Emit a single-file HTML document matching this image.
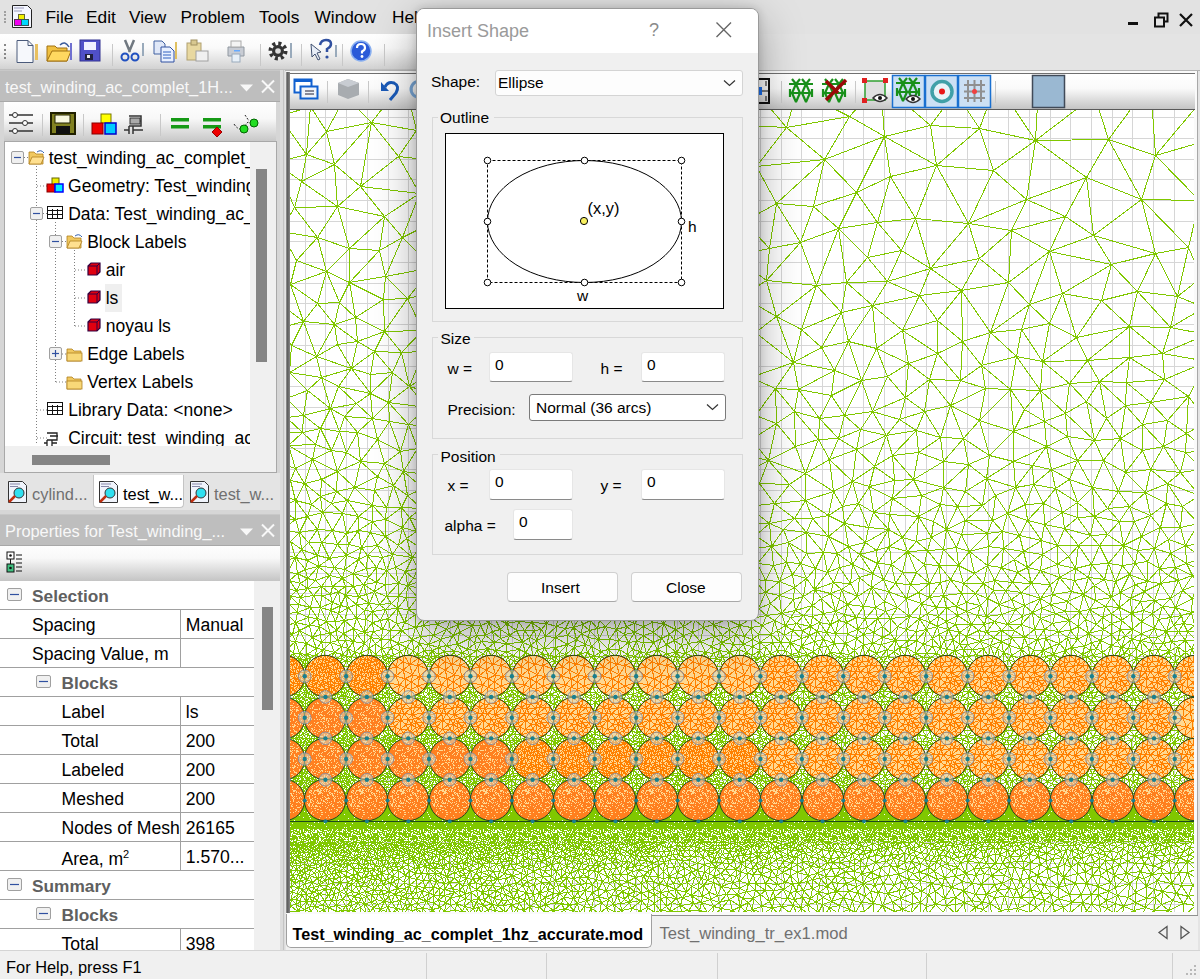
<!DOCTYPE html><html><head><meta charset="utf-8"><style>
*{margin:0;padding:0;box-sizing:border-box}
body{width:1200px;height:979px;overflow:hidden;position:relative;background:#e4e4e4;font-family:"Liberation Sans",sans-serif;}
.a{position:absolute}
.t{position:absolute;white-space:nowrap;line-height:1}
svg{position:absolute;overflow:visible}
</style></head><body>
<div class="a" style="left:0px;top:0px;width:1200px;height:34px;background:#e2e2e2"></div>
<div class="t" style="left:45.5px;top:9.4px;font-size:17.3px;color:#000;">File</div>
<div class="t" style="left:86.0px;top:9.4px;font-size:17.3px;color:#000;">Edit</div>
<div class="t" style="left:129.0px;top:9.4px;font-size:17.3px;color:#000;">View</div>
<div class="t" style="left:180.5px;top:9.4px;font-size:17.3px;color:#000;">Problem</div>
<div class="t" style="left:259.0px;top:9.4px;font-size:17.3px;color:#000;">Tools</div>
<div class="t" style="left:314.5px;top:9.4px;font-size:17.3px;color:#000;">Window</div>
<div class="t" style="left:392.0px;top:9.4px;font-size:17.3px;color:#000;">Help</div>
<svg style="left:12px;top:5px" width="22" height="24"><path d="M.5 .5h15l4 4v18h-19z" fill="#f4f6ff" stroke="#222" stroke-width="1"/><path d="M2 3h10M2 6h8" stroke="#99b" stroke-width="1"/><rect x="6.5" y="9.5" width="6" height="6" fill="#f0f000" stroke="#663"/><rect x="2.5" y="14.5" width="7" height="6" fill="#f000f0" stroke="#535"/><rect x="9.5" y="14.5" width="7" height="6" fill="#00d8ff" stroke="#355"/></svg>
<div class="a" style="left:4px;top:11px;width:2px;height:12px;border-left:2px dotted #a0a0a0"></div>
<div class="a" style="left:1128px;top:22px;width:10px;height:3px;background:#111"></div>
<svg style="left:1154px;top:12px" width="15" height="16"><rect x="4.5" y="1.5" width="9" height="8" fill="none" stroke="#111" stroke-width="2"/><rect x="1" y="5.5" width="9" height="9" fill="#e6e6e6" stroke="#111" stroke-width="2"/></svg>
<svg style="left:1178px;top:13px" width="16" height="14"><path d="M2 1L14 13M14 1L2 13" stroke="#111" stroke-width="2.2"/></svg>
<div class="a" style="left:0px;top:34px;width:430px;height:36px;background:linear-gradient(#ffffff 0%,#fafafa 40%,#d2d2d2 100%);border-bottom:1px solid #c0c0c0"></div>
<div class="a" style="left:4px;top:44px;height:15px;border-left:2px dotted #888"></div>
<svg style="left:14px;top:39px" width="390" height="25">
 <path d="M3 1.5h11l5 5v17h-16z" fill="#f6f8fc" stroke="#4a5a7a"/><path d="M14 1.5v5h5" fill="none" stroke="#4a5a7a"/>
 <rect x="21" y="5" width="3" height="16" fill="#e8c060"/>
 <path d="M33 7h8l2 2h10v13h-20z" fill="#f0c040" stroke="#a07010"/><path d="M33 22l5-10h19l-4 10z" fill="#ffd860" stroke="#a07010"/><path d="M46 6q5-5 9 2" fill="none" stroke="#3a5a9a" stroke-width="1.5"/><rect x="56" y="4" width="2" height="17" fill="#7070d0"/>
 <rect x="66" y="1" width="20" height="21" fill="#5050c8" stroke="#303090"/><rect x="70" y="3" width="12" height="8" fill="#f0f0ff"/><rect x="71" y="15" width="8" height="6" fill="#202040"/><rect x="73" y="16" width="3" height="3" fill="#eee"/>
 <rect x="98" y="5" width="1" height="22" fill="#c8c8c8"/>
 <path d="M111 1l5 12M120 1l-5 12" stroke="#707880" stroke-width="2.5"/><circle cx="111" cy="18" r="3.5" fill="none" stroke="#2050c0" stroke-width="2"/><circle cx="121" cy="18" r="3.5" fill="none" stroke="#2050c0" stroke-width="2"/><rect x="128" y="4" width="2" height="13" fill="#9ab"/>
 <path d="M140 2h8l3 3v10h-11z" fill="#e0e8f8" stroke="#4060a0"/><path d="M147 8h9l4 4v11h-13z" fill="#e8f0ff" stroke="#3050a0"/><path d="M149 13h8M149 16h8M149 19h8" stroke="#3060c0"/><rect x="161" y="3" width="2" height="17" fill="#e0c060"/>
 <rect x="173" y="4" width="14" height="17" fill="#e8d8a0" stroke="#b0a070"/><rect x="177" y="1" width="6" height="5" fill="#d8c890" stroke="#a09060"/><rect x="182" y="12" width="12" height="10" fill="#f0f0f0" stroke="#a0a0a0"/>
 <path d="M214 8h16v9h-16z" fill="#c8ccd4" stroke="#9098a0"/><rect x="217" y="2" width="10" height="6" fill="#f4f4f4" stroke="#aaa"/><rect x="218" y="15" width="8" height="8" fill="#e8f0f8" stroke="#9ab"/><rect x="220" y="11" width="6" height="1.5" fill="#6af"/>
 <rect x="246" y="5" width="1" height="22" fill="#c8c8c8"/>
 <circle cx="264" cy="12" r="7.5" fill="none" stroke="#333" stroke-width="4" stroke-dasharray="3 2.9"/><circle cx="264" cy="12" r="6" fill="#333"/><circle cx="264" cy="12" r="2.8" fill="#ddd"/><rect x="276" y="4" width="2" height="15" fill="#9ab"/>
 <rect x="287" y="5" width="1" height="22" fill="#c8c8c8"/>
 <path d="M297 5l10 8-4 1 3 6-2 1-3-6-3 3z" fill="#e8eef8" stroke="#405070"/><path d="M306 6q1-5 6-5q5 0 5 4q0 3-4 5v3" fill="none" stroke="#3050a0" stroke-width="2.5"/><circle cx="313" cy="18" r="1.6" fill="#3050a0"/><rect x="321" y="6" width="2" height="12" fill="#9ab"/>
 <rect x="328" y="5" width="1" height="22" fill="#c8c8c8"/>
 <circle cx="347" cy="12" r="10" fill="#2a5ad8" stroke="#8ab0f0" stroke-width="1.5"/><path d="M343 9q0-4 4-4t4 4q0 2-3 3.5v2" fill="none" stroke="#fff" stroke-width="2.2"/><circle cx="348" cy="17.5" r="1.4" fill="#fff"/>
 <rect x="370" y="5" width="1" height="22" fill="#c8c8c8"/>
</svg>
<div class="a" style="left:0px;top:70px;width:286px;height:880px;background:#d6d6d6"></div>
<div class="a" style="left:0px;top:70px;width:280px;height:32px;background:#bebebe;border-top:1px solid #c8c8c8;border-bottom:1px solid #a8a8a8"></div>
<div class="t" style="left:5.0px;top:79.1px;font-size:16.4px;color:#f8f8f8;">test_winding_ac_complet_1H...</div>
<svg style="left:239px;top:83px" width="38" height="14"><path d="M1 1.5h13l-6.5 7z" fill="#f8f8f8"/><path d="M23 -2.5l12 12M35 -2.5l-12 12" stroke="#f8f8f8" stroke-width="2"/></svg>
<div class="a" style="left:4px;top:102px;width:272px;height:40px;background:linear-gradient(#fefefe 0%,#f8f8f8 40%,#c6c6c6 100%);border-top:1px solid #fff"></div>
<svg style="left:8px;top:112px" width="250" height="25">
<path d="M1 3h24M1 11h24M1 19h24" stroke="#333" stroke-width="1.5"/><circle cx="7" cy="3" r="2.5" fill="#fff" stroke="#333"/><circle cx="17" cy="11" r="2.5" fill="#fff" stroke="#333"/><circle cx="7" cy="19" r="2.5" fill="#fff" stroke="#333"/>
<rect x="34" y="2" width="1" height="22" fill="#c8c8c8"/>
<rect x="43" y="1" width="24" height="21" fill="#808020" stroke="#202000" stroke-width="2"/><rect x="47" y="3" width="15" height="8" fill="#f8f8e0" stroke="#202000"/><rect x="48" y="14" width="14" height="8" fill="#101010"/>
<rect x="75" y="2" width="1" height="22" fill="#c8c8c8"/>
<rect x="93" y="2" width="10" height="9" fill="#ff0" stroke="#770"/><rect x="84" y="11" width="11" height="11" fill="#e00" stroke="#800"/><rect x="97" y="11" width="11" height="11" fill="#0cf" stroke="#00c" stroke-width="1.5"/>
<path d="M121 4h12v10h-12M124 9h9M121 14v8M125 14v8M116 18h5M125 18h10" fill="none" stroke="#333" stroke-width="1.5"/><rect x="122" y="6" width="10" height="6" fill="#aaa" stroke="#333"/>
<rect x="152" y="2" width="1" height="22" fill="#c8c8c8"/>
<rect x="163" y="6" width="18" height="3.5" fill="#169a16"/><rect x="163" y="13" width="18" height="3.5" fill="#169a16"/>
<rect x="195" y="6" width="18" height="3.5" fill="#169a16"/><rect x="195" y="13" width="18" height="3.5" fill="#169a16"/><path d="M209 15l5 5-5 5-5-5z" fill="#e00" stroke="#900"/>
<path d="M226 12q4 6 8 5l6-7 6 2M237 3l4 6" fill="none" stroke="#222" stroke-dasharray="2 1.5"/><circle cx="236" cy="17" r="4" fill="#2d2" stroke="#060"/><circle cx="246" cy="11" r="4" fill="#2d2" stroke="#060"/>
</svg>
<div class="a" style="left:4px;top:141px;width:273px;height:332px;background:#fff;border:1px solid #a8a8a8"></div>
<div class="a" style="left:250px;top:142px;width:26px;height:330px;background:#f0f0f0"></div>
<div class="a" style="left:256px;top:169px;width:11px;height:193px;background:#858585"></div>
<div class="a" style="left:5px;top:446px;width:246px;height:26px;background:#f0f0f0"></div>
<div class="a" style="left:32px;top:455px;width:78px;height:10px;background:#858585"></div>
<svg style="left:5px;top:142px" width="245" height="304"><path d="M31.5 24L31.5 303" stroke="#808080" stroke-dasharray="1 2" fill="none"/><path d="M50.5 80L50.5 240" stroke="#808080" stroke-dasharray="1 2" fill="none"/><path d="M69.5 108L69.5 184" stroke="#808080" stroke-dasharray="1 2" fill="none"/><path d="M32 44L42 44" stroke="#808080" stroke-dasharray="1 2" fill="none"/><path d="M32 268L42 268" stroke="#808080" stroke-dasharray="1 2" fill="none"/><path d="M32 296L42 296" stroke="#808080" stroke-dasharray="1 2" fill="none"/><path d="M51 212L61 212" stroke="#808080" stroke-dasharray="1 2" fill="none"/><path d="M51 240L61 240" stroke="#808080" stroke-dasharray="1 2" fill="none"/><path d="M70 128L81 128" stroke="#808080" stroke-dasharray="1 2" fill="none"/><path d="M70 156L81 156" stroke="#808080" stroke-dasharray="1 2" fill="none"/><path d="M70 184L81 184" stroke="#808080" stroke-dasharray="1 2" fill="none"/><path d="M19 15.5L24 15.5" stroke="#808080" stroke-dasharray="1 2" fill="none"/><path d="M38 71.5L42 71.5" stroke="#808080" stroke-dasharray="1 2" fill="none"/><path d="M57 99.5L61 99.5" stroke="#808080" stroke-dasharray="1 2" fill="none"/><rect x="6.5" y="9.5" width="12" height="12" rx="1.5" fill="#f0f0f0" stroke="#a0a0a0"/><path d="M9 15.5h7" stroke="#3050a0" stroke-width="1.2"/><rect x="25.5" y="65.5" width="12" height="12" rx="1.5" fill="#f0f0f0" stroke="#a0a0a0"/><path d="M28 71.5h7" stroke="#3050a0" stroke-width="1.2"/><rect x="44.5" y="93.5" width="12" height="12" rx="1.5" fill="#f0f0f0" stroke="#a0a0a0"/><path d="M47 99.5h7" stroke="#3050a0" stroke-width="1.2"/><rect x="44.5" y="205.5" width="12" height="12" rx="1.5" fill="#f0f0f0" stroke="#a0a0a0"/><path d="M47 211.5h7" stroke="#3050a0" stroke-width="1.2"/><path d="M50.5 208v7" stroke="#3050a0" stroke-width="1.2"/><path d="M24 10h5l2 2h7v10h-14z" fill="#f0c860" stroke="#b08020" stroke-width="0.8"/><path d="M24 22l3-7h12l-3 7z" fill="#ffe090" stroke="#b08020" stroke-width="0.8"/><path d="M32 10q4-3 7 1" fill="none" stroke="#3060b0"/><path d="M62 94h5l2 2h7v10h-14z" fill="#f0c860" stroke="#b08020" stroke-width="0.8"/><path d="M62 106l3-7h12l-3 7z" fill="#ffe090" stroke="#b08020" stroke-width="0.8"/><path d="M70 94q4-3 7 1" fill="none" stroke="#3060b0"/><path d="M62 207h5l2 2h7v10h-14z" fill="#f0c860" stroke="#b08020" stroke-width="0.8"/><rect x="62" y="211" width="15" height="8" fill="#f8d878" stroke="#b08020" stroke-width="0.8"/><path d="M62 235h5l2 2h7v10h-14z" fill="#f0c860" stroke="#b08020" stroke-width="0.8"/><rect x="62" y="239" width="15" height="8" fill="#f8d878" stroke="#b08020" stroke-width="0.8"/><rect x="47" y="36" width="7" height="7" fill="#ee0" stroke="#660"/><rect x="42" y="42" width="8" height="8" fill="#e00" stroke="#800"/><rect x="50" y="42" width="8" height="8" fill="#0ef" stroke="#00f" stroke-width="1.5"/><rect x="42.5" y="64.5" width="15" height="12" fill="#fff" stroke="#111"/><path d="M42 68.5h16M42 72.5h16M47.5 67v10M52.5 67v10" stroke="#111"/><rect x="42.5" y="260.5" width="15" height="12" fill="#fff" stroke="#111"/><path d="M42 264.5h16M42 268.5h16M47.5 263v10M52.5 263v10" stroke="#111"/><path d="M83 124l3-3h9v9l-3 3h-9z" fill="#e00010" stroke="#300040" stroke-width="1.2"/><path d="M92 133v-9l3-3" fill="none" stroke="#300040"/><path d="M83 124h9" stroke="#300040"/><path d="M83 152l3-3h9v9l-3 3h-9z" fill="#e00010" stroke="#300040" stroke-width="1.2"/><path d="M92 161v-9l3-3" fill="none" stroke="#300040"/><path d="M83 152h9" stroke="#300040"/><path d="M83 180l3-3h9v9l-3 3h-9z" fill="#e00010" stroke="#300040" stroke-width="1.2"/><path d="M92 189v-9l3-3" fill="none" stroke="#300040"/><path d="M83 180h9" stroke="#300040"/><path d="M42 291h10v7h-10M45 294h8M42 298v6M47 298v6M39 301h3M47 301h5" fill="none" stroke="#222" stroke-width="1.3"/></svg>
<div class="a" style="left:105px;top:284px;width:17px;height:28px;background:#efefef"></div>
<div class="a" style="left:5px;top:142px;width:245px;height:304px;overflow:hidden">
<div class="t" style="left:43.7px;top:8.2px;font-size:17.5px;color:#000;">test_winding_ac_complet_1hz</div>
<div class="t" style="left:63.1px;top:36.2px;font-size:17.5px;color:#000;">Geometry: Test_winding_ac</div>
<div class="t" style="left:63.2px;top:64.2px;font-size:17.5px;color:#000;">Data: Test_winding_ac_complet</div>
<div class="t" style="left:82.2px;top:92.2px;font-size:17.5px;color:#000;">Block Labels</div>
<div class="t" style="left:100.7px;top:120.2px;font-size:17.5px;color:#000;">air</div>
<div class="t" style="left:100.7px;top:148.2px;font-size:17.5px;color:#000;">ls</div>
<div class="t" style="left:100.7px;top:176.2px;font-size:17.5px;color:#000;">noyau ls</div>
<div class="t" style="left:82.2px;top:204.2px;font-size:17.5px;color:#000;">Edge Labels</div>
<div class="t" style="left:82.2px;top:232.2px;font-size:17.5px;color:#000;">Vertex Labels</div>
<div class="t" style="left:63.2px;top:260.2px;font-size:17.5px;color:#000;">Library Data: &lt;none&gt;</div>
<div class="t" style="left:63.2px;top:288.2px;font-size:17.5px;color:#000;">Circuit: test_winding_ac_complet</div>
</div>
<div class="a" style="left:0px;top:473px;width:286px;height:37px;background:#e4e4e4"></div>
<div class="a" style="left:93px;top:475px;width:91px;height:33px;background:#fff;border:1px solid #c4c4c4;border-top:none;border-radius:0 0 4px 4px"></div>
<svg style="left:7px;top:480px" width="22" height="24"><path d="M1.5 1.5h14l4 4v17h-18z" fill="#f0f4fc" stroke="#333"/><path d="M3 4h10M3 6.5h8" stroke="#88a"/><circle cx="12" cy="13" r="5" fill="#30e0f0" stroke="#333"/><path d="M8 16l-6 6" stroke="#c03010" stroke-width="2.5"/></svg>
<svg style="left:98px;top:480px" width="22" height="24"><path d="M1.5 1.5h14l4 4v17h-18z" fill="#f0f4fc" stroke="#333"/><path d="M3 4h10M3 6.5h8" stroke="#88a"/><circle cx="12" cy="13" r="5" fill="#30e0f0" stroke="#333"/><path d="M8 16l-6 6" stroke="#c03010" stroke-width="2.5"/></svg>
<svg style="left:189px;top:480px" width="22" height="24"><path d="M1.5 1.5h14l4 4v17h-18z" fill="#f0f4fc" stroke="#333"/><path d="M3 4h10M3 6.5h8" stroke="#88a"/><circle cx="12" cy="13" r="5" fill="#30e0f0" stroke="#333"/><path d="M8 16l-6 6" stroke="#c03010" stroke-width="2.5"/></svg>
<div class="t" style="left:32.0px;top:486.1px;font-size:16.4px;color:#707070;">cylind...</div>
<div class="t" style="left:123.0px;top:486.1px;font-size:16.4px;color:#000;">test_w...</div>
<div class="t" style="left:214.0px;top:486.1px;font-size:16.4px;color:#707070;">test_w...</div>
<div class="a" style="left:0px;top:514px;width:280px;height:32px;background:#bebebe;border-top:1px solid #c8c8c8;border-bottom:1px solid #a8a8a8"></div>
<div class="t" style="left:5.0px;top:523.1px;font-size:16.4px;color:#f8f8f8;">Properties for Test_winding_...</div>
<svg style="left:239px;top:527px" width="38" height="14"><path d="M1 1.5h13l-6.5 7z" fill="#f8f8f8"/><path d="M23 -2.5l12 12M35 -2.5l-12 12" stroke="#f8f8f8" stroke-width="2"/></svg>
<div class="a" style="left:0px;top:546px;width:280px;height:35px;background:linear-gradient(#fefefe 0%,#f8f8f8 35%,#c4c4c4 100%)"></div>
<svg style="left:6px;top:551px" width="24" height="25"><rect x="1" y="1" width="7" height="7" fill="#fff" stroke="#111"/><rect x="1" y="13" width="7" height="8" fill="#40c080" stroke="#111"/><path d="M4.5 8v5M10 4h6M10 8h6M10 12h6M10 16h6M10 20h6" stroke="#111"/><circle cx="4.5" cy="4.5" r="1.3" fill="#111"/><circle cx="4.5" cy="17" r="1.3" fill="#111"/></svg>
<div class="a" style="left:0px;top:581px;width:254px;height:369px;background:#fff"></div>
<div class="a" style="left:254px;top:581px;width:26px;height:369px;background:#f0f0f0"></div>
<div class="a" style="left:262px;top:607px;width:11px;height:103px;background:#858585"></div>
<div class="a" style="left:0px;top:609px;width:254px;height:1px;background:#a0a0a0"></div>
<div class="a" style="left:0px;top:638px;width:254px;height:1px;background:#a0a0a0"></div>
<div class="a" style="left:0px;top:667px;width:254px;height:1px;background:#a0a0a0"></div>
<div class="a" style="left:0px;top:696px;width:254px;height:1px;background:#a0a0a0"></div>
<div class="a" style="left:0px;top:725px;width:254px;height:1px;background:#a0a0a0"></div>
<div class="a" style="left:0px;top:754px;width:254px;height:1px;background:#a0a0a0"></div>
<div class="a" style="left:0px;top:783px;width:254px;height:1px;background:#a0a0a0"></div>
<div class="a" style="left:0px;top:812px;width:254px;height:1px;background:#a0a0a0"></div>
<div class="a" style="left:0px;top:841px;width:254px;height:1px;background:#a0a0a0"></div>
<div class="a" style="left:0px;top:870px;width:254px;height:1px;background:#a0a0a0"></div>
<div class="a" style="left:0px;top:899px;width:254px;height:1px;background:#a0a0a0"></div>
<div class="a" style="left:0px;top:928px;width:254px;height:1px;background:#a0a0a0"></div>
<div class="a" style="left:180px;top:609px;width:1px;height:58px;background:#a0a0a0"></div>
<div class="a" style="left:180px;top:696px;width:1px;height:174px;background:#a0a0a0"></div>
<div class="a" style="left:180px;top:928px;width:1px;height:22px;background:#a0a0a0"></div>
<svg style="left:7px;top:588px" width="16" height="14"><rect x=".5" y=".5" width="14" height="12" rx="1.5" fill="#f0f0f0" stroke="#a0a0a0"/><path d="M3 6.5h9" stroke="#3050a0" stroke-width="1.2"/></svg>
<svg style="left:36px;top:675px" width="16" height="14"><rect x=".5" y=".5" width="14" height="12" rx="1.5" fill="#f0f0f0" stroke="#a0a0a0"/><path d="M3 6.5h9" stroke="#3050a0" stroke-width="1.2"/></svg>
<svg style="left:7px;top:878px" width="16" height="14"><rect x=".5" y=".5" width="14" height="12" rx="1.5" fill="#f0f0f0" stroke="#a0a0a0"/><path d="M3 6.5h9" stroke="#3050a0" stroke-width="1.2"/></svg>
<svg style="left:36px;top:907px" width="16" height="14"><rect x=".5" y=".5" width="14" height="12" rx="1.5" fill="#f0f0f0" stroke="#a0a0a0"/><path d="M3 6.5h9" stroke="#3050a0" stroke-width="1.2"/></svg>
<div class="t" style="left:32.0px;top:588.4px;font-size:17.3px;color:#606060;font-weight:bold;">Selection</div>
<div class="t" style="left:61.5px;top:675.4px;font-size:17.3px;color:#606060;font-weight:bold;">Blocks</div>
<div class="t" style="left:32.0px;top:878.4px;font-size:17.3px;color:#606060;font-weight:bold;">Summary</div>
<div class="t" style="left:61.5px;top:907.4px;font-size:17.3px;color:#606060;font-weight:bold;">Blocks</div>
<div class="a" style="left:0;top:581px;width:180px;height:369px;overflow:hidden">
<div class="t" style="left:32.0px;top:36.1px;font-size:17.6px;color:#000;">Spacing</div>
<div class="t" style="left:32.0px;top:65.1px;font-size:17.6px;color:#000;">Spacing Value, m</div>
<div class="t" style="left:61.5px;top:123.1px;font-size:17.6px;color:#000;">Label</div>
<div class="t" style="left:61.5px;top:152.1px;font-size:17.6px;color:#000;">Total</div>
<div class="t" style="left:61.5px;top:181.1px;font-size:17.6px;color:#000;">Labeled</div>
<div class="t" style="left:61.5px;top:210.1px;font-size:17.6px;color:#000;">Meshed</div>
<div class="t" style="left:61.5px;top:239.1px;font-size:17.6px;color:#000;">Nodes of Mesh</div>
<div class="t" style="left:61.5px;top:268.1px;font-size:17.6px;color:#000;">Area, m<sup style="font-size:11px;vertical-align:7px">2</sup></div>
<div class="t" style="left:61.5px;top:355.1px;font-size:17.6px;color:#000;">Total</div>
</div>
<div class="t" style="left:185.8px;top:617.1px;font-size:17.6px;color:#000;">Manual</div>
<div class="t" style="left:185.8px;top:704.1px;font-size:17.6px;color:#000;">ls</div>
<div class="t" style="left:185.8px;top:733.1px;font-size:17.6px;color:#000;">200</div>
<div class="t" style="left:185.8px;top:762.1px;font-size:17.6px;color:#000;">200</div>
<div class="t" style="left:185.8px;top:791.1px;font-size:17.6px;color:#000;">200</div>
<div class="t" style="left:185.8px;top:820.1px;font-size:17.6px;color:#000;">26165</div>
<div class="t" style="left:185.8px;top:849.1px;font-size:17.6px;color:#000;">1.570...</div>
<div class="t" style="left:185.8px;top:936.1px;font-size:17.6px;color:#000;">398</div>
<div class="a" style="left:280px;top:70px;width:6px;height:880px;background:#dcdcdc"></div>
<div class="a" style="left:283px;top:70px;width:1px;height:880px;background:#c4c4c4"></div>
<div class="a" style="left:0px;top:950px;width:1200px;height:29px;background:#f0f0f0;border-top:1px solid #d4d4d4"></div>
<div class="t" style="left:6.0px;top:959.1px;font-size:16.4px;color:#000;">For Help, press F1</div>
<div class="a" style="left:426px;top:953px;width:1px;height:26px;background:#d0d0d0"></div>
<div class="a" style="left:546px;top:953px;width:1px;height:26px;background:#d0d0d0"></div>
<div class="a" style="left:717px;top:953px;width:1px;height:26px;background:#d0d0d0"></div>
<div class="a" style="left:926px;top:953px;width:1px;height:26px;background:#d0d0d0"></div>
<div class="a" style="left:1172px;top:953px;width:1px;height:26px;background:#d0d0d0"></div>
<svg style="left:1184px;top:963px" width="16" height="16"><g fill="#b8b8b8"><rect x="10" y="2" width="2" height="2"/><rect x="6" y="6" width="2" height="2"/><rect x="10" y="6" width="2" height="2"/><rect x="2" y="10" width="2" height="2"/><rect x="6" y="10" width="2" height="2"/><rect x="10" y="10" width="2" height="2"/></g></svg>
<div class="a" style="left:285px;top:70px;width:915px;height:880px;background:#e4e4e4"></div>
<div class="a" style="left:285px;top:70px;width:915px;height:1px;background:#b4b4b4"></div>
<div class="a" style="left:286px;top:71px;width:912px;height:846px;background:#fafafa"></div>
<div class="a" style="left:286px;top:72px;width:4px;height:841px;background:linear-gradient(90deg,#9a9a9a,#5e5e5e 40%,#8a8a8a)"></div>
<div class="a" style="left:1197px;top:71px;width:1px;height:845px;background:#a8a8a8"></div>
<div class="a" style="left:286px;top:915px;width:912px;height:1px;background:#909090"></div>
<div class="a" style="left:290px;top:73px;width:905px;height:37px;background:linear-gradient(#ffffff 0%,#fafafa 40%,#c2c2c2 100%);border-top:1px solid #707070"></div>
<div class="a" style="left:290px;top:109px;width:905px;height:1px;background:#5a5a5a"></div>
<svg style="left:290px;top:73px" width="905" height="37">
<rect x="4.5" y="6.5" width="17" height="13" fill="#fff" stroke="#1060d0" stroke-width="2"/><rect x="4" y="6" width="18" height="3" fill="#1060d0"/><rect x="10.5" y="13.5" width="17" height="12" fill="#f0f4fa" stroke="#1060d0" stroke-width="2"/><path d="M15 18h9M15 21h9" stroke="#667" stroke-width="1.5"/>
<rect x="37" y="8" width="1" height="22" fill="#c8c8c8"/>
<path d="M48 10l10-4 11 4v12l-11 4-10-4z" fill="#a8acb0"/><path d="M48 10l10 4 11-4-11-4z" fill="#c8ccd2"/>
<rect x="78" y="8" width="1" height="22" fill="#c8c8c8"/>
<path d="M95 14q3-6 9-4q6 3 2 10l-6 7" fill="none" stroke="#1a5ab8" stroke-width="3"/><path d="M91 9v9h8z" fill="#1a5ab8"/>
<path d="M135 11a8 8 0 1 0 2 6" fill="none" stroke="#7aa8d8" stroke-width="3"/>
</svg>
<svg style="left:758px;top:73px" width="320" height="37">
<path d="M-1 6h12v24h-12" fill="none" stroke="#111" stroke-width="2"/><rect x="-3" y="14" width="7" height="8" fill="#1a70f0"/><path d="M4 18h6M8 8v5M8 23v5" stroke="#111"/>
<rect x="23" y="8" width="1" height="22" fill="#c8c8c8"/>
<path d="M31 11h24M31 20h24M32 16v8M54 16v8M34 6L38 11L42 6M38 11L34 20L38 29M38 11L42 20L38 29M44 6L48 11L52 6M48 11L44 20L48 29M48 11L52 20L48 29" stroke="#18901a" stroke-width="2.2" fill="none"/>
<path d="M64 11h24M64 20h24M65 16v8M87 16v8M67 6L71 11L75 6M71 11L67 20L71 29M71 11L75 20L71 29M77 6L81 11L85 6M81 11L77 20L81 29M81 11L85 20L81 29" stroke="#18901a" stroke-width="2.2" fill="none"/><path d="M68 27l20-20M68 8l12 12" stroke="#9a0808" stroke-width="3.5"/>
<rect x="97" y="8" width="1" height="22" fill="#c8c8c8"/>
<rect x="107" y="8" width="20" height="19" fill="#e0e0e0" stroke="#30a030" stroke-width="1.5"/><g fill="#e02020"><rect x="104" y="5" width="5" height="5"/><rect x="125" y="5" width="5" height="5"/><rect x="104" y="25" width="5" height="5"/></g><path d="M115 25q7-7 14 0q-7 7-14 0z" fill="#fff" stroke="#333" stroke-width="1.5"/><circle cx="122" cy="25" r="2" fill="#111"/>
<rect x="134.5" y="2.5" width="32" height="32" fill="#cce0f4" stroke="#1a70d0" stroke-width="1.5"/><rect x="167.5" y="2.5" width="32" height="32" fill="#cce0f4" stroke="#1a70d0" stroke-width="1.5"/><rect x="200.5" y="2.5" width="32" height="32" fill="#cce0f4" stroke="#1a70d0" stroke-width="1.5"/>
<path d="M138 10h24M138 19h24M139 15v8M161 15v8M141 5L145 10L149 5M145 10L141 19L145 28M145 10L149 19L145 28M151 5L155 10L159 5M155 10L151 19L155 28M155 10L159 19L155 28" stroke="#18901a" stroke-width="2.2" fill="none"/><path d="M148 26q7-7 14 0q-7 7-14 0z" fill="#fff" stroke="#333" stroke-width="1.5"/><circle cx="155" cy="26" r="2" fill="#111"/>
<circle cx="184" cy="18.5" r="10" fill="#e8f4f8" stroke="#40a0a8" stroke-width="3.5"/><circle cx="184" cy="18.5" r="3" fill="#e81818"/>
<path d="M206 12h21M206 18.5h21M206 25h21M210 7v22M216.5 7v22M223 7v22" stroke="#909090" stroke-width="2"/><circle cx="216.5" cy="18.5" r="2.5" fill="#f04040"/>
<rect x="237" y="8" width="1" height="22" fill="#c8c8c8"/>
<rect x="274.5" y="2.5" width="32" height="32" fill="#9ab8d2" stroke="#404a58" stroke-width="1.5"/>
</svg>
<svg style="left:290px;top:110px;overflow:hidden" width="904" height="802" viewBox="0 0 904 802"><defs><g id="cA"><circle r="20.7" fill="#ffd890"/><path d="M10.3 -17.9L1.6 -11.4M-10.3 17.9L-8.4 9.0M15.9 -13.3L9.9 -10.7M3.3 13.5L9.9 9.9M4.6 -1.1L-4.7 -6.0M10.4 17.9L3.6 20.4M15.9 -13.3L19.5 -7.1M-10.4 -17.9L-3.6 -20.4M9.9 -10.7L11.5 0.7M-19.5 7.1L-20.7 0.0M10.4 17.9L3.3 13.5M-3.6 20.4L-3.0 11.3M-3.6 20.4L3.3 13.5M-19.5 7.1L-8.4 9.0M-2.9 2.7L-4.7 -6.0M20.7 0.0L19.5 -7.1M-3.6 -20.4L3.6 -20.4M20.7 0.0L11.5 0.7M-3.6 -20.4L-5.0 -14.3M-19.5 -7.1L-11.4 -9.0M4.6 -1.1L11.5 0.7M15.9 13.3L9.9 9.9M10.3 -17.9L9.9 -10.7M3.3 13.5L3.1 6.0M-8.4 9.0L-3.0 11.3M3.6 20.4L-3.6 20.4M-8.4 9.0L-12.2 0.2M-8.4 9.0L-2.9 2.7M11.5 0.7L9.9 9.9M-3.6 20.4L-10.3 17.9M1.6 -11.4L4.6 -1.1M9.9 9.9L3.1 6.0M1.6 -11.4L-4.7 -6.0M-3.0 11.3L3.1 6.0M3.6 -20.4L10.3 -17.9M3.6 -20.4L1.6 -11.4M-12.2 0.2L-2.9 2.7M-5.0 -14.3L-4.7 -6.0M-5.0 -14.3L-11.4 -9.0M-10.4 -17.9L-11.4 -9.0M-20.7 0.0L-19.5 -7.1M20.7 0.0L19.5 7.1M19.5 7.1L15.9 13.3M19.5 -7.1L9.9 -10.7M19.5 -7.1L11.5 0.7M-19.5 -7.1L-15.9 -13.3M-11.4 -9.0L-4.7 -6.0M-20.7 0.0L-12.2 0.2M10.3 -17.9L15.9 -13.3M-10.3 17.9L-15.9 13.3M19.5 7.1L11.5 0.7M4.6 -1.1L-2.9 2.7M19.5 7.1L9.9 9.9M-10.3 17.9L-3.0 11.3M4.6 -1.1L3.1 6.0M-15.9 13.3L-8.4 9.0M1.6 -11.4L-5.0 -14.3M9.9 -10.7L1.6 -11.4M11.5 0.7L3.1 6.0M-10.4 -17.9L-5.0 -14.3M9.9 -10.7L4.6 -1.1M-12.2 0.2L-11.4 -9.0M-12.2 0.2L-4.7 -6.0M3.6 20.4L3.3 13.5M15.9 13.3L10.4 17.9M10.4 17.9L9.9 9.9M-15.9 -13.3L-10.4 -17.9M-3.0 11.3L3.3 13.5M-19.5 7.1L-12.2 0.2M-3.0 11.3L-2.9 2.7M-2.9 2.7L3.1 6.0M-19.5 -7.1L-12.2 0.2M-3.6 -20.4L1.6 -11.4M-15.9 -13.3L-11.4 -9.0M-15.9 13.3L-19.5 7.1" stroke="#ff8000" stroke-width="1" fill="none" shape-rendering="crispEdges"/><circle r="20.7" fill="none" stroke="#1e4a1e" stroke-width="1"/></g><g id="cB"><circle r="20.7" fill="#ffd890"/><path d="M-15.3 4.7L-13.2 0.6M-1.9 -14.0L2.6 -9.6M14.7 -4.7L11.8 -10.1M-8.0 11.3L-7.6 2.4M5.2 1.1L3.3 6.6M14.7 -4.7L4.3 -3.5M14.7 -4.7L9.8 0.3M19.9 5.6L14.9 4.5M-6.9 -19.5L-1.9 -14.0M-13.1 8.9L-15.3 4.7M-11.9 16.9L-16.1 13.1M0.3 1.1L4.3 -3.5M5.1 -15.3L2.6 -9.6M14.1 15.1L8.8 13.8M-3.4 -4.4L4.3 -3.5M-7.6 2.4L0.3 1.1M4.2 -20.3L9.5 -18.4M-13.1 -5.0L-8.1 -4.1M-16.1 -13.1L-11.9 -16.9M0.3 1.1L5.2 1.1M-20.5 -2.8L-13.1 -5.0M-16.1 13.1L-19.0 8.2M2.9 14.3L8.8 13.8M-11.9 -16.9L-6.9 -19.5M-1.6 6.6L-0.6 11.1M-19.0 -8.2L-11.4 -10.5M-11.9 -16.9L-6.9 -13.8M-19.0 8.2L-13.1 8.9M-7.6 2.4L-3.4 -4.4M-20.5 2.8L-13.2 0.6M14.1 -15.1L11.8 -10.1M-6.6 -8.8L-8.1 -4.1M14.1 15.1L12.4 8.6M8.8 13.8L7.6 9.3M-6.9 -19.5L-1.4 -20.7M7.2 -10.8L2.6 -9.6M9.5 -18.4L7.2 -10.8M-11.4 -10.5L-6.6 -8.8M11.8 -10.1L4.3 -3.5M-6.9 19.5L-4.3 14.4M-7.6 2.4L-8.1 -4.1M5.2 1.1L9.8 0.3M-6.9 -13.8L-1.9 -14.0M-20.5 -2.8L-19.0 -8.2M-8.0 11.3L-0.6 11.1M-16.1 -13.1L-11.4 -10.5M-4.3 14.4L2.9 14.3M14.9 4.5L15.8 -0.2M-19.0 -8.2L-16.1 -13.1M-7.6 2.4L-1.6 6.6M15.8 -0.2L9.8 0.3M-20.5 2.8L-15.3 4.7M20.7 0.0L15.8 -0.2M-6.6 -8.8L-1.9 -14.0M0.3 1.1L-3.4 -4.4M9.5 -18.4L14.1 -15.1M-11.9 16.9L-13.1 8.9M-1.6 6.6L3.3 6.6M3.3 6.6L-0.6 11.1M9.5 -18.4L5.1 -15.3M14.1 -15.1L17.7 -10.8M17.7 10.8L14.9 4.5M-1.4 20.7L2.9 14.3M-3.4 -4.4L2.6 -9.6M-4.3 14.4L-8.0 11.3M9.5 18.4L2.9 14.3M9.5 18.4L8.8 13.8M-11.4 -10.5L-8.1 -4.1M-3.4 -4.4L-6.6 -8.8M17.7 -10.8L19.9 -5.6M-8.0 11.3L-1.6 6.6M5.1 -15.3L-1.9 -14.0M-20.5 -2.8L-13.2 0.6M-1.4 -20.7L4.2 -20.3M-13.1 -5.0L-11.4 -10.5M-13.1 -5.0L-13.2 0.6M19.9 -5.6L15.8 -0.2M-6.9 -13.8L-11.4 -10.5M17.7 10.8L12.4 8.6M-8.0 11.3L-13.1 8.9M7.9 4.7L3.3 6.6M4.2 20.3L-1.4 20.7M17.7 -10.8L14.7 -4.7M7.9 4.7L7.6 9.3M17.7 -10.8L11.8 -10.1M14.7 -4.7L15.8 -0.2M19.9 5.6L17.7 10.8M-11.9 16.9L-8.0 11.3M20.7 0.0L19.9 -5.6M-1.4 -20.7L5.1 -15.3M3.3 6.6L7.6 9.3M-19.0 8.2L-15.3 4.7M-1.4 -20.7L-1.9 -14.0M-13.1 8.9L-7.6 2.4M12.4 8.6L7.9 4.7M19.9 5.6L15.8 -0.2M17.7 10.8L14.1 15.1M7.2 -10.8L5.1 -15.3M2.9 14.3L-0.6 11.1M-7.6 2.4L-13.2 0.6M-13.2 0.6L-8.1 -4.1M-19.0 -8.2L-13.1 -5.0M14.1 15.1L9.5 18.4M-3.4 -4.4L-8.1 -4.1M7.9 4.7L14.9 4.5M4.3 -3.5L9.8 0.3M4.2 -20.3L5.1 -15.3M12.4 8.6L7.6 9.3M0.3 1.1L3.3 6.6M4.2 20.3L2.9 14.3M-16.1 13.1L-13.1 8.9M-1.4 20.7L-4.3 14.4M-6.9 -19.5L-6.9 -13.8M9.5 18.4L4.2 20.3M4.3 -3.5L5.2 1.1M7.9 4.7L9.8 0.3M4.3 -3.5L2.6 -9.6M-6.9 -13.8L-6.6 -8.8M20.7 0.0L19.9 5.6M14.1 -15.1L7.2 -10.8M-6.6 -8.8L2.6 -9.6M-19.0 8.2L-20.5 2.8M-11.9 16.9L-4.3 14.4M-1.6 6.6L0.3 1.1M7.2 -10.8L4.3 -3.5M-7.6 2.4L-15.3 4.7M-4.3 14.4L-0.6 11.1M-1.4 20.7L-6.9 19.5M11.8 -10.1L7.2 -10.8M-11.9 -16.9L-11.4 -10.5M7.9 4.7L5.2 1.1M12.4 8.6L8.8 13.8M12.4 8.6L14.9 4.5M19.9 -5.6L14.7 -4.7M14.9 4.5L9.8 0.3M-20.5 2.8L-20.5 -2.8M2.9 14.3L3.3 6.6M2.9 14.3L7.6 9.3M-6.9 19.5L-11.9 16.9" stroke="#ff8000" stroke-width="1" fill="none" shape-rendering="crispEdges"/><circle r="20.7" fill="none" stroke="#1e4a1e" stroke-width="1"/></g><g id="cC"><circle r="20.7" fill="#ffd890"/><path d="M9.0 -11.4L8.6 -6.2M15.9 -13.3L12.7 -12.8M15.9 13.3L12.7 11.3M-7.4 -13.4L-6.0 -16.3M6.0 8.9L2.5 7.1M0.9 -3.7L-2.3 -3.1M-12.5 10.8L-10.8 13.6M8.6 -6.2L7.1 -3.5M-2.6 -16.6L0.6 -16.4M-2.3 -3.1L-1.2 0.6M3.6 20.4L0.0 20.7M-15.2 -5.6L-11.7 -3.8M4.2 11.7L7.2 12.1M-11.4 -12.5L-8.2 -10.5M9.0 -11.4L2.7 -10.5M10.7 1.6L5.9 -0.3M11.0 -2.7L5.9 -0.3M3.6 20.4L0.4 17.5M-3.6 -20.4L-6.0 -16.3M-10.6 -8.7L-11.7 -3.8M-14.0 -9.3L-15.2 -5.6M0.9 -3.7L2.7 2.2M-2.6 -16.6L0.7 -13.1M-3.6 20.4L-2.2 15.1M0.4 17.5L2.9 14.8M-20.7 0.0L-20.4 -3.6M-2.2 -6.2L-1.6 -9.3M-15.9 13.3L-17.9 10.4M0.0 20.7L-3.6 20.4M-9.1 -5.9L-11.7 -3.8M7.1 -19.5L9.7 -14.8M3.9 -3.2L2.7 2.2M4.2 11.7L2.5 7.1M17.9 10.3L15.0 8.1M3.9 -3.2L7.1 -3.5M20.4 -3.6L17.0 1.4M-17.9 10.4L-19.5 7.1M-2.7 -12.3L-1.6 -9.3M-17.6 0.6L-13.8 1.4M-14.6 5.2L-13.8 1.4M-0.0 -20.7L0.6 -16.4M0.8 -7.4L2.7 -10.5M-7.1 19.5L-5.1 16.7M-15.9 13.3L-12.5 10.8M2.7 2.2L5.9 -0.3M4.2 11.7L2.9 14.8M-17.9 -10.4L-14.0 -9.3M-11.4 -0.4L-8.3 -0.2M15.1 -3.1L12.3 -6.9M5.9 -0.3L7.1 -3.5M7.1 -19.5L4.7 -17.6M-5.7 -8.3L-8.2 -10.5M-11.4 -0.4L-11.5 3.4M-19.5 -7.1L-15.2 -5.6M20.4 3.6L17.0 1.4M11.0 -2.7L8.6 -6.2M-19.5 7.1L-20.4 3.6M-10.6 -8.7L-9.1 -5.9M9.9 14.2L9.8 10.4M-0.6 8.4L-2.3 4.3M-11.5 3.4L-12.5 7.7M-5.0 0.1L-1.2 0.6M10.3 -17.9L9.7 -14.8M-10.3 17.9L-13.3 15.9M-20.4 -3.6L-16.1 -2.4M-15.9 -13.3L-13.3 -15.9M9.1 7.4L5.5 4.3M-13.3 -15.9L-11.4 -12.5M2.7 2.2L-1.2 0.6M15.1 -3.1L13.8 2.4M-6.6 5.4L-5.0 0.1M-7.4 -13.4L-2.7 -12.3M5.4 16.3L9.9 14.2M5.5 4.3L5.9 -0.3M-13.3 15.9L-15.9 13.3M-2.2 15.1L-5.1 16.7M12.7 11.3L9.9 14.2M-14.6 5.2L-12.5 7.7M4.9 -14.3L4.7 -17.6M-10.4 -17.9L-6.0 -16.3M2.9 14.8L0.2 12.9M0.9 -3.7L3.9 -3.2M15.1 -3.1L11.0 -2.7M-8.3 -0.2L-6.6 5.4M-17.6 0.6L-16.1 -2.4M12.7 -12.8L9.0 -11.4M13.3 15.9L12.7 11.3M-2.2 15.1L-5.7 13.5M-5.7 13.5L-8.4 11.9M-2.7 -12.3L-5.7 -8.3M0.8 -7.4L-1.6 -9.3M9.1 7.4L10.7 1.6M5.4 16.3L7.2 12.1M9.7 -14.8L9.0 -11.4M15.3 -7.5L12.3 -6.9M13.3 -15.9L12.7 -12.8M-13.3 -15.9L-10.4 -17.9M5.5 4.3L6.0 8.9M-15.2 -5.6L-16.1 -2.4M5.5 4.3L2.5 7.1M10.4 17.9L9.9 14.2M-6.6 5.4L-2.3 4.3M15.0 8.1L9.1 7.4M5.4 16.3L4.2 11.7M-20.4 -3.6L-19.5 -7.1M4.9 -14.3L0.7 -13.1M-2.7 -12.3L0.7 -13.1M-10.4 -17.9L-7.1 -19.5M-2.7 -12.3L-8.2 -10.5M-11.7 -3.8L-8.3 -0.2M-5.7 -8.3L-1.6 -9.3M-20.4 -3.6L-17.6 0.6M-8.3 -0.2L-5.0 0.1M-5.0 0.1L-2.3 -3.1M0.8 -7.4L0.9 -3.7M-5.0 0.1L-2.3 4.3M-5.7 13.5L-3.7 8.8M2.5 7.1L-2.3 4.3M-14.0 -9.3L-10.6 -8.7M-19.5 -7.1L-17.9 -10.4M-20.4 -3.6L-15.2 -5.6M13.8 2.4L12.0 5.1M10.4 17.9L5.4 16.3M-17.9 10.4L-12.5 7.7M2.7 2.2L-2.3 4.3M13.8 2.4L17.0 1.4M4.2 11.7L6.0 8.9M4.2 11.7L-0.6 8.4M9.0 -11.4L4.6 -7.8M10.3 -17.9L13.3 -15.9M-8.3 -0.2L-5.7 -4.2M-14.6 5.2L-17.6 0.6M-0.0 -20.7L-2.6 -16.6M-13.3 15.9L-10.8 13.6M3.6 20.4L5.4 16.3M-7.1 -19.5L-3.6 -20.4M0.0 20.7L0.4 17.5M4.6 -7.8L8.6 -6.2M-9.0 7.5L-12.5 7.7M-13.8 1.4L-11.5 3.4M-5.7 13.5L0.2 12.9M2.5 7.1L2.7 2.2M5.4 16.3L2.9 14.8M-3.6 -20.4L-0.0 -20.7M15.9 -13.3L15.3 -7.5M19.5 7.1L15.0 8.1M-5.7 -8.3L-5.7 -4.2M-17.9 -10.4L-15.9 -13.3M-17.9 10.4L-14.6 5.2M13.3 -15.9L15.9 -13.3M11.0 -2.7L10.7 1.6M-7.4 -13.4L-8.2 -10.5M-20.4 3.6L-20.7 0.0M20.4 3.6L15.3 5.1M-0.0 -20.7L3.6 -20.4M-15.9 -13.3L-14.0 -9.3M19.5 -7.1L15.3 -7.5M-10.6 -8.7L-8.2 -10.5M-20.4 3.6L-14.6 5.2M-2.6 -16.6L-6.0 -16.3M-8.3 -0.2L-11.5 3.4M15.3 5.1L12.0 5.1M-11.5 3.4L-6.6 5.4M-3.6 20.4L0.4 17.5M3.6 -20.4L4.7 -17.6M12.7 -12.8L12.3 -6.9M3.6 -20.4L0.6 -16.4M-10.8 13.6L-8.4 11.9M0.4 17.5L0.2 12.9M-10.3 17.9L-8.3 15.4M-7.4 -13.4L-11.4 -12.5M9.8 10.4L9.1 7.4M2.5 7.1L-0.6 8.4M13.3 15.9L10.4 17.9M-2.2 -6.2L0.8 -7.4M-9.1 -5.9L-8.2 -10.5M12.3 -6.9L8.6 -6.2M9.0 -11.4L4.9 -14.3M-10.6 -8.7L-11.4 -12.5M-15.9 13.3L-10.8 13.6M13.8 2.4L11.0 -2.7M15.0 8.1L12.0 5.1M-8.4 11.9L-9.0 7.5M-1.2 0.6L-2.3 4.3M20.4 3.6L19.5 7.1M5.5 4.3L2.7 2.2M3.6 -20.4L7.1 -19.5M-3.7 8.8L-6.6 5.4M2.7 -10.5L-1.6 -9.3M-20.4 3.6L-17.6 0.6M-2.2 -6.2L-5.7 -4.2M4.6 -7.8L7.1 -3.5M11.0 -2.7L7.1 -3.5M-2.2 -6.2L-2.3 -3.1M7.1 -19.5L10.3 -17.9M9.1 7.4L6.0 8.9M-16.1 -2.4L-11.7 -3.8M4.2 11.7L0.2 12.9M-2.2 15.1L0.2 12.9M13.8 2.4L10.7 1.6M19.5 7.1L17.9 10.3M4.9 -14.3L2.7 -10.5M-5.1 16.7L-8.3 15.4M12.0 5.1L10.7 1.6M12.7 -12.8L15.3 -7.5M-11.7 -3.8L-11.4 -0.4M-7.1 -19.5L-6.0 -16.3M12.7 -12.8L9.7 -14.8M13.3 15.9L9.9 14.2M17.9 10.3L15.9 13.3M-15.2 -5.6L-10.6 -8.7M15.3 -7.5L15.1 -3.1M-3.6 20.4L-5.1 16.7M0.8 -7.4L3.9 -3.2M5.5 4.3L10.7 1.6M-12.5 10.8L-9.0 7.5M0.2 12.9L-0.6 8.4M13.8 2.4L15.3 5.1M9.7 -14.8L4.9 -14.3M-8.3 15.4L-8.4 11.9M-20.7 0.0L-17.6 0.6M0.4 17.5L-2.2 15.1M9.9 14.2L7.2 12.1M12.3 -6.9L9.0 -11.4M12.3 -6.9L11.0 -2.7M3.9 -3.2L5.9 -0.3M19.5 -7.1L15.1 -3.1M-9.0 7.5L-6.6 5.4M-11.5 3.4L-9.0 7.5M-13.8 1.4L-11.4 -0.4M-17.9 10.4L-12.5 10.8M-3.7 8.8L-2.3 4.3M0.6 -16.4L4.9 -14.3M15.9 -13.3L17.9 -10.3M15.9 13.3L15.0 8.1M15.1 -3.1L17.0 1.4M20.7 0.0L20.4 -3.6M12.7 11.3L9.8 10.4M9.7 -14.8L4.7 -17.6M-10.4 -17.9L-7.4 -13.4M-8.3 15.4L-5.7 13.5M0.9 -3.7L-1.2 0.6M15.9 13.3L13.3 15.9M-10.3 17.9L-10.8 13.6M0.8 -7.4L4.6 -7.8M-3.6 -20.4L-2.6 -16.6M-8.3 15.4L-10.8 13.6M15.0 8.1L9.8 10.4M9.8 10.4L7.2 12.1M-16.1 -2.4L-11.4 -0.4M-8.4 11.9L-3.7 8.8M-2.6 -16.6L-2.7 -12.3M-15.9 -13.3L-11.4 -12.5M-14.6 5.2L-11.5 3.4M-2.7 -12.3L-6.0 -16.3M-3.6 20.4L-7.1 19.5M7.1 19.5L5.4 16.3M20.7 0.0L20.4 3.6M-3.7 8.8L-9.0 7.5M0.6 -16.4L4.7 -17.6M2.7 -10.5L4.6 -7.8M13.3 -15.9L9.7 -14.8M20.7 0.0L17.0 1.4M-17.9 -10.4L-15.2 -5.6M4.6 -7.8L3.9 -3.2M-9.1 -5.9L-5.7 -4.2M-5.7 -4.2L-5.0 0.1M-5.7 -8.3L-9.1 -5.9M10.4 17.9L7.1 19.5M2.7 -10.5L0.7 -13.1M-10.4 -17.9L-11.4 -12.5M17.9 -10.3L19.5 -7.1M-2.2 -6.2L0.9 -3.7M17.9 -10.3L15.3 -7.5M6.0 8.9L7.2 12.1M9.8 10.4L6.0 8.9M-12.5 10.8L-8.4 11.9M-19.5 7.1L-14.6 5.2M15.0 8.1L12.7 11.3M20.4 -3.6L15.1 -3.1M0.2 12.9L-3.7 8.8M15.0 8.1L15.3 5.1M0.4 17.5L5.4 16.3M-12.5 10.8L-12.5 7.7M19.5 -7.1L20.4 -3.6M-7.1 19.5L-8.3 15.4M19.5 7.1L15.3 5.1M-7.1 19.5L-10.3 17.9M0.6 -16.4L0.7 -13.1M-13.8 1.4L-16.1 -2.4M-3.7 8.8L-0.6 8.4M12.0 5.1L9.1 7.4M-9.1 -5.9L-8.3 -0.2M-5.1 16.7L-5.7 13.5M15.3 5.1L17.0 1.4M0.7 -13.1L-1.6 -9.3M-14.0 -9.3L-11.4 -12.5M-5.7 -8.3L-2.2 -6.2M-5.7 -4.2L-2.3 -3.1M7.1 19.5L3.6 20.4" stroke="#ff8000" stroke-width="1" fill="none" shape-rendering="crispEdges"/><circle r="20.7" fill="none" stroke="#1e4a1e" stroke-width="1"/></g><g id="cE"><circle r="20.7" fill="#ff8020"/><path d="M-6 11h1v1h-1zM15 10h1v1h-1zM13 -9h1v1h-1zM-16 3h1v1h-1zM3 -6h1v1h-1zM-15 -1h1v1h-1zM14 -3h1v1h-1zM16 -9h1v1h-1zM-12 -7h1v1h-1zM1 -9h1v1h-1zM6 -17h1v1h-1zM8 15h1v1h-1zM1 17h1v1h-1zM-9 -4h1v1h-1zM9 -11h1v1h-1zM-16 -3h1v1h-1zM14 -12h1v1h-1zM-1 -18h1v1h-1zM-14 1h1v1h-1zM-5 9h1v1h-1zM-16 -1h1v1h-1zM-13 -11h1v1h-1zM6 -11h1v1h-1zM12 -2h1v1h-1zM-4 -6h1v1h-1zM8 -7h1v1h-1zM4 -14h1v1h-1zM-19 -1h1v1h-1zM-17 2h1v1h-1zM13 8h1v1h-1zM10 13h1v1h-1zM-14 10h1v1h-1zM-1 19h1v1h-1zM-9 -1h1v1h-1zM10 7h1v1h-1zM4 12h1v1h-1zM6 -4h1v1h-1zM14 -4h1v1h-1zM12 3h1v1h-1zM16 3h1v1h-1zM16 -3h1v1h-1zM0 19h1v1h-1zM-1 18h1v1h-1zM-19 -1h1v1h-1zM-3 0h1v1h-1zM-10 -9h1v1h-1zM11 13h1v1h-1zM-9 -2h1v1h-1zM-14 0h1v1h-1zM3 8h1v1h-1zM-2 0h1v1h-1zM-10 14h1v1h-1zM-18 -3h1v1h-1zM-3 15h1v1h-1zM9 2h1v1h-1zM-2 -1h1v1h-1zM-7 4h1v1h-1zM-1 1h1v1h-1zM-8 -15h1v1h-1zM-14 13h1v1h-1zM2 12h1v1h-1zM-1 3h1v1h-1zM-18 6h1v1h-1zM-18 0h1v1h-1zM-1 0h1v1h-1zM6 12h1v1h-1zM-4 3h1v1h-1zM-7 7h1v1h-1zM-13 14h1v1h-1zM-13 -5h1v1h-1zM-6 13h1v1h-1zM7 -13h1v1h-1zM1 1h1v1h-1zM-1 -3h1v1h-1zM8 -9h1v1h-1zM-9 5h1v1h-1zM-12 12h1v1h-1zM-4 18h1v1h-1zM-3 12h1v1h-1zM-16 -4h1v1h-1zM-8 15h1v1h-1zM16 5h1v1h-1zM15 -3h1v1h-1zM-11 9h1v1h-1zM-11 -9h1v1h-1zM3 8h1v1h-1zM-16 -1h1v1h-1zM0 8h1v1h-1zM-13 -6h1v1h-1zM-15 -10h1v1h-1zM3 5h1v1h-1zM-18 5h1v1h-1zM-11 14h1v1h-1zM-11 9h1v1h-1zM-7 -15h1v1h-1zM0 -16h1v1h-1zM-11 -6h1v1h-1zM0 -10h1v1h-1zM3 14h1v1h-1zM-18 -2h1v1h-1zM-6 11h1v1h-1zM-12 -13h1v1h-1zM12 14h1v1h-1zM4 0h1v1h-1zM-5 -1h1v1h-1zM-1 -18h1v1h-1zM4 -15h1v1h-1zM10 6h1v1h-1zM4 14h1v1h-1zM-7 -5h1v1h-1zM-11 1h1v1h-1zM-13 11h1v1h-1zM-4 -18h1v1h-1zM13 5h1v1h-1zM12 -9h1v1h-1zM2 19h1v1h-1zM4 6h1v1h-1zM-1 -8h1v1h-1zM3 9h1v1h-1zM9 16h1v1h-1zM13 8h1v1h-1zM11 7h1v1h-1zM8 6h1v1h-1zM5 1h1v1h-1zM-5 12h1v1h-1zM-5 -12h1v1h-1zM-16 1h1v1h-1zM1 -15h1v1h-1zM5 -11h1v1h-1zM11 7h1v1h-1zM15 11h1v1h-1zM-13 -10h1v1h-1zM3 2h1v1h-1zM8 17h1v1h-1zM0 -12h1v1h-1zM-4 1h1v1h-1zM9 1h1v1h-1zM3 -12h1v1h-1zM-17 -5h1v1h-1zM-6 -9h1v1h-1zM5 -13h1v1h-1zM-1 -1h1v1h-1zM14 -8h1v1h-1zM-6 8h1v1h-1zM6 -9h1v1h-1zM-14 12h1v1h-1zM3 -14h1v1h-1zM-5 3h1v1h-1zM-13 -7h1v1h-1zM12 13h1v1h-1zM-8 4h1v1h-1zM3 6h1v1h-1zM3 3h1v1h-1zM-9 12h1v1h-1zM19 0h1v1h-1zM11 4h1v1h-1zM4 13h1v1h-1zM-3 18h1v1h-1zM-8 5h1v1h-1zM1 9h1v1h-1zM18 -1h1v1h-1zM-1 -19h1v1h-1zM10 8h1v1h-1zM12 -11h1v1h-1zM6 -13h1v1h-1zM-6 -3h1v1h-1zM18 -6h1v1h-1zM-7 -4h1v1h-1zM8 -11h1v1h-1zM17 2h1v1h-1zM-10 -9h1v1h-1zM-17 4h1v1h-1zM0 -11h1v1h-1zM4 -18h1v1h-1zM-2 -11h1v1h-1zM-5 18h1v1h-1zM4 -16h1v1h-1zM-2 -18h1v1h-1zM-1 -12h1v1h-1zM-7 13h1v1h-1zM10 -4h1v1h-1zM-16 -3h1v1h-1zM4 -4h1v1h-1zM-10 -15h1v1h-1zM-5 -4h1v1h-1zM14 -1h1v1h-1zM14 6h1v1h-1zM5 16h1v1h-1zM9 -15h1v1h-1zM9 0h1v1h-1zM-16 6h1v1h-1zM1 0h1v1h-1zM-2 5h1v1h-1zM0 7h1v1h-1zM-18 5h1v1h-1zM-3 -7h1v1h-1zM-17 7h1v1h-1zM-1 -10h1v1h-1zM-6 -6h1v1h-1zM-14 6h1v1h-1zM12 -7h1v1h-1zM-2 3h1v1h-1zM7 -8h1v1h-1zM2 -5h1v1h-1zM-3 11h1v1h-1zM-3 4h1v1h-1zM-3 -15h1v1h-1zM-10 7h1v1h-1zM10 -9h1v1h-1zM10 -12h1v1h-1zM-4 -4h1v1h-1zM16 -9h1v1h-1zM2 4h1v1h-1zM-6 -10h1v1h-1zM-3 18h1v1h-1zM2 0h1v1h-1zM8 -13h1v1h-1zM13 -11h1v1h-1zM9 9h1v1h-1zM0 -8h1v1h-1zM-4 11h1v1h-1zM-6 11h1v1h-1zM-5 18h1v1h-1zM-2 9h1v1h-1zM6 0h1v1h-1zM-8 -9h1v1h-1zM10 -3h1v1h-1zM15 2h1v1h-1zM-4 -3h1v1h-1zM2 -11h1v1h-1zM-9 -9h1v1h-1zM6 8h1v1h-1zM-15 7h1v1h-1zM-15 -1h1v1h-1zM-8 -16h1v1h-1zM-16 0h1v1h-1zM-11 11h1v1h-1zM-17 1h1v1h-1zM1 18h1v1h-1zM12 -8h1v1h-1zM-11 4h1v1h-1zM10 12h1v1h-1zM-11 -6h1v1h-1zM6 -8h1v1h-1zM-2 6h1v1h-1zM11 0h1v1h-1zM2 -10h1v1h-1zM-12 -12h1v1h-1zM7 -6h1v1h-1zM-9 -9h1v1h-1zM1 2h1v1h-1zM0 10h1v1h-1zM-17 7h1v1h-1zM2 16h1v1h-1zM-8 1h1v1h-1zM-2 -17h1v1h-1zM16 6h1v1h-1zM-15 -3h1v1h-1zM0 12h1v1h-1zM8 8h1v1h-1zM7 15h1v1h-1zM11 -3h1v1h-1zM-11 4h1v1h-1zM-3 0h1v1h-1zM13 -8h1v1h-1zM-3 -3h1v1h-1zM-16 -3h1v1h-1zM-1 16h1v1h-1zM-10 16h1v1h-1zM9 8h1v1h-1zM18 -1h1v1h-1zM18 6h1v1h-1zM-16 -4h1v1h-1zM6 3h1v1h-1zM10 -5h1v1h-1zM13 -14h1v1h-1zM-1 17h1v1h-1zM4 -7h1v1h-1zM9 11h1v1h-1zM8 -9h1v1h-1zM-1 19h1v1h-1zM-18 4h1v1h-1zM-4 -3h1v1h-1zM-3 -18h1v1h-1zM-13 10h1v1h-1zM7 -5h1v1h-1zM16 -1h1v1h-1zM-6 1h1v1h-1z" fill="#ffd890" shape-rendering="crispEdges"/><circle r="20.7" fill="none" stroke="#1e4a1e" stroke-width="1"/></g><g id="cD"><circle r="20.7" fill="#ff7f1e"/><path d="M12 9h1v1h-1zM-15 1h1v1h-1zM4 -10h1v1h-1zM-16 4h1v1h-1zM-6 6h1v1h-1zM-3 -7h1v1h-1zM1 -18h1v1h-1zM-17 4h1v1h-1zM-5 7h1v1h-1zM17 -8h1v1h-1zM14 -8h1v1h-1zM5 -8h1v1h-1zM-11 -9h1v1h-1zM-11 -3h1v1h-1zM-13 5h1v1h-1zM-5 -10h1v1h-1zM-18 3h1v1h-1zM2 -13h1v1h-1zM5 -8h1v1h-1zM-15 -1h1v1h-1zM-14 13h1v1h-1zM-2 -10h1v1h-1zM-4 -10h1v1h-1zM4 -2h1v1h-1zM8 -11h1v1h-1zM4 17h1v1h-1zM-10 -3h1v1h-1zM2 -14h1v1h-1zM-10 -6h1v1h-1zM-8 -9h1v1h-1zM3 -5h1v1h-1zM-6 3h1v1h-1zM4 10h1v1h-1zM-14 2h1v1h-1zM-8 3h1v1h-1zM-4 10h1v1h-1zM18 -6h1v1h-1zM-3 -12h1v1h-1zM-9 2h1v1h-1zM8 -5h1v1h-1zM-15 -10h1v1h-1zM-7 3h1v1h-1zM-15 1h1v1h-1zM4 -7h1v1h-1zM1 -10h1v1h-1zM12 5h1v1h-1zM5 4h1v1h-1zM12 -12h1v1h-1zM2 2h1v1h-1zM-8 0h1v1h-1zM16 -9h1v1h-1zM-1 -19h1v1h-1zM13 7h1v1h-1zM-6 -9h1v1h-1zM7 -7h1v1h-1zM3 5h1v1h-1zM-5 10h1v1h-1zM14 1h1v1h-1zM17 -8h1v1h-1zM1 -2h1v1h-1zM-16 5h1v1h-1zM4 -18h1v1h-1zM5 -12h1v1h-1zM10 -9h1v1h-1zM-14 12h1v1h-1zM-8 -17h1v1h-1zM9 -1h1v1h-1zM-14 -7h1v1h-1zM-8 9h1v1h-1zM-3 3h1v1h-1zM2 0h1v1h-1zM-14 6h1v1h-1zM6 -18h1v1h-1zM14 7h1v1h-1zM2 -6h1v1h-1zM6 12h1v1h-1zM-9 -16h1v1h-1zM-4 -8h1v1h-1zM10 -10h1v1h-1zM-5 -2h1v1h-1zM13 -13h1v1h-1zM-9 -16h1v1h-1zM-1 -11h1v1h-1zM10 -2h1v1h-1zM0 12h1v1h-1zM10 -10h1v1h-1zM14 11h1v1h-1zM16 -4h1v1h-1zM-9 -10h1v1h-1zM-15 0h1v1h-1zM-2 -14h1v1h-1zM-4 -1h1v1h-1zM18 5h1v1h-1zM8 -2h1v1h-1zM-7 -10h1v1h-1zM-2 -17h1v1h-1zM-10 -10h1v1h-1zM-10 -4h1v1h-1zM-8 6h1v1h-1zM-11 -9h1v1h-1zM4 -12h1v1h-1zM16 9h1v1h-1zM8 -4h1v1h-1zM1 -10h1v1h-1zM-10 5h1v1h-1zM-12 6h1v1h-1zM3 -14h1v1h-1zM13 2h1v1h-1zM1 -19h1v1h-1zM15 -7h1v1h-1zM9 -9h1v1h-1zM15 -3h1v1h-1zM3 -15h1v1h-1zM1 -19h1v1h-1zM-6 -8h1v1h-1zM3 -9h1v1h-1zM-4 12h1v1h-1zM6 -7h1v1h-1zM5 12h1v1h-1zM1 17h1v1h-1zM1 -9h1v1h-1zM-17 -4h1v1h-1zM5 -17h1v1h-1zM5 -13h1v1h-1zM10 -10h1v1h-1zM2 -2h1v1h-1zM6 1h1v1h-1zM4 2h1v1h-1zM-8 3h1v1h-1zM-5 16h1v1h-1zM16 -8h1v1h-1zM-8 -14h1v1h-1zM2 -5h1v1h-1zM18 2h1v1h-1zM12 -6h1v1h-1zM5 -6h1v1h-1zM-1 -14h1v1h-1zM-3 -5h1v1h-1zM3 -3h1v1h-1zM-14 -10h1v1h-1zM-4 14h1v1h-1zM-5 -8h1v1h-1zM-4 0h1v1h-1zM-13 4h1v1h-1zM-13 -14h1v1h-1zM-16 -5h1v1h-1zM-8 -17h1v1h-1zM-16 -8h1v1h-1zM-1 1h1v1h-1zM6 3h1v1h-1zM-15 2h1v1h-1zM1 3h1v1h-1zM-16 -4h1v1h-1zM7 -16h1v1h-1zM-5 -7h1v1h-1zM-2 0h1v1h-1zM-11 -15h1v1h-1zM-5 -11h1v1h-1zM-16 3h1v1h-1zM4 -8h1v1h-1zM-13 11h1v1h-1zM2 7h1v1h-1zM15 2h1v1h-1zM-6 18h1v1h-1zM7 -5h1v1h-1zM-6 -12h1v1h-1zM18 1h1v1h-1zM11 -10h1v1h-1zM1 -18h1v1h-1zM-14 8h1v1h-1zM-7 2h1v1h-1zM9 -9h1v1h-1zM-7 -6h1v1h-1zM12 -8h1v1h-1zM-13 0h1v1h-1zM-8 -2h1v1h-1zM4 9h1v1h-1zM-12 14h1v1h-1zM-1 -18h1v1h-1zM7 -6h1v1h-1zM-9 5h1v1h-1zM-4 -17h1v1h-1zM-9 -13h1v1h-1zM-13 -12h1v1h-1zM2 0h1v1h-1zM8 -13h1v1h-1zM1 8h1v1h-1zM9 1h1v1h-1zM-10 10h1v1h-1zM4 2h1v1h-1zM-8 12h1v1h-1zM4 -15h1v1h-1zM-10 5h1v1h-1zM12 2h1v1h-1zM-8 -11h1v1h-1zM-3 -18h1v1h-1zM17 0h1v1h-1zM-11 -6h1v1h-1zM-18 1h1v1h-1zM-6 -7h1v1h-1zM-14 -1h1v1h-1zM0 2h1v1h-1zM1 17h1v1h-1zM-12 -7h1v1h-1zM5 12h1v1h-1zM13 -14h1v1h-1zM-6 -16h1v1h-1zM-10 -1h1v1h-1zM-16 -9h1v1h-1zM15 -2h1v1h-1zM-8 -10h1v1h-1zM9 -10h1v1h-1zM-8 -10h1v1h-1zM1 -11h1v1h-1zM10 -4h1v1h-1zM-4 -12h1v1h-1zM-3 3h1v1h-1zM-7 9h1v1h-1zM-10 -6h1v1h-1zM6 -16h1v1h-1zM-6 -9h1v1h-1zM9 -7h1v1h-1zM0 -3h1v1h-1zM-10 6h1v1h-1zM9 -3h1v1h-1zM-11 -10h1v1h-1zM-12 -8h1v1h-1zM13 -2h1v1h-1zM11 9h1v1h-1zM8 -14h1v1h-1zM-1 -9h1v1h-1zM-3 -16h1v1h-1zM4 -12h1v1h-1zM3 -2h1v1h-1zM-6 -18h1v1h-1zM14 -12h1v1h-1zM18 -6h1v1h-1zM15 2h1v1h-1zM12 -9h1v1h-1zM2 2h1v1h-1zM6 9h1v1h-1zM-18 -4h1v1h-1zM16 6h1v1h-1zM12 -9h1v1h-1zM-12 1h1v1h-1zM8 6h1v1h-1zM-7 -7h1v1h-1zM12 2h1v1h-1zM-3 12h1v1h-1zM-12 1h1v1h-1zM0 2h1v1h-1zM0 -1h1v1h-1zM3 15h1v1h-1zM1 -1h1v1h-1zM2 -17h1v1h-1zM-9 6h1v1h-1zM-13 -5h1v1h-1zM-5 -15h1v1h-1zM-5 2h1v1h-1zM-13 -2h1v1h-1zM-5 3h1v1h-1zM12 -4h1v1h-1zM4 -18h1v1h-1zM-8 1h1v1h-1zM-3 14h1v1h-1zM13 -13h1v1h-1zM-17 5h1v1h-1zM-14 -9h1v1h-1zM7 6h1v1h-1zM16 -9h1v1h-1zM-1 -4h1v1h-1zM-19 -1h1v1h-1zM18 4h1v1h-1zM-8 -9h1v1h-1zM15 7h1v1h-1zM2 -11h1v1h-1zM-7 -9h1v1h-1zM-3 -3h1v1h-1zM9 12h1v1h-1zM-5 -18h1v1h-1zM-3 5h1v1h-1zM7 5h1v1h-1zM-10 8h1v1h-1zM-16 6h1v1h-1zM9 8h1v1h-1zM7 -16h1v1h-1zM0 -12h1v1h-1zM-7 -11h1v1h-1zM-9 -14h1v1h-1zM-14 -13h1v1h-1zM11 11h1v1h-1zM-1 -16h1v1h-1zM-17 5h1v1h-1zM6 9h1v1h-1zM16 3h1v1h-1zM-2 1h1v1h-1zM6 -18h1v1h-1zM-16 -2h1v1h-1zM0 6h1v1h-1zM-1 -16h1v1h-1zM-1 -9h1v1h-1zM0 -12h1v1h-1zM-7 -15h1v1h-1zM-15 -10h1v1h-1zM-13 0h1v1h-1zM12 2h1v1h-1zM-12 3h1v1h-1zM8 4h1v1h-1zM-11 8h1v1h-1zM17 -3h1v1h-1zM-13 11h1v1h-1zM-5 -9h1v1h-1zM-11 -10h1v1h-1zM12 -9h1v1h-1zM12 10h1v1h-1zM-16 -3h1v1h-1zM-14 -13h1v1h-1zM8 -11h1v1h-1zM9 0h1v1h-1zM-14 -13h1v1h-1zM-15 -8h1v1h-1z" fill="#ffd890" shape-rendering="crispEdges"/><circle r="20.7" fill="none" stroke="#1e4a1e" stroke-width="1"/></g><pattern id="spk" patternUnits="userSpaceOnUse" width="60" height="40"><rect width="60" height="40" fill="#80c800"/><path d="M58 28h1v1h-1zM4 30h1v1h-1zM59 9h1v1h-1zM7 31h1v1h-1zM2 33h1v1h-1zM2 9h1v1h-1zM43 2h1v1h-1zM14 12h1v1h-1zM21 4h1v1h-1zM43 14h1v1h-1zM48 30h1v1h-1zM39 24h1v1h-1zM10 1h1v1h-1zM19 7h1v1h-1zM59 2h1v1h-1zM19 26h1v1h-1zM24 12h1v1h-1zM2 16h1v1h-1zM20 2h1v1h-1zM13 10h1v1h-1zM17 22h1v1h-1zM56 15h1v1h-1zM53 8h1v1h-1zM33 3h1v1h-1zM49 24h1v1h-1zM32 30h1v1h-1zM54 0h1v1h-1zM34 1h1v1h-1zM6 17h1v1h-1zM17 34h1v1h-1zM7 10h1v1h-1zM51 18h1v1h-1zM48 13h1v1h-1zM2 9h1v1h-1zM53 3h1v1h-1zM54 24h1v1h-1zM29 11h1v1h-1zM30 11h1v1h-1zM33 6h1v1h-1zM27 12h1v1h-1zM56 37h1v1h-1zM6 9h1v1h-1zM20 12h1v1h-1zM20 28h1v1h-1zM13 12h1v1h-1zM4 16h1v1h-1zM2 16h1v1h-1zM13 4h1v1h-1zM4 27h1v1h-1zM3 0h1v1h-1zM27 8h1v1h-1zM45 35h1v1h-1zM55 33h1v1h-1zM16 11h1v1h-1zM14 21h1v1h-1zM23 9h1v1h-1zM20 3h1v1h-1zM20 15h1v1h-1zM34 33h1v1h-1zM5 24h1v1h-1zM54 37h1v1h-1zM50 22h1v1h-1zM21 11h1v1h-1zM0 36h1v1h-1zM30 15h1v1h-1zM53 17h1v1h-1zM24 32h1v1h-1zM38 25h1v1h-1zM35 32h1v1h-1zM41 21h1v1h-1zM9 25h1v1h-1zM36 36h1v1h-1zM30 12h1v1h-1zM21 13h1v1h-1zM16 10h1v1h-1zM39 15h1v1h-1zM46 21h1v1h-1zM21 35h1v1h-1zM51 16h1v1h-1zM18 24h1v1h-1zM23 18h1v1h-1zM28 32h1v1h-1zM47 31h1v1h-1zM45 3h1v1h-1zM19 35h1v1h-1zM13 27h1v1h-1zM7 14h1v1h-1zM17 38h1v1h-1zM12 13h1v1h-1zM24 36h1v1h-1z" fill="#fff"/></pattern><pattern id="spk2" patternUnits="userSpaceOnUse" width="60" height="40"><rect width="60" height="40" fill="#80c800"/><path d="M10 31h1v1h-1zM40 35h1v1h-1zM56 14h1v1h-1zM41 37h1v1h-1zM24 17h1v1h-1zM45 21h1v1h-1zM59 22h1v1h-1zM51 32h1v1h-1zM33 19h1v1h-1zM2 37h1v1h-1zM31 18h1v1h-1zM35 4h1v1h-1zM28 32h1v1h-1zM12 8h1v1h-1zM6 32h1v1h-1zM50 33h1v1h-1zM57 4h1v1h-1zM17 1h1v1h-1zM54 18h1v1h-1zM50 5h1v1h-1zM2 30h1v1h-1zM45 29h1v1h-1zM15 4h1v1h-1zM38 32h1v1h-1zM56 0h1v1h-1zM9 17h1v1h-1zM49 18h1v1h-1zM34 30h1v1h-1zM30 10h1v1h-1zM30 17h1v1h-1zM16 3h1v1h-1zM59 10h1v1h-1zM22 24h1v1h-1zM34 12h1v1h-1zM6 29h1v1h-1zM52 0h1v1h-1zM5 26h1v1h-1zM27 15h1v1h-1zM34 33h1v1h-1zM41 32h1v1h-1zM15 24h1v1h-1zM25 32h1v1h-1zM32 36h1v1h-1zM25 26h1v1h-1zM47 1h1v1h-1zM2 36h1v1h-1zM21 29h1v1h-1zM11 7h1v1h-1zM56 17h1v1h-1zM53 18h1v1h-1zM57 22h1v1h-1zM4 13h1v1h-1zM50 21h1v1h-1zM2 34h1v1h-1zM54 32h1v1h-1zM8 37h1v1h-1zM25 15h1v1h-1zM30 1h1v1h-1zM50 29h1v1h-1zM42 23h1v1h-1zM4 29h1v1h-1zM7 5h1v1h-1zM32 5h1v1h-1zM38 13h1v1h-1zM54 38h1v1h-1zM48 7h1v1h-1zM11 24h1v1h-1zM36 22h1v1h-1zM18 15h1v1h-1zM43 8h1v1h-1zM37 15h1v1h-1zM59 36h1v1h-1zM2 28h1v1h-1zM27 20h1v1h-1zM29 0h1v1h-1zM19 36h1v1h-1zM30 28h1v1h-1zM12 12h1v1h-1zM1 20h1v1h-1zM38 15h1v1h-1zM1 3h1v1h-1zM10 16h1v1h-1zM34 18h1v1h-1zM2 28h1v1h-1zM27 28h1v1h-1zM12 38h1v1h-1zM13 16h1v1h-1zM9 13h1v1h-1zM49 16h1v1h-1zM3 34h1v1h-1zM45 28h1v1h-1zM27 12h1v1h-1zM53 6h1v1h-1zM25 37h1v1h-1zM14 8h1v1h-1zM48 37h1v1h-1zM22 5h1v1h-1zM16 21h1v1h-1zM29 36h1v1h-1zM47 3h1v1h-1zM58 18h1v1h-1zM17 33h1v1h-1zM26 10h1v1h-1zM33 13h1v1h-1zM29 5h1v1h-1zM58 14h1v1h-1zM5 34h1v1h-1zM0 7h1v1h-1zM20 38h1v1h-1zM10 15h1v1h-1zM1 27h1v1h-1zM55 33h1v1h-1zM26 0h1v1h-1zM19 22h1v1h-1zM5 39h1v1h-1zM16 31h1v1h-1zM25 0h1v1h-1zM22 26h1v1h-1zM13 17h1v1h-1zM36 11h1v1h-1zM42 5h1v1h-1zM47 7h1v1h-1zM34 15h1v1h-1zM28 3h1v1h-1zM53 21h1v1h-1zM24 13h1v1h-1zM7 6h1v1h-1zM57 8h1v1h-1zM26 36h1v1h-1zM45 27h1v1h-1zM29 20h1v1h-1zM36 23h1v1h-1zM24 15h1v1h-1zM16 11h1v1h-1zM17 22h1v1h-1zM14 30h1v1h-1zM16 4h1v1h-1zM50 23h1v1h-1zM17 26h1v1h-1zM51 17h1v1h-1zM26 20h1v1h-1zM17 9h1v1h-1zM42 27h1v1h-1zM44 25h1v1h-1zM40 3h1v1h-1zM6 2h1v1h-1zM51 19h1v1h-1zM7 14h1v1h-1zM7 25h1v1h-1zM44 35h1v1h-1zM36 0h1v1h-1zM16 7h1v1h-1zM48 30h1v1h-1zM16 19h1v1h-1zM6 25h1v1h-1zM27 36h1v1h-1zM4 30h1v1h-1zM24 37h1v1h-1zM31 15h1v1h-1zM9 29h1v1h-1zM9 36h1v1h-1zM43 11h1v1h-1zM18 3h1v1h-1zM34 38h1v1h-1zM5 4h1v1h-1zM38 28h1v1h-1zM46 4h1v1h-1zM44 23h1v1h-1zM51 27h1v1h-1zM43 19h1v1h-1zM37 33h1v1h-1zM1 22h1v1h-1zM39 5h1v1h-1zM43 3h1v1h-1zM33 36h1v1h-1zM23 0h1v1h-1zM19 12h1v1h-1zM17 2h1v1h-1zM44 33h1v1h-1zM20 6h1v1h-1zM49 36h1v1h-1zM38 34h1v1h-1zM2 3h1v1h-1zM7 29h1v1h-1zM30 17h1v1h-1zM13 22h1v1h-1zM45 21h1v1h-1zM47 38h1v1h-1zM8 5h1v1h-1zM1 23h1v1h-1zM36 16h1v1h-1zM44 24h1v1h-1zM15 27h1v1h-1zM43 34h1v1h-1zM31 5h1v1h-1zM26 2h1v1h-1zM20 12h1v1h-1zM17 11h1v1h-1zM55 38h1v1h-1zM50 35h1v1h-1zM31 26h1v1h-1zM31 30h1v1h-1zM48 17h1v1h-1zM53 29h1v1h-1zM36 21h1v1h-1zM21 10h1v1h-1zM53 12h1v1h-1zM15 13h1v1h-1zM5 26h1v1h-1zM21 13h1v1h-1zM46 37h1v1h-1zM53 39h1v1h-1zM29 12h1v1h-1zM27 14h1v1h-1zM4 19h1v1h-1zM10 30h1v1h-1zM47 35h1v1h-1zM45 26h1v1h-1zM56 2h1v1h-1zM45 11h1v1h-1zM46 7h1v1h-1zM47 4h1v1h-1zM37 15h1v1h-1zM13 39h1v1h-1zM21 2h1v1h-1zM4 1h1v1h-1zM38 39h1v1h-1zM19 1h1v1h-1zM34 0h1v1h-1zM52 1h1v1h-1zM0 37h1v1h-1zM50 18h1v1h-1zM40 8h1v1h-1zM21 32h1v1h-1zM59 38h1v1h-1zM34 8h1v1h-1zM8 9h1v1h-1zM29 12h1v1h-1zM57 38h1v1h-1zM12 8h1v1h-1zM12 31h1v1h-1zM3 21h1v1h-1zM26 27h1v1h-1zM55 18h1v1h-1zM30 9h1v1h-1zM35 8h1v1h-1zM2 30h1v1h-1zM23 19h1v1h-1zM9 31h1v1h-1zM17 20h1v1h-1zM45 11h1v1h-1zM3 17h1v1h-1zM34 17h1v1h-1zM12 25h1v1h-1zM16 14h1v1h-1zM10 31h1v1h-1zM40 3h1v1h-1zM13 6h1v1h-1zM52 0h1v1h-1zM56 9h1v1h-1zM33 26h1v1h-1zM59 28h1v1h-1zM52 16h1v1h-1zM26 23h1v1h-1zM26 0h1v1h-1zM21 22h1v1h-1zM32 23h1v1h-1zM8 33h1v1h-1zM19 13h1v1h-1zM56 8h1v1h-1zM45 36h1v1h-1zM31 3h1v1h-1zM24 31h1v1h-1zM47 38h1v1h-1zM51 13h1v1h-1zM23 30h1v1h-1zM44 33h1v1h-1zM30 30h1v1h-1zM56 39h1v1h-1zM12 8h1v1h-1zM25 36h1v1h-1zM11 37h1v1h-1zM22 14h1v1h-1zM2 22h1v1h-1zM29 7h1v1h-1zM35 15h1v1h-1zM5 21h1v1h-1zM24 30h1v1h-1zM35 23h1v1h-1zM47 24h1v1h-1zM35 2h1v1h-1zM23 29h1v1h-1zM51 19h1v1h-1zM0 20h1v1h-1zM20 6h1v1h-1zM35 28h1v1h-1zM30 6h1v1h-1zM47 37h1v1h-1zM42 39h1v1h-1zM17 22h1v1h-1zM8 36h1v1h-1zM50 23h1v1h-1zM31 1h1v1h-1zM16 4h1v1h-1zM33 2h1v1h-1zM46 4h1v1h-1zM13 15h1v1h-1zM2 18h1v1h-1zM2 11h1v1h-1zM37 2h1v1h-1zM42 17h1v1h-1zM22 28h1v1h-1zM13 1h1v1h-1zM19 27h1v1h-1zM55 28h1v1h-1zM33 6h1v1h-1zM47 32h1v1h-1zM17 33h1v1h-1zM10 20h1v1h-1zM42 0h1v1h-1zM57 1h1v1h-1zM13 26h1v1h-1zM37 8h1v1h-1zM9 29h1v1h-1zM14 10h1v1h-1zM11 5h1v1h-1zM10 0h1v1h-1zM36 17h1v1h-1zM17 33h1v1h-1zM59 27h1v1h-1zM19 3h1v1h-1zM41 37h1v1h-1zM32 38h1v1h-1zM4 36h1v1h-1zM22 14h1v1h-1zM57 1h1v1h-1zM53 18h1v1h-1zM12 24h1v1h-1zM37 34h1v1h-1zM47 17h1v1h-1zM28 4h1v1h-1zM33 27h1v1h-1zM48 16h1v1h-1zM8 3h1v1h-1zM26 20h1v1h-1zM25 31h1v1h-1zM21 24h1v1h-1zM12 27h1v1h-1zM52 13h1v1h-1zM9 9h1v1h-1zM59 26h1v1h-1zM45 16h1v1h-1zM25 12h1v1h-1zM1 28h1v1h-1zM41 1h1v1h-1zM20 16h1v1h-1zM31 14h1v1h-1zM34 30h1v1h-1zM4 22h1v1h-1zM4 19h1v1h-1zM25 12h1v1h-1zM27 14h1v1h-1zM13 12h1v1h-1zM34 31h1v1h-1zM3 13h1v1h-1zM21 20h1v1h-1zM41 10h1v1h-1zM17 38h1v1h-1zM53 36h1v1h-1zM15 23h1v1h-1zM51 38h1v1h-1zM8 37h1v1h-1zM34 38h1v1h-1zM22 10h1v1h-1zM37 26h1v1h-1zM16 11h1v1h-1zM26 31h1v1h-1zM56 29h1v1h-1zM22 1h1v1h-1zM17 2h1v1h-1zM25 38h1v1h-1zM19 10h1v1h-1zM38 13h1v1h-1zM48 37h1v1h-1zM37 15h1v1h-1zM46 8h1v1h-1zM4 29h1v1h-1zM8 13h1v1h-1zM33 20h1v1h-1zM38 7h1v1h-1zM57 5h1v1h-1zM7 14h1v1h-1zM20 16h1v1h-1zM46 35h1v1h-1zM57 31h1v1h-1zM8 11h1v1h-1zM42 8h1v1h-1zM34 35h1v1h-1zM23 14h1v1h-1zM16 7h1v1h-1zM31 25h1v1h-1zM15 32h1v1h-1zM39 12h1v1h-1zM15 3h1v1h-1zM28 0h1v1h-1zM26 34h1v1h-1zM54 7h1v1h-1zM18 15h1v1h-1zM1 7h1v1h-1zM55 19h1v1h-1zM26 20h1v1h-1zM49 28h1v1h-1zM25 15h1v1h-1zM1 0h1v1h-1zM30 10h1v1h-1zM21 3h1v1h-1zM30 8h1v1h-1zM17 37h1v1h-1zM16 35h1v1h-1zM9 26h1v1h-1zM20 23h1v1h-1zM14 34h1v1h-1zM26 11h1v1h-1zM30 13h1v1h-1zM26 1h1v1h-1zM4 23h1v1h-1zM53 34h1v1h-1zM40 23h1v1h-1zM21 10h1v1h-1zM24 37h1v1h-1zM15 33h1v1h-1zM54 10h1v1h-1zM7 6h1v1h-1zM5 9h1v1h-1zM12 18h1v1h-1zM4 10h1v1h-1zM39 21h1v1h-1zM32 5h1v1h-1zM21 19h1v1h-1zM42 29h1v1h-1zM51 1h1v1h-1zM32 26h1v1h-1zM4 14h1v1h-1zM11 23h1v1h-1zM21 9h1v1h-1zM28 0h1v1h-1zM26 34h1v1h-1zM19 11h1v1h-1zM47 38h1v1h-1zM47 33h1v1h-1zM32 28h1v1h-1zM59 9h1v1h-1zM58 14h1v1h-1zM58 2h1v1h-1zM50 24h1v1h-1zM30 3h1v1h-1zM4 37h1v1h-1zM9 28h1v1h-1zM57 30h1v1h-1zM52 7h1v1h-1zM45 6h1v1h-1zM32 20h1v1h-1zM2 28h1v1h-1zM22 29h1v1h-1zM32 20h1v1h-1zM6 16h1v1h-1zM50 36h1v1h-1zM22 29h1v1h-1zM49 27h1v1h-1zM29 8h1v1h-1zM53 14h1v1h-1zM44 17h1v1h-1zM29 9h1v1h-1zM58 29h1v1h-1zM7 17h1v1h-1zM41 29h1v1h-1zM6 36h1v1h-1zM41 31h1v1h-1zM54 12h1v1h-1zM32 4h1v1h-1zM8 39h1v1h-1zM6 5h1v1h-1zM1 22h1v1h-1zM21 10h1v1h-1zM46 37h1v1h-1zM29 38h1v1h-1zM23 20h1v1h-1zM28 38h1v1h-1zM40 27h1v1h-1zM26 29h1v1h-1zM15 17h1v1h-1zM23 14h1v1h-1zM1 4h1v1h-1zM41 11h1v1h-1zM6 30h1v1h-1zM25 2h1v1h-1zM47 13h1v1h-1zM31 36h1v1h-1zM32 10h1v1h-1zM30 29h1v1h-1zM4 12h1v1h-1zM58 34h1v1h-1zM0 14h1v1h-1zM0 13h1v1h-1zM43 12h1v1h-1zM34 0h1v1h-1zM44 14h1v1h-1zM11 28h1v1h-1zM48 15h1v1h-1zM21 31h1v1h-1zM35 3h1v1h-1zM51 5h1v1h-1zM31 23h1v1h-1zM45 26h1v1h-1zM39 12h1v1h-1zM48 1h1v1h-1zM1 25h1v1h-1zM33 37h1v1h-1zM14 18h1v1h-1zM6 32h1v1h-1zM8 17h1v1h-1zM23 39h1v1h-1zM4 25h1v1h-1zM9 16h1v1h-1zM4 4h1v1h-1zM48 5h1v1h-1zM17 9h1v1h-1zM34 6h1v1h-1zM27 39h1v1h-1zM47 13h1v1h-1zM17 3h1v1h-1zM51 36h1v1h-1zM54 32h1v1h-1zM17 24h1v1h-1zM37 23h1v1h-1zM10 2h1v1h-1zM52 39h1v1h-1zM18 8h1v1h-1zM50 38h1v1h-1zM43 26h1v1h-1zM57 10h1v1h-1zM8 7h1v1h-1zM20 6h1v1h-1zM41 2h1v1h-1zM10 31h1v1h-1zM14 25h1v1h-1zM39 25h1v1h-1zM48 26h1v1h-1zM1 12h1v1h-1zM9 15h1v1h-1zM8 23h1v1h-1zM22 27h1v1h-1zM20 26h1v1h-1zM22 28h1v1h-1zM8 3h1v1h-1zM38 24h1v1h-1zM39 27h1v1h-1zM28 39h1v1h-1zM43 26h1v1h-1zM8 0h1v1h-1zM9 12h1v1h-1zM43 24h1v1h-1zM3 31h1v1h-1zM30 38h1v1h-1zM50 1h1v1h-1zM32 6h1v1h-1zM11 12h1v1h-1zM52 34h1v1h-1zM36 22h1v1h-1zM42 23h1v1h-1zM12 6h1v1h-1zM0 15h1v1h-1zM47 10h1v1h-1zM51 22h1v1h-1zM26 24h1v1h-1zM0 19h1v1h-1zM38 35h1v1h-1zM48 25h1v1h-1zM53 18h1v1h-1zM2 16h1v1h-1zM8 8h1v1h-1zM44 12h1v1h-1zM25 26h1v1h-1zM52 18h1v1h-1zM29 21h1v1h-1zM2 10h1v1h-1zM20 36h1v1h-1zM54 38h1v1h-1zM11 7h1v1h-1zM39 1h1v1h-1zM31 23h1v1h-1zM54 7h1v1h-1zM17 16h1v1h-1zM11 4h1v1h-1zM50 17h1v1h-1zM24 30h1v1h-1zM58 33h1v1h-1zM21 24h1v1h-1zM32 30h1v1h-1zM20 12h1v1h-1zM56 24h1v1h-1zM2 29h1v1h-1zM16 17h1v1h-1zM27 22h1v1h-1zM0 24h1v1h-1zM45 36h1v1h-1zM32 4h1v1h-1zM1 5h1v1h-1zM35 18h1v1h-1zM40 32h1v1h-1zM35 14h1v1h-1zM30 10h1v1h-1zM56 2h1v1h-1zM1 11h1v1h-1zM15 25h1v1h-1zM0 10h1v1h-1zM27 19h1v1h-1zM37 18h1v1h-1zM15 27h1v1h-1zM20 22h1v1h-1zM5 4h1v1h-1zM15 31h1v1h-1zM55 35h1v1h-1zM0 19h1v1h-1zM19 39h1v1h-1zM4 39h1v1h-1zM37 24h1v1h-1zM11 23h1v1h-1zM43 22h1v1h-1zM18 29h1v1h-1zM9 24h1v1h-1zM47 39h1v1h-1zM8 21h1v1h-1zM2 2h1v1h-1zM55 10h1v1h-1zM41 1h1v1h-1zM18 25h1v1h-1zM22 4h1v1h-1zM18 35h1v1h-1zM21 0h1v1h-1zM0 12h1v1h-1zM11 7h1v1h-1zM5 2h1v1h-1zM46 8h1v1h-1zM55 33h1v1h-1zM29 1h1v1h-1zM10 36h1v1h-1zM10 10h1v1h-1zM14 24h1v1h-1zM7 19h1v1h-1zM12 17h1v1h-1zM28 11h1v1h-1zM23 2h1v1h-1zM34 26h1v1h-1zM24 8h1v1h-1zM17 15h1v1h-1zM24 20h1v1h-1zM10 30h1v1h-1zM35 12h1v1h-1zM55 23h1v1h-1zM2 19h1v1h-1zM23 13h1v1h-1zM43 13h1v1h-1zM8 7h1v1h-1zM36 11h1v1h-1zM37 28h1v1h-1zM26 37h1v1h-1zM25 25h1v1h-1zM19 31h1v1h-1zM30 9h1v1h-1zM49 16h1v1h-1zM26 22h1v1h-1zM55 13h1v1h-1zM6 2h1v1h-1zM44 20h1v1h-1zM0 27h1v1h-1zM44 31h1v1h-1zM40 13h1v1h-1zM15 10h1v1h-1zM33 9h1v1h-1zM28 15h1v1h-1zM33 26h1v1h-1zM40 30h1v1h-1zM49 11h1v1h-1zM35 32h1v1h-1zM8 15h1v1h-1zM52 2h1v1h-1zM17 34h1v1h-1zM31 32h1v1h-1zM27 34h1v1h-1zM58 13h1v1h-1zM18 39h1v1h-1zM46 10h1v1h-1zM32 12h1v1h-1zM3 34h1v1h-1zM11 15h1v1h-1zM5 26h1v1h-1zM2 3h1v1h-1zM54 36h1v1h-1zM47 8h1v1h-1zM14 21h1v1h-1zM12 10h1v1h-1zM51 23h1v1h-1zM54 0h1v1h-1zM12 19h1v1h-1zM48 29h1v1h-1zM6 16h1v1h-1zM28 17h1v1h-1zM9 5h1v1h-1zM2 18h1v1h-1zM1 35h1v1h-1zM33 15h1v1h-1zM45 1h1v1h-1zM6 26h1v1h-1zM7 31h1v1h-1zM8 9h1v1h-1zM36 18h1v1h-1zM46 0h1v1h-1zM51 6h1v1h-1zM15 1h1v1h-1zM38 39h1v1h-1zM16 28h1v1h-1zM49 25h1v1h-1zM17 33h1v1h-1zM16 5h1v1h-1zM16 31h1v1h-1zM16 30h1v1h-1zM59 8h1v1h-1zM20 34h1v1h-1zM9 11h1v1h-1zM55 8h1v1h-1zM33 11h1v1h-1zM48 14h1v1h-1zM2 23h1v1h-1zM39 32h1v1h-1zM42 25h1v1h-1zM35 2h1v1h-1zM18 37h1v1h-1zM25 37h1v1h-1zM53 20h1v1h-1zM59 2h1v1h-1zM8 36h1v1h-1zM7 11h1v1h-1zM47 5h1v1h-1zM19 4h1v1h-1zM46 0h1v1h-1zM21 38h1v1h-1zM25 32h1v1h-1zM19 25h1v1h-1zM14 28h1v1h-1zM49 24h1v1h-1zM50 8h1v1h-1zM39 32h1v1h-1zM14 3h1v1h-1zM3 4h1v1h-1zM53 17h1v1h-1zM28 25h1v1h-1zM51 13h1v1h-1zM27 37h1v1h-1zM39 5h1v1h-1zM7 39h1v1h-1zM16 2h1v1h-1zM56 18h1v1h-1zM14 35h1v1h-1zM25 21h1v1h-1zM30 30h1v1h-1zM52 30h1v1h-1zM52 12h1v1h-1zM34 30h1v1h-1zM28 19h1v1h-1zM13 0h1v1h-1zM25 38h1v1h-1zM10 9h1v1h-1zM18 21h1v1h-1zM30 28h1v1h-1zM58 36h1v1h-1zM54 28h1v1h-1zM20 37h1v1h-1zM1 15h1v1h-1zM27 27h1v1h-1zM20 5h1v1h-1zM58 32h1v1h-1zM52 39h1v1h-1zM31 11h1v1h-1zM59 7h1v1h-1zM57 26h1v1h-1zM48 17h1v1h-1zM18 32h1v1h-1zM30 18h1v1h-1zM59 13h1v1h-1zM25 13h1v1h-1zM55 31h1v1h-1zM31 39h1v1h-1zM45 9h1v1h-1zM35 0h1v1h-1zM2 0h1v1h-1zM5 10h1v1h-1zM4 21h1v1h-1zM43 7h1v1h-1zM39 29h1v1h-1zM58 18h1v1h-1zM7 28h1v1h-1zM32 25h1v1h-1zM26 6h1v1h-1zM39 28h1v1h-1zM17 36h1v1h-1zM53 18h1v1h-1zM39 33h1v1h-1zM15 20h1v1h-1zM53 8h1v1h-1zM2 23h1v1h-1zM14 24h1v1h-1zM49 36h1v1h-1zM27 32h1v1h-1zM11 23h1v1h-1zM37 1h1v1h-1zM25 1h1v1h-1zM23 38h1v1h-1zM24 31h1v1h-1zM2 22h1v1h-1zM55 25h1v1h-1zM12 25h1v1h-1zM2 34h1v1h-1zM38 2h1v1h-1zM15 27h1v1h-1zM20 33h1v1h-1zM50 14h1v1h-1zM51 5h1v1h-1zM57 29h1v1h-1zM21 20h1v1h-1zM33 36h1v1h-1zM19 34h1v1h-1zM23 37h1v1h-1zM10 1h1v1h-1zM56 10h1v1h-1zM31 26h1v1h-1zM14 10h1v1h-1zM16 20h1v1h-1zM56 19h1v1h-1zM33 37h1v1h-1zM13 16h1v1h-1zM27 17h1v1h-1zM24 37h1v1h-1zM6 16h1v1h-1zM28 4h1v1h-1zM53 17h1v1h-1zM7 0h1v1h-1zM24 2h1v1h-1zM20 15h1v1h-1zM29 10h1v1h-1z" fill="#fff"/></pattern><g id="ct"><circle r="6.3" fill="#d8dcc8" fill-opacity=".5" stroke="#7888a8" stroke-opacity=".8" stroke-width="1"/><circle r="2.2" fill="#1a8090"/></g><g id="ct2"><circle r="2" fill="#1a8090"/></g></defs><rect width="904" height="802" fill="#fff"/>
<path d="M15.5 0v802M35.5 0v802M56.5 0v802M77.5 0v802M98.5 0v802M118.5 0v802M139.5 0v802M160.5 0v802M180.5 0v802M201.5 0v802M222.5 0v802M242.5 0v802M263.5 0v802M284.5 0v802M304.5 0v802M325.5 0v802M346.5 0v802M367.5 0v802M387.5 0v802M408.5 0v802M429.5 0v802M449.5 0v802M470.5 0v802M491.5 0v802M511.5 0v802M532.5 0v802M553.5 0v802M573.5 0v802M594.5 0v802M615.5 0v802M636.5 0v802M656.5 0v802M677.5 0v802M698.5 0v802M718.5 0v802M739.5 0v802M760.5 0v802M780.5 0v802M801.5 0v802M822.5 0v802M842.5 0v802M863.5 0v802M884.5 0v802M0 7.5h904M0 28.5h904M0 49.5h904M0 69.5h904M0 90.5h904M0 111.5h904M0 131.5h904M0 152.5h904M0 173.5h904M0 193.5h904M0 214.5h904M0 235.5h904M0 256.5h904M0 276.5h904M0 297.5h904M0 318.5h904M0 338.5h904M0 359.5h904M0 380.5h904M0 401.5h904M0 421.5h904M0 442.5h904M0 463.5h904M0 483.5h904M0 504.5h904M0 525.5h904M0 546.5h904M0 566.5h904M0 587.5h904M0 608.5h904M0 628.5h904M0 649.5h904M0 670.5h904M0 691.5h904M0 711.5h904M0 732.5h904M0 753.5h904M0 773.5h904M0 794.5h904" stroke="#d6d6d6" stroke-width="1" fill="none" shape-rendering="crispEdges"/>
<path d="M10 620l-1 6l-4 2l2 4l2-3l0-3l3 2l3 0l3-3l-2-3l3-2l-1 5l5-1l1 4l4-1l5 1l-3 1l-5 2l-1-3l-4 0l-2-3l-5-2l3-1l-1-4l4 2l4 4l5 3l-3 4l-4 3l-2 2l-2-2l-5 1l3 3l4-2l-1 3l-3 5l-1 0l0 2l1 3l-1 5l-2 5l3 0l3 0l3 5l0 4l2-2l2 1l-4 1l-3 0l3-4l2 2M10 620l5-2l1-2l3 4M10 620l3-4l2-6l0-5l0 0l-2-5l1-4l-4-1l-3-4l-5-2l-5-2l2-1l3 3l2-5l5-3l0 3l3 3l3-1l-1 4l-2-3l2-5l-2-5l2-5l1-6l0 0l-1 6l1 3l-3 2l-3 4l5 1l1 4l2-4l-2-4l-3-1M10 620l-3 4l2 2l4-3l2 5l0 3l-3 4l-1-3l4-1l3-1l-3-2l5 0l3-4M10 620l3 3l-1 5l3 3l2 3l4 0l-3 5l-2 2l-2 3l-2-5l0-4l-3-1l-2-2l4 0l-2-3l-4-1l2-4l-5 3l-5 1l-3 0l-5 1l-3 1l0-3l3 2l2-1l3 0l5 1l5 2l1-3l-3-1l-3 2l-2-1M13 623l2-5l-2-2l3 0l-1-6l0 0l1 6M99 683l-3 0l-3-5l2-4l-6 0l-4-3l-5-1l2-1l5-2l3 1l-2 3l-3 0l2-4l1 4l1 3l4 4l3 2l0 3l1 5l0 5M99 683l-2 5l1 5l0-5l-1 0M99 683l-3-3l0-3l-1-3l-4-3l-1-3l5-2l1-3l-1-4l3-2l2 2l-4 4l2 3l-2 5l-1 3l4 0l-3-3l-5 0l-2 3M99 683l-1 5M99 683l3-5l-3-4l2-3l4-3l-3-1l-1 4l-5 0l-1-3l-5 0l1-4l5-1l3 0l3 4l-4-1l-3 0l-4-2l4-5l2-5l1 3l0-3l-1 0l1-5l-1-5l1-4l0-4l-4 0l2-3l2 3l-3 3l3 1l0 4l-1 0l-2-5l-4-5l1-4l-3-2l0-4l4-4l3-4l1-6l2 6l3 4l4 4l-4 1l0-5l-4 0l-2-4l3 0l-1-6l-1 0l1-5l0 5M102 678l-6 2M102 678l-6-1l-3 1M102 678l4-4l4-3l-5 0l-2 3l-4 0l-3 3M102 678l1-4l-2-3l-3-5l1-3l5 1l1 4l0 3l-4 0M650 327l10-32l-21-26l-5 32l26-6l10-25l-31-1l8-26l25-12l-2 39l-23-27l-35-23l17-35l18 25l25 21l19 24l35-9l5-27l8-25l20-53l62 13l44-11l22 43l-40-5l18-38l33-6l-11 49l24-19l-13-30l11-47l8-60l-5-41l-52-17l5 73l52-15M650 327l3 24l-30 18l8 16l-29 3l21-19l-21-24l-6-20l-30 14l-27 10l-24 14l0 27l23 15l16 8l24 4l5-15l19-14l-3 16l-16-2l15 17l-20-2l-10-24l-6-22l4-32l4-20l12-18l27 8l25-8l16 26l-24-7l-24 25l-18 11l-18-17l-18-11l-9 21l23 22l-10 25l2 17l14-20l15 9l-4-26l23 12l2-18l-2-25l26-3l25 9l20-23l-13-33l29 15l10 35l24 6l19 4l19 4l18 10l23 8l11-27l17-22l5-33l1-23l3-25l33-4l45 8l0 60l0 29l-5 19l-3 26l-1 28l10 20l-9-48l-19-23l-30-3l-25 3l-5-34l22 12l8 19l-5 23l-16 14l21 9l-9 21l19-9l-10-12l-5-23l-20-20l-22-12l-26 0l15 27l2 29l13-8l-15-21l-15 15l-8-23l-14 9l-4-19l26-9l-8 19M650 327l23 1l26 17l24-24l0 30l33-15l5 23l-18 15l22 4l22 14l17 14l25 5l10-15l-22 2l12 13l4 24l18-9l-4 14l-14-5l-15 18l-4 16l11 2l-7-18l14 2l1-20l-16-11l-13-18l-4 19l17-1l12-13l15 0l-5-15l-11-15l-26-4M650 327l-22 15l-5 27l-19 1l-20-14l-22 15l-19 10l-28 9l-31 3l-15-20l9-23l37 13l13-34l11 20l4 32l-28-18l-10-27l-27 14l-28 15l-24 10l-22 2l0 28l-3 17l-19 2l-18 14l-14 15l3 10l-11 9l-2-14l13 5l-1 12l-10-3l-9-5l-14-8l-4-13l12-9l14-15l7-17l12-8l14-9l15 6l15 11l18-13l4-17l15 9l9-19l19 8l-12 23l-1 17l-21-12l22-5l27-3l-5 20l-23 0l-19 7l8 22l16-4l-14 17l16 14l-1 16l6 13l8 7l-4 10l-11 2l1 12l-9 5l-8-10l9 2l7-9l-12-2l-12-6l0-13l6-15l-3-17l-12-16l-18 3l-18 5l-11-3l-17-15l-11-7l12-10l-17-16l0-17l26 0l15-23l0 29l15-17l-15-12l-20-20l-13 16l-20 10l-11 11l-13-26l8-17l-23 5l-24 20l0-23l1-19l-26-14l-19 16l-25-13l21-16l4 29l-23 9l-18 5l16 11l-16 9l0-20l-2-19l18-8l-9-19l30 3l19-26l4 39l-23-13l-5-30l24 4l-9-28l-30 3l-19-17l-20-14l-34 7l14-39l-29 7l15 32l-21 22l8 34l17 21l20-10l-37-11l27-17l10 28l-2 26l0 25l-27 0l9 26l-3 14l17 14l22 1l-11-9l-11 8l-14 21l-10 8l-14-4l-17-8l-13 2l0-16l-18-18l-17-16l-16 8l-1 17l2 16l-5 17l15 1l5 14l11 0l13 3l-3 12l-14 10l9 4l13-5l-8-9l-5 14l0 13l-8 0l-7 5l-6 11l-11-7l-8 0l-6-7l8-8l14-5l5-8l10 2l-2 9l-13-3l3 11l13 0l0 9l11 9l13-1l-3-9l8-3l12 5l5 7l-6 6l3 9l-6 11l8 1l0 9l1 8l-10 1l9-9l8 4l-7 4l9 4l-2-8l14-4l7 4l9 1l12-5l13-4l5-11l1 8l-6 3l4 9l10 5l9 1l7 3l3 3l5 0l6 0l3-1l2 3l-5-2l-2-6l-4 6l-4-8l-1 8l-5 2l2-5l-7 4l0-7l5-9l4-6l7-4l8-2l-6-12l-7-9l-9 7l2 10l5 10l-9 0l4-10l-8 0l-14-1l7-5l13-4l5-14l4 7l6-10l-10 3l-1-15l-17 0l-4 12l-9-3l-1 9l10-6l-6-15l-14-12l-14-1l-10-2l10-11l0 13l4 9l10-8l18 3l6 12l4-9l10-11l-7-15l-15-4l-6-9l15-5l-9 14l12 16l3-12l13 4l10 10l8 6l10 10l6 15l-12-6l-4-19l1-17l12-1l19-2l-4-14l-15 5l19 9l15 3l8 17l10 4l6 11l-16-3l10-8l16 0l-10 11l10 5l11 6l-8 13l-14 0l-11-10l-13-2l-2-14l11-1l0-12l-11 13l-6 8l8 6l-15 0l-15-2l-9 10l-11 0l-12 2l1 14l12 7l0 9l-8-7l2 11l-9-7l3-13l-8 3M660 295l35-17l-25-8l21-15l4 23l-6 32l-16 18l5 26l-25-3l0 26l-22 8l19 9l17 2l-11 23l-6-25l-22 12l3-21M248 669l3 2l-6-1l3-1l5-2l-2 4l4 3l3 0l1 4l-4-4l-1-3l-3 0M248 669l-5 1l-6-1l-5-2l-2 2l5 2l2-2l3 1l-5 1l-5 3l-4 4l-1-4l5 0l0-5l-2-5l4 3l3 4M245 670l-2 0l-3 0M618 253l21 16l-24 18l-33 14l15-35l18 21l-6 22l-13 16l-14-24l-28 4l-6 23l22-9l26 6l30-5l8-19l-19-14l3-34l-21 13l-26 4l11 31M618 253l29-10l0-33l-35 10l6 33l-32-15l11 28M756 678l-4-4l5-3l4-6l-3-6l2-5l3 5l-2 6l6-1l4 3l2 4l3-2l-5-2l-2 7l-7 0l-6 4l3 5l1 5l0 5M756 678l1-7l5 3l3 4l4-4l4-3l5-1l-2-1l5 1l-3 0M756 678l6 5l-3 0M756 678l9 0l-3 5l-2 5l1 5l0-5l-1 0M762 674l1-5l-2-4l-7-1l-4 3l-2 4l-3-2l-3 1l6 1l4 3l-2-7l7 4l-3-7l4-5l5 0l4 5l-4 5l-6 2M306 751l2 4l-4 5l-7 7l2-7l5 0l-1-5l5 0l0 7l-4-2l2 9l-9-2l-8 0l-1-8l5 0l6 1l4-5l-3-8l-4 3l-3-3l-2 6l-3 6l-5-2l-1-6l-4-1l-2 6l-1 6l-4 5l1 5l4 5l6 4l1 7l6-1l-2 6l-4-5l-10-1l-4-4l7-6l1 5l5-1l6 0l2-7l-1-7l7 6l1-6l-4-3l-5-5l-1-6l-4 4l-3 6l-5-1l1 5l-4 5l-7-2l6-3l5 0l0 10l-8-2l4-3M306 751l-6-4l2-3l7 2l4-1l3 2l5 1l-1-5l-4 4l6 5l-1-4l4-5l-5 0l3-3l-3-4l-5-3l8-22l0 21l7 0l-2-21l-5 21l-8 1l3-23l-9 22l6 1l0 4l5-1l-2 4l2 3l-5-1l-2 3l-2-4l-4-2l-5 1l0 4l4 7l3-5l2-5l-5 2l1-4l-4-4l-3-2l-5 2l-3-3l-4 1l0 5l-2 5l-6 2l-5-1l-5 2l-3-3l-4 0l-6-3l0-5l4-1l2 3l0 6l-4 4l-2-7l-3 0l0 5l3-5l-4-5l-4-1l-4-1l-3 0l-3 1l-3 3l4 2l-1-5l-3-2l-6 0l3 0l-2 3l-1-3l-3 0l-3 2l-1 3l-3 3l-4-3l2-4l3-1l3 2l-1-2l-2 0l-5-1l7 1l4 0l4 3l3 0l-1-3l3 0l6 1l6-2l1 3l1-2l3 3l4 0l2 2l-2 3M306 751l-3 4l-5 0l1 5l-6 4l-4 3l-6 1l5-9l-8 4l-4 4l5 8l1 6M306 751l5 0l2-6M311 751l-3 4l7-1l1-7l-5 4l-2-5l-3-3l-4 1l-3-5l-6 0l-5-1l-4 1l2 4l4 1l-2-6l-6-3l-4-1l3-3l7 2l-1-22l5 21l0-22l4 22l-1 3l-2 4l-3 5l3 3l-5 2l3 4l2 6l5-4l2-8l-5-4l-2 4M311 751l4 3l5 5l-3 7l6 4l7 5l-1-5l-6 0l-4 3l-2-7l-5 5l4 9l2 9l-10-3l8-6l3-7l-7-2l-4-9l9 4l5-2l7 6l1-6l6-6l1-7l-3-5l-4-3l0-5l-2-4l2-2l5-1l-2-21l9 21l12-24l-9 25l-1 4l0 5l6-1l5-1l3 4l6-3l4 1l-1-6l-3 5l-1-3l-3-2l-6 0l1 4l-1 4l4 0l-1 3l5 7l0 5l6-3l-6-2l-5 3l-7-1l-6 1l-8 2l1 6l-7 0l-4-7l-6 2l2-7l4 5l1-5l-5 0l3-4l-4 0M308 755l5 3l4 8M420 280l-33-17l-27-12l-25-8l-1-41l-31-40l42 8l-11 32l-48-4l2 44l-23-16l21-28l17-36l32-22l10 30l18 42l-29-10l-20 28l-26 12l19 15l20 26l12 19l9-24l12-27l22-21l5 33l31-24l2 41l-1 32l-14 15l-33-5l-3 23l-29-5l-20-1l-1-21l20-16l20-3l13 23l28 24l-11 19l-18 7l3 16l4 23l23 11l-8 22l-1 12l10 7l14 0l-6-12l-8 12l-4 11l-2 11l-12 0l-8 12l-3 16l12 6l8-3l9 6l-9 3l0-9l11-7l-2 13l-4 11l-5-8l-8-6l-2-15l10 12l3-12l0-19l9 12l9 11l8-6l15 7l13-3l-13-10l15-6l10-5l-11-11l-8 7l9 9l-1-16l12-5l4-16l-6-15l4-13l-9-12l-8 17l13 8l20-2l17-4l12 21l15 5l12 4l12-5l13-3l-2 19l-11-16l-6 15l-6-10l10-19l15 11l7-10l18 9l6 16l5 12l7-8l-12-4l-12 8l17 4l18 7l12-6l-8-8l-15-1l11 15l3 18l-12 10l-7 7l-8-7l-9 6l-10 2l-6-5l-1-12l-12-3l2 8l11 7l-10 4l-2 10l-5 10l9 1l-4-11l9 7l2-12l1-9l10-2l10-9l5 8l0 11l13 3l-8 9l0 7l-7 1l7-8l-11 4l4 4l3 4l4-5l7-5l-7-2l-6-5l-5 9l-8-4l-5-5l1 12l-5 0l4-12l-9 6l0 8l-5 4l-3-4l-6-5l-1 4l-6 1l-5-2l-5 0l-6 0l-4-5l6-4l-2 9l-5 2l1-7l-6 3l-4 6l-7 2l3-6l-8-2l-4 2l-6 0l-5 0l1-6l3-8l4-7l1-10l-4-12l14-3l17-5l-9 10l-8-5l8-14l-9-9l12-9l-6-15l6-10l-18-11l-5-13l23 3l-18 10l-2 20l14 1l-8 11l2 13l-15-6l-14-1l-12-1l12 13l-13 3l-3 11l9 2l12-5l11 10l-15 2l4-12l-5-11l-7 16l-7 10l0 9l7 7l4-9l9 9l9 8l10 0l-6-7l-7-5l3 12l-8 0l-1-8l-12 8l-7 4l-9-2l1-8l8 3l0 7l0 9l-2 3l-5-2l-5 0l-6 0l4-7l5-5l3 8l6-6l7 4l1 7l3 4l0 5l-2 5l-1 5l0 6l-2 5l5 0l4 4l-1 7l7 1l5-2l3 0l3 0l5 2l3-5l2 7l4-5l0 9l-4-4l-5-2l-2-3l-3 1M420 280l40-13l-18 42l-22-29l-25 22l24 10l23-3l23-4l-5-38l43-15l-17-46l40-31l30-3l21-25l-29-29l-22 57l-50-5l-34-25l-32-29l-3 33l35-4l37-7l-3 32l10 36l-21 16l-5 45l25 11l1 35l-8 37l-36-8l8 23M420 280l28-36l12 23M420 280l-42 6l9-23M395 302l-23 20l-19 5l-14-25M395 302l10 25l-5 19l-31-1l2 27l-15-11l-16-21l-4 31l-24-15l28-16l-21-22l8-35l8-40l13 35l-21 5l-25-1l-10 24l-18 16l23 22l-24-3l-16 9l16 14l-9 14l-1 15l15 7l13 11l4 13l-9 13l17 8l-8-21l-18-5l14-8l23-2l-14-9l-9 11l17 12l-13 1M395 302l-17-16l-18-35l3-39l40-10l15 37l11-25l-26-12l-21 28l36 9l30 5l-19-30l36 8l38 30l41 8l14-29l13 39l-17 35l16 14M395 302l-36-3l19-13l-30-8l11 21l-6 28l-13 13M731 514l-7 6l-7-6l8-15l9-4l-3-13l-9-10l-11-15l2-19l20 3l18-11l-14-20l17 4l-3 16l-22-5l8-15l-2-16l-18 9l20 7l16-17l12-15l7 24l-18 12l20 4l26 7l-13-18l17-1M731 514l-14 0l-6 6l-15 2l7 5l8-7l13 0l-3 7l-2 8l12 4l-2 9l5-2l6 0l3-6l4-11l7-10l8-6l3-10l-5-9l2-10l15 7l12 10l-1 15l10 7l3 9l9-2l11 5l10 2l3 6l-6 3l3-9l-8 9l-6 0l-5-4l-2-12l-12-7l-4 13l7-4l-1 8l-6-4l-13 1l0 9l-5 0l-1-6l-12 4l6-11l-8 3l2 8l4 8l-7-3l3-5l8 4l5-2M731 514l13 5l10 0l-4-11l12 5l6 8l1 12l8-6l-9-6l-14-2l1 9l14 5l6 7l-4 8l-4 4l-4 4l-2 5l-1 5l0 0l0 6l-2 5l5 0l-1 5l5-1l-2 5l4 5l-4 4l-9 0l6 5l-1 5l0 5l-1 0l-1 6l6 4l4 4l2 7l-4 3l-2-5l4-5l4 3l-2 4l5-2l5-1l6 1l-3-1l-3 0l-3 0l-2 1l-3-2l5 1M731 514l3 13l-10-7M731 514l1-8l-7-7l-16-5l6-14l7-8l5-10l-16-5l-7 13l18 2l19 1l-10 9l-10 7l4 10l-14 5l6 10l-13-3l-8 11l-2-8l-6 6l8 2l-6 9l13-4l-3 8l-2 11l-5 0l-7-2l7-6l0 8l-5 2l-4 4l2-8l-4-5l11-1l5 8l6 0l5 2l4 4l0-10l-4 6l-2-10l-3 8l-4-11l-7 3l-3-7l-13 3l-8 0l-5 6l-7 6l-5 0l-5 2l-1-5l6 3l-2-9l-1-13l-2-8l1-10l8-9l10-1l1 9l-11-8l-10 0l2 9l-9 6l8 4l11 3l-9 5l5 6l4-11l5 10l6 5l4 5l0 7l-6 2l5 4l1-6l5 0l8-2l2 4M731 514l11-12l-8-7l-13-6l-12 5l2 10l-7 7l7 9l10 7l10 12l3-12l-13 0l-10 4l-8-4M744 519l6-11l15-5l10-2l14 0l4-17l-9-14l14-3l16 2l-13-15l17-1l-9-18l24 0l12 18l-6 11l6 10l-5 14l-10-6l15-8l9 7l-14 7l1 15l12-3l-2 11l-9 8l9 4l0-12l13 7l-13 5l-10 6l-10 8l7 1l-4 5l-1 5l7-4l-6-1M744 519l3 10l6 11l8-4l-6-8l13-7l11-11l-17 3M744 519l-10 8l13 2l8-1l-2 12l10 4l-8 2l-2-6l-10 0l-6-5l3 11l-9-7l6-4l10-6M744 519l-2-17l8 6l1-10l14 5l14 7l10-9l10-2l16-3l6 7l0 10l0 11l-11 6l-4 8l-5-6M87 329l-5-21l-28-2l13 16l15-14l-2-25l-32-7l-17-9l30-9l-13 18l18 17l16 15l17 3l11 30l17-3l19 14l8-14l-18-22l-9 22l-9-24l18-17l18 16l-18 3l0-19l-38-5l-16 16M87 329l7 24l9 22l10-14l14-23M87 329l23 12l-16 12l19 8l20 17l16-2l1 16l5 16l-19 5l12 16l-11 18l-8-10l-3-16l22 8l13-1l-6-20l17-15l13 2l20 4l12-17l15-7l2 16l-2 14l-11-9l-16 3l-10-14l-7-27l20 7l24 10l16-9l25-2l9 19l-19 10l-16-9l-15-9l-9-21l6-30l12 21l16 5l-9 16l16 12l18 5l-4 17l22 0l-18-17l18-16l-27-3M87 329l-20-7l-18-1l5-15l12-13l14-10l-19-25l23-17l27 1l22-1l-1-21l-38 1l23-33l-22-22l-36 6l0-34l-23 23l13 31l-5 22l-17-21l22-1l10-20l-23-11l-30-11l-16-29l14-24l7-26l33-17l37-42l-26-26l-19 35l8 33l-28-10l-5 27l-26-19l5 69l10 53l36-13l-9 32l-27-19l6-24l21-23l-37-6l-4 70l14-17l13 37l31 3l-18 32l5 21l-32-5l27-16l35 12l19 6l4-23l10-20l17 21l-9 20l17 14l14-35l13 18l20 5l-10 23l18 10l-20 16l12 13l-12 12l17 4l17-4l-22-12l20-7l9-27l25-27l-15-21l10-22l-29 5l-6-41l-34-5l20 32l14-27l31 12l-25 29l-19 17l-35-24M87 329l12-18l19 3l-8 27l3 20l23 3l13 12l-3-24l-10 12M87 329l-17 22l24 2l-7 13l16 9l8 22l1 20l-4 18l-13-9l17-9l7-10l17 6l-5-15l19-6M67 322l3 29l-6 26l-7 13l25 5l13 14l16-12l8 10l7 14l-10 7l-4-11M67 322l-11 20l-9 19l23-10l-14-9l-7-21l-19-3l-18 4l-25 1l9-16l16 15l1-17l-17 2l0-19l-9 35l2 30l9-18l-11-12l1 74l-2 34l14 0l11 8l7-7l9-13l-18 3l-9 9l5 16l6-8l-2-17l-4-13l0-19l-17 7l1-44l3 31l-4 13l17 12l12-3l10 13l4 13l16 2l9 11l-2 14M46 795l-5-5l-3-5l-4 5l7 0l-3 7l-5 2l-9-3l4 6l5-3l0 8l-5-5l-8 0l4-6l-2-5l-3 5l5 0l9-1l0 4l5 6l-5 2l-5 3l0-8l-4 4l4 4l-6 1l-2-9l4 4l-2 5l36 0l11 0l8 0l-2-9l5-1l3-4l-2-5l4-3l-4-5l-5 2l-1-5l2-5l-3-3l-3-5l3-7l5 0l3 4l3 4l-3 5l-5 2l7 4l-9 1l-6 2l7 3l5 6l0-8l-6-3l-5-5l7 0l3-7l2-4l5 0l1-5l1-4l4-1l-2 8l-2-7l-2-7l-6 1l-4-4l-2 4l6 0l0-3l-4-1l-3-1l-4 0l0-4l5 0l2 5l2-4l2 5l6 2l0-5l0-5l4-2l1-3l4-1l4 0l2 4l1-3l-3-1l5-1l-2 2l4 1l-1 4l3-1l3-3l-1-3l-3 0l4 3l2-4l-3 1M46 795l6 5l6 0l5 0l7-3l5 5l-1-9l9 4l4-3l-2-5l9 2l-7 3l-6-2l-7 1l2-7l-5 2l-2-5l-8-2l0-7l1-5l1-4l0-7l-5-4l4-1l3-3l2-3l3-2l1 3l4 2l4 3l2-3l4 5l4 1l2-5l2 4l5-2l5-5l-1-4l2-3l2-2l2 5l-6 0l-1-3l1-4l2 4l4 3l-5 4l4 4l-3 0l-1-4l7 0l-3 4l6-1l4 3l6-4l4 0l3 3l2-4l4 1l3 4l-4 2l2 7l5 3l4 5l-3 6l6 1l-3-7l-1-8l-8 0l-4 7l6 0l-2-7l2-5l0-4l3-7l0-5l-1-3l-5 3l6 0l4-3l-5 0l-3-2l2-4l4-1l8-22l-4 22l-4 0l2 2l3 1l1 4l2-3l-3-1l2-2l1 3l5-1l3 4l4 3l-5 3l0 7l-4 2l-2 4l3 8l8 2l6-2l6 2l-4 8l-3-4l-5-4l-5 4l-5 7l0-6l-8-2l-7-1l4 7l-9 0l-2 4l-6-5l-5 7l-2-8l-5-3l-6-4l7-3l-1 7l5-5l6-4l3-6l2-4l5 3l-3-7l1-5l-4-1l-1-5l3 1l-2 4l0 4l1 6M46 795l-8 2l-4-7l-5-7l9 2l3-6l-4-4l5-3l2-4l-3-5l4-5l-1-4l-5-1l-3 3l-3 5l-4 0l-2 7l-8-3l1-6l-6-1l0-5l4 3l-4 2l0 4l6-3l-2-3l8 2l-6 1l4 4l5-2l2-6l5 1l2 3l7-1l0 5l-1 5l6 4l-1 9l-4-5l-4 3l1-7l8 0l-5 4l-3-4l-3-4l5 0l6-1l-1-6l-4-3l5-3l-6-1l3-3l1-3l1-4l5-3l3 2l1-3l-4 1l-2-1l-3 4l-2-3l-4 2l0-3l-3-2l0-3l4-2l1-2l-2-21l9 21l1 3l-4 3l-3-3l-2-1l-1 4l-3 1l-3 2l0 5l6-2l-3-2l0-3l-3-3l3 0l-2-3l7-1l1 3l-3 3l-3-2l1-2l3 0M46 795l0-5l3-9l7 3l1-7l4-3l-4-2l5-3l-6-3l7-1l-7-4l2-7l-4-1l-3-3l-3-2l-5 3l-4 2l-1 6l3 4l-5 2l-3-4l-2-6l-5 3l3 3l2 5l-4 2l2 7l-6 2l3 3l-4 2l1-5l-6 1l-3-5l3-4l-7 1l4 3l-2 6l-1 5l-5 5l-5 0l-1 6l-6 4l1 6l6 1l6-5l-7-6l6-1l-5-5l1-8l-7-1l1-5l5-6l4 0l5 1l-2-6l-3 5l-3-4l-1 4l0 7l-5-1l-6 4l-4 7l4-2l5-4l6-4l1 5l-6 6l5 2l-6 5l-1 5l-5 0l0 7l4 3l5 2l3-5l-2-5l-5-2l-5-6l0 6l6 6l-6 1l-4-16l1-4l-1-10l3-3l1-6l2-4l1-4l4-1l3-3l4 1l-2-5l0-4l0-5l1-2l4 1l-2 3l-3-2l-3-1l-3 0l-2 4l-5 0l1 3l-3 0l2-3l-2-4l0 7l-1-17l1 10l1-4l-2-6l4 2l2 2l-4 2l2-4l-2 1l0 3l3 4l-2 4M46 795l0 6l6-1l-4 5l3 4l7 2l-21 0l-4-4M46 795l6-6l-3-8l-5 3l-6 1l-3-6l-9 1l3 3l-2 8l-3 5M46 795l9 1l3 4l3-5l2 5l-2 4l-3-4l-3 6l-3-6l3-4l6-5l0 4l7-3l-5 8l8 6l-2 5l-5-2l7-3l4-4M46 801l2 4l-6 4l9 0l-14 2l-9-1M46 801l-8-4l-5-2l1-5l-7 1l-5 0l-3-4l3-5l7 1l-5 4l-2 4l-6 0l-5-7l5 0l6-2l-5-4l-5 1l4 5l3 3l-3 4l3 5l1 6l-5-3l-8 2l-1-7l0-5l4 2l1-7l-4 0l-6 5M46 801l-4 8l-5 2l1-6l0-8M46 801l-8 4l4 4M549 811l41 0l7-6l-14 2l7 4l32 1l21-2l-13-5l6-9l1 8l6 6l9 0l1-8l-10 8M549 811l-20 1l-1-10l-11-8l3-6l8-6l1-7l-7-6l5-6l-7-7l-2-5l-6 0l8 5l9 1l-2 6l-9 2l2-9l-7 3l-1-8l3-8l3 8l2-5l7-3l5-4l2-5l3-2l10 1l-3 7l-4 8l2 4l7-5l-9 1l-7-1l-6-4l1 5l1 9l8-5l5 0l-1 6l4 8l-4 5l5 10l1-8l-2-7l8 1l12 2l1 7l-8 5l4 9l9 2l4-6l5-5l4-6l-1-6l-2-7l9-5l10-2l8 9l10 5l-2 9l-6 10l-13-5l7-8l4-11l3 7l5 7l8-2l-6-7l4-6l-5-3l4-9l4-5l-1-5l0-4l1-6l-6 1l-7 0l-8 0l-7-1l-4 2l-5 1l9-3l6-24M549 811l-1-8l-9-6l-7-3l-4 8l-8 4l-3-12l-6 4l-8-3l-4 7l-11 2l-6-7l-2 9l-10 3l-22 2l7-10l7-2l8 10l-11-1l-11 3l-7-4l-10-1l-4 6l-5-6l1-10l-6 6l5 4l9 0l4 6l13-1l35 0l-3-5l8-2l5 8l6-10l3 8l27 2l61-1l14-2l-7-4l-5-10l-9 12l-9-6l-3-9l-4-10l8 4l8 7l0 14l-13 3l20 1M549 811l10-3l-11-5l11-4l3-9l5-8l-1-6l-10-3l9-4l-1-8l6-5l0-6l4-6l-5 0l1 6l-6-1l5-5l-2-5l0-5l4 2l5-5l1 5l-6 0l-4 3l-7-1l-4-4l5-1l6 1l-3-3l-8 3l-4 0l-5-1l-4 1l-2 3l-4-5l6 2l1 6l5 7l6 0l4 4l5-2l-2-6l-2-5l1-5l3-2l7-20l5 20l6 2l-5 3l-3 4l0 4l3 3l8 5l5 5l-1 9l-8-4l4-10l11-1l4 4l7 2l1 7l9-4l1 9l-7 2l-7 4l-11-2l4 10l-5 12l-4-13l9 1l12-3l7-2l6 5l-12 5l-1-8l-5-5l-6-10l2-10l3-7l-7 3l-6 6l8 8l10-1M549 811l21-1l4-9l9-8l9 2l10-4l8-3l2 11l9 3l1 10l38-2l-8 0l-30 2l8-7l7-1l8-10l-9 2l-6-4l0 13l-9-3l-10 6l11 4l-18-3l7-1l1-9l-10-8l-5-8M549 811l-8-3l-2-11l2-6l-9 3l0-7l9 4l5-10l10-8l2 8l9 1l6-9l-8-4l-10-8l-10 5l5-8l-8-6l7 0l6-5l-4-5l-7-2l-3-3l-4 1l-3-4l-7 0l-5 1l-4-4l7-21l-12 21l-6 0l2 3l3 5l3 4l-4 0l1-4l1-5l5-3l6 1l6-21l0 20l4 3M529 812l-9-6l-9-8l-7-9l-1 6l-6-7l3-6l2-9l4 8l-6 1l4 7l2-8l2-8l-6 0l-2-8l0-7l7-4l5-3l-1-8l-4 3l5 5M529 812l-36 0l-66 0l-13-3l3-7l-8-2l-11 0l-8-5l-9-3l-5 4l-6 4l7 8l-7 2l-6-8l6-2l0 10l-7 2l1-10l-7-5l-6-7l7-2l0-7l5-3l-7-7l-3-6l-8 2l-8-3l0 7l-7 4l9 2l6-2l-1 6l-5-4l-2-6l-8-1M529 812l12-4l7-5l1-8l-10 2l-5 8l-6-3l-2-10l-9 2l-5-7l8 1l2-10l7-3l1-7l-8 1l-4-4l-11-3l-7-4l2-6l5 2l0-8l-5 6l-9-1l-5 7l-9-4l2 6l7-2l-2 8l-7 2l2-8l-8-4l-6 3l-4 5l-1-6l-7-1l-4-4l2-8l-6 0l3-4l3 4l1-6l-4 2l-4-1l1 5l4 8l-1 9l-1 9l-3-5l4-4l5-5l6-6l7-5l2-4l4-4l-1-4l-5-1l-3 2l4 2l1 5l3 3l-5 1l-2 7l1 6l-5-1l-1-7l5 2l-4 5l-5 5l6 1l-5 9l7 7l-9 1l-9 3l-8 5l11 7l5 5l4 7l3-9l9-3l11 1l-3-6l-8 5l-8-8l-1 11l11 4l9-6l2-10l13 1l7 1l8-2l-6-6l7-1l7 8l6 4l6 2l2 11l-5 7l-19-3l1-11l-5 5l-7-1l-8-6l-9 1M854 481l-4 10l3 9l11-10l16-2l5 9l6 8l-11 2l5-10l16 5l-10 3l-8 10l-7 6l4-14l3 8l5 6l-12 0l-9 6l-4 6l10 0l6 8l6 4l2-9l-8 5l-10 5l-5 0l-5 0l-5 2l-8 0l6-5l7 3l0-6l5 6l4-7l11 2l-5 7l-5-2l-1-7l-5-6l-13-3l1-7l7 4l9 0l6 6l-5 6l-9 1l-7 3l-6-5l-8 0l2 6l-3 8l-4-4l-5-2l-5 0l-2-11l0-11l9-5l12 0l-11-9l-10 3l9 6l-3 12l4 6l4-12l7-6l-1 10l-3 9M854 481l10 9l-14 1l-10-3l-11 9l-14-1l-10-6l-12-6l5-17l3-13l-13-19l12-10l9 10l8-11M854 481l3-10l-12 3M854 481l16-8l8-8l7-8l-5-14l-11 15l9 7l10 5l-8 18l12-8l15-6l12-1l-1-40l-6-74l-22 3l-17-26l-13 23l17 14l32 12l-17 11l16 17l-18 4l-20 0l-6 21l-13-12l-7-15l16-6l16-12l-6 24l8 12l2 14l-16-5l-7 13l-12 2l-13 2l7 9l-9 18l-5-11l14-7l18 7l0-20l-10-11l17-2l14-9l17 6l13-22M870 473l10 15l-8 8l8 11l-12 2l-4 9l3 9M870 473l18-3l14-5l5 9l6-13l6 12l-2 20l-16 9l3 13l5 7l5 12l-5 5l7 2l0 7l-5-2l-2-7l-4 7l-5 0l1-8l8 1l-3-9l8 4l2 7l-5 5l-6 0l-4-8l-6 4l-8-6l-6-5l-2 10l1 6l5-2l5 1l5-4l0 6l-4 4l-3 4l-3 5l-3-5l-3-4l6 0l0-7M870 473l-6 17l-2 13l-9-3M870 473l-13-2l-12-18l2-13M870 473l-1-15l-5-20M186 737l-3-1l-4-3l-4-1l-1 3l-2 5l4-1l-2-4l-3 0l-3-2l0 3l3-1l1-3l-4 1l-6-1l0-21l10 21l-4-22l9 21l-5-24l9 24l12-21l-5 22l-7-1l8-24M186 737l-3 2l0-3l-3 2l-1-5l-2 3l-3-1l-2-3l3 0l2 4l-1 3l4-1l3 1l3 2l-2 6l3 2l4-1l1 6l-4-1l3-5l3-5l1 4l-4 1l4 3l0-4l3-4l-4 0l-3-2l1-4l4-1l-3-2l3-3l2-20l4 21l-6-1l2 3l-2 2l4 3l-2 4l1 4l-4 0l4 5l-7 2l-4 5l0-6l-1-4l-5 1l6 3l-6 2l6 4l-3 4l6-1l1-8l7 3l4 4l4 8l-5 6l4 5l6-3l-5-8l9-1l2 6l-6 3l3 7l-4 6l-4 5l-2 5l-8 8l-10 2l-22 1l10-3l4-6l-5-6l-8-3l4-7l-6-4l-10-3l-5-1l0 7l5-6l8-1l2 4l-4 5l10-1l5-3l-3-7l6-2l8-2l-4-3l3-6l5 4l-4 5l0 7l2 9l5 7l-5 2l-2-5l7 3l1-5l-6-2l-2 4l-3 6l5-1l3 6l6 5l1-9l-5-4l-2 8l-4 7l-5-2l-17 3l-29-1l-8-1l-6-8l-2-7l-4-6l5-5l-5 0l3-8l0-8l-4-2l-3-8l5-3l2-6l-1-4l-4-2l2-2l4 0l-2 4l-2-4l0-3l4 3l1-3l2-2l5 3l3-3l0-2l3 2l3-1l3-1l-2-2l6 1l-2 4l-1 3M186 737l6 0l1-3l-5-2l0 2l5 0l5 0l2 5l3 2l-5 2l-2-3l-2 3l-5 2l2 3M186 737l5 4l-5 0l-5 1l-2 4l3 4l2-3l-5-1l-2 2l-4 5l4-1l5-2l0 5l-5-3l0 4l-4-3l-2-4l-2-6l3-3l-2-2l-2-2l-3-3l3 0l-6-22M186 737l0 4l3 4l-2 4M186 737l2-3l4 3l4 3l0-4M186 737l-3-4l0 3M183 739l-2 3l-5-3l1 4l-5-3l1 4l-2 5l-5-3l-7-1l-5-1l-1-3l-3-2l-4 0l3-4l-1-3l3 1l6-22l5 21l3 1l0 3l3 0l-1 3l-3 3l2 4l2 7l-2 4l3 4l1 5l4-2l2 4l-7 4l1-6l-6-4l0 6M132 798l4-7l7 1l5-2l2 7l4 4l-6 6l8 2l9 2l-57 0l-4-4l2-9l6 1l-3-9l-5-6l-5-3l-8-1l-7 0l3-4l4 4l2-6l6 7l-6 3l-2-4l-3 4l-3 5M132 798l0 5l4 7l-28 1l12-3l-8-1l-8 0l-3-3l-5-3l-3 5l-3 5l18 0l20-2l-8-1l2-7l4-3l-6-4l-5 0l-3 5l0 8l10-6l-5-3l-5 1M132 798l-6 0l2 11l4-6l-6-5l1-5l9-2l-3-4l-1-6l7 1l-3 9l-8-3l4-7l-6 1l-5 1l1 5l-2 6l7-1l1-5l5-1l6-5l4-5l0 8l-7 6l6 8l6 8l-6 3l23 1l-1-5l-10-5l11-1l1-7l-6-6l0 8l-6 6l2 8l8-3l11 2l-3-7l7 1l4-4l-9-2l-2 5l-6-8l9-5l-1 8l7-6l7-2l4-6l2 8l8 4l-9 1M132 798l-5-5l-5-5l-6 0l-7 2l-3 8l-5-6l3-8l3-6l-8 3l1-8l-7 1l3-4l-5-7l-3-3l-3-5l2-6l4 2l3-5l0-5l-3-4l-1 4l-3-2l-3 1l3 4l3-3l4 0l2 2l-2 3l-3 1l-4 2l-3-4l-3 2M132 798l10 1l1-7l7 5l-2 10M132 798l6 6l-2 6l6 0l14-1M142 799l0 11l-4-6l-6-1M142 799l8-2l6-5l-2 9M142 799l-4 5M35 779l6 0l3 5l-3 6l5 0l-2-6l1-8M35 779l2-4l-2-5l1-5l2-6l6-5l-1-3l4 0l4-1l2-4l1-5l-1-4l0-3l2-1l3-2l5 1l3 0l5-1l2 2l-4-1l2-1l4 1l-2 1l-1 3l-3-4l-3 0l-2 4l-1-4l-4 2l-1-3l-6 0l-7 0l5 2l3 1M35 779l-6 4M35 779l-6-4l-3 5M223 545l6 3l-5 2l-1-5l-4 4l-3 3l-4-4l5-2l-1 6l3 4l2 5l1 5l0 0l-1 6l4 5l-3 3l6 1l4 3l5 2l-2 3l-3-5l-1 4l-4 2l-3-2l-6 3l3 2l3-5l3-3l0 5l-6 3l5 2l1-5l3 1l5-2l5-2l3 0l2 0l6 2l5-3l1-5l4-4l2-5l1 0l-1-6l0 6M223 545l-7-4l-11-1l-8-2l-11 2l-2-7l-7 6l-5 3l-5-8l2-12l13-7l6-10l10 7l4 9M223 545l-6 1l2 3l0 7l5-6l-5-1M223 545l6-6l0 9l-1 4l-4-2l1 6l-2 5l-1 5l-1 6l-2 5l6 0l3 4l-1 4l5-1M229 539l-13 2l1 5l-7-1l-5-5l-1-8l-13-1l-5-6l-4-10l-7-6l-9-8l5-13l12-1l-8-11l-10-3l-3 12l-11-12l0-12l15-9l1-15l-11 10l-5 14l-4-10l-10 9l-5 10l-5-12l-4 10l9 2l9-1l-7 10l-7 8l-11 0l1-12l10 12l13 3l-6-11l-17-4l6-7l-8-7l12-3l-5-11l-17 10l-3-13l-15-9l-16 2l9-15l2-11l13 15l-8 9l-7-13l15 4l0-17l1-12l7-22l14 10l16-7l-2 20l-20-1l-15 0l-14-2l-14 11l14 5l-14 9l3 17l6 8l10-10l5 12l-6 10l0 15l-13 2l3 10l-8 2l11 7l-5 7l-8 8l0-14l-8 3l8 11l9 1l-1-9l-8-6l2-8l-13-1l3 12l-10 6l2-8l8 2l-4 13l12-2l8 14l1-13l7 3l10 7l-9 2l-1-9l-8 10l9-1l-3 6l-1 11l-9 5l4-10l5 5l6 6l6-6l5 6l5-7l2 8l-6 3l2 3l1 5l-2 5l0 5l-1 6l-2 5l3 2l6 2l4 3l-3 2l1 5l4-2l3-3l3 1l-6 2l-2-5l5 2l5 1l-2 0M229 539l3-7l2-12l7-8l5-9l10 10l-1 13l-4-7l-10-7l15 1l-5 6l-7 1l-3-8l-13-1l-12 2l-6 6l9 6l13 7l8 3l7 4l-4 7l-3-11l-1-8l-5-7l10 0l-5 7l-7 5l3 10l-6 6l3 0l5-2l6 0l5 0l-1-7l4 4l2 5l4 0l-6-5l3-5l1-12l11-10l-1 11l-10-1l-9 4l1 9l7-1l11-1l12-3l-2 10l-6 2l0 6l-3 4l-2 5l-1 5l1 6l2 5l3 4l-1 5l6-2l5 2l-3 3l5-2l3 0l3 0l5 2l-3-3l-2 1M229 539l6 3l5-7l6-5l5-11M229 539l-13-6l-11 7M757 585l5-3l-4-5l-4 4l-4 3l7 1l1 4l-6 2l-2-7l-5 2l-3 1l6 2l-3-3l-5 1l-3 0l-5 2l-3-5l-6 4l-3-5l-5 3l8 2l0 7l-4-3l4-4l4 3l5-2l2-3l3 1M757 585l-3-4l8 1l3 4l6-2l5 2l-3 3l5-2l3 0l3 0l5 2l3-5l4-3l3-4l2-5l4 5l-6 0l1 6l8-2l-3-4l-2-5l-2 0l1-6l1 6M757 585l6 5l2 5l-3 5l-3 0l-3-5l2-6l5 1l6 1l2-7l-4-3l-4-4l-2-5l-1 0l0-6l1 6M757 585l-5 6l-4-2l2-5M757 585l8 1l-2 4l-7 5l-4-4M412 76l-24-43l-41 10l-6-53l-60-18l27 43l39 28l39-49l2 39l-23 45l45 38l-44 5l-31 19l-29-6l-3 28l-45 15l-38-28l11-25l48-5l27 15l-37 19l-38-29l-51-20l-34 6l21-32l16-30l44-15l35-23l19-38l-37 5l-53-1l36 57l-18 36l-26-21l-40 2l24 28l-38 5l14-33l-35-4l-27-34l-45 9l-20 23l-27-38l-4 46l19 45l23 30l32 11l30 2l-30 32l6 35l-16-15M412 76l-2 40l44-5l-12 34l-22 35l-17 22l-25-20l-33-12l25-18l-35-12l-27-37l-2 31M412 76l-47 2l-18-35l-23 30l42 48l41 28l13 31l9 34l22-28l-9-41M412 76l54-20l68-7l-11 47l-37-3l48-44l-38-32l-30 39l20 37l-7 45l-25-27l32-18l24 39l16 43l-15 44l-25-13l-35-20l25-16l34-38l-31 6M412 76l42 35l12-55l-43-43l-35 20M412 76l11-63l-37-19l-45-4l-33 25l16 58l41 5l1 43l-58-18l-29 16l-10 34l34 9M423 13l73 4l11-37l52 26l-25 43l32 33l-43 14l25 22l8 54l41-1l-20-24l10-35l-39 6l18-36l21 30l24 28l-34 7M423 13l40-35l44 2M730 770l9-3l8-2l10-7l-1-8l0-7l7-5l-4-6l6 2l-2 4l-7-2l3-4l-7 1l-2 4l-7 2l-4 0l-6-5l-3 4l0 8l-10 0l-3-6l-6-3l4-2l2 5l-2 7l5-1l6 5l4-5l-6-5l-4 5l0 6l-8 1l-4 7l9-3l-5-4l3-6l5 5l-3 5l4 11l-7-3l-6-5l-8-3l-4-4l-7-1l-5-5l9 1l-4 4l-5 6l-9 5l10 2l-1-7l6 0l-1-6l-12-1l-2 12l7 10l3 11l11 0l8 3l6 13l5 9l-47 1l17-4l8-7l7-6l10 7l8-1l-3 10l8 1l-5-11l9-1l4 14l-71-2l8 0l63 2l-16-3l-14-3l9-6l4-14l-10 1l-4 6l-4-9l8-10l-3-9l7-5l-3-7l7 0l-2-9l7-4l7 1l2-6l-3-3l-2 4l-4 4M730 770l-9-2l5 11l7-3l6-9l7 6l1-8l11 3l9-5l-10-5l10-1l5-10l4-8l-4-4l-7-1l10-2l3-21l4 20l5 0l9 1l1 5l3 7l-9 4l-3-4l-1-5l3-5l-3-3l2-21l7 22l-2-25l7 25l-4 5l-7-3l6-2l5 0l14-22l1 21l4-20l5 20l0-20l8 22l-2-23l15 22l10-22l-5 22l5 4l6-1l3 5l5 0l-6 5l-6 2l-7 0l-3-5l-5 5l8 0l3 6l-4 8l-3 6l-11-4l14-2l11 3l9-7l10 6l1 10l-9 8l10 9l11 3l12 2l7-13l6 5l-2-31l-11 3l6-8l2-6l5 3l-2 8l-5-5l-7 1l1-6l8-1l3-8l-3-5l-5 5l-9 0l-4-4l-7 3l-8-1l-4-3l0 5l4-2l3-3l-7 0l-6 2l0 6l6-3l-6-3l-5 6l-1 5l-1 11l7 1l2 6l8 0l6-10l3-6l5-6l5-4l3-5l6 5l1 4l4 4l5-4l0 7l-7 3l-6-5l-2-5l-4-4l-1 8l-9 2l8 4l8 8l3 10l6 6l4 12l0-39M730 770l-4 9l-7-1l2-10l3-11l-7 0l-3 8l-13 0l-1-8l-6 6l-9 2l-3 8l-9 7l12 4l-4 6l-8-10l-8 7l-11 1l-9-7l7-6l2-8l-10-6l6-6l7-1l-6-5l-1 6l4 12l-7 2l-3-8l-7 3l10 5l5 6l2 13l2 7l9-8l9 5l-1-12l-1-9l3-8l-8-6l-10-3l4-6l7-1l-5-4l6-2l-1 6l8-2l-2-5l-5 1l3-7l2 6l1-4l4-5l11-21l0 22l6-21l-2 21l-4 0l-11-1l7-24M730 770l-6-13l2-6l7 7l7-6l8-6l-5-7l-1-4l8 2l6-1l-4-3l-7-1l5 5l6 6l0-7M730 770l3 6l7 3l4 8l2 10l7 7l-4 7l-10-9l14 2l9-11l-1-9l-7-9l-7-10l-7-5l0-8l-7-1l-3-5l9-2l4-5l5 2l8 2l-8 3l8 4l6-1l10-2l2 7l-7 3l0 6l1 14l-7 7l-11-2l-6 5l10 3l7-6l7 4l5 9l6 6l11 4l9 3l12-6l6-6l-1-8l2-9l2-9l5 5l-7 4l9 4l-2-8l7-7l7 3l-14 4l-1-12l-4 7l-10-7l-8 0l-6 8l-9-10l8-1l7-5l0 8l-7-3l1 11l5 11l-9 8l-2 15l-17 4l0-14l-11-4l2 8l9-4l8-5l11 0l-13 11l2-11l-13-4l-6 5l-8-3l-1 14l6 8l-10-1l-18 1l28 0l5-11l-11 3M730 770l3-12l6 9l1-7l-7-2l0-7l-7 0l-6 1l4 5l9 1M726 779l-3 8l4 11l-4 12l8 2l8-10l-12-4l12-5l5-6l-14 0l-3 11M726 779l4 8l3-11M700 222l-28 9l-1-51l-42 5l-32-14l14-31l29 18l-11 27l-47 10l-26-23l-5 30l-25-27M700 222l26 24l26 5l34-24l53-11l8-35l-26-27l-18-29l62 18l-14-54l-55-22l7 58l-44 16l-38-21l-32 28l-11-35l25-53l-57-5l43-37l14 42l33 29l60-22l22-38l42-57l-56 13l14 44l-73 1l-42 30M700 222l-9 33l29 24l6-33l24 34l25 23l-21 8l-31 10l-34-11l31-31l-25-1M700 222l31-3l28-6l27 14l11 23l42-34l33 27l44-19l1 27l-19 35l19 25l-21 12l-1 19l17 17M700 222l39-28l20 19l-7 38l-21-32M700 222l18-50l-29-24l-49 10l38-45l-32-58l-6-40l25-33l-75-10l4 54l-60 23M700 222l-29-42l18-32M673 473l-5-18l11-14l18-18l1 13l-19 5l-13-4l2 18l-8 14l-7 16l13 11l5-13l2-10l-13-4l11 14l5 9l-10 4l10 5l-9 4l-11 6l-8-5l-11-3l2 9l-10-4l-10-2l-3 13l-9-3l-2 14l11-11l10 2l0 9l7 4l9 2l4 7l4-6l-8-1l0-8l-9 6l3 9l-3 4l-7 1l-5-2l4-3l8-9l3-15l11-3l-5 12l7-4M673 473l11-10l-16-8l-19 0l11 14l-10 3l-1-17l-15-1l-17-13l-18-5l-12 17l-1-13l-17 4l6-12l3-15M673 473l12 10l-14 0l-18 2l3 12l0 14l-9 5M673 473l20 0l11-3l-7-15l14 2l13-8l9-8l-4-16l-16 13l11 11l3 13l10-5l13 3l2-16l-19-3l4 16l15-13l-1-14l16 5l-13-21l-1-21l19 9l15-10l0 15l-15-5l2 16l13-11M684 463l-5-22l18 14l16-17l-15-2l-1 19l-13 8l9 10l4-18M95 577l5 0l4 4l1 5l5 3M95 577l-4 4l-4 3l6 0l-2-3l5 1l2-3l2-2l-2-5l0-6l0 0l0 6l-1 0M95 577l3-5M95 577l1 5l-3 2l2 3l3 0l2 3l-1 6l0 4l-1 5l-2-5l3-4l3-1l-2-5l-5 2l4 4l-6-1l2-3l3-5l-2-5l-1 5l0 5l-6-1l-4-2l2-5l-5 2l3 3l-5-2l2-1l-5 1l-3 0l-5 2l-6-2l-4 4l-5-2l-3 3l1 3l-4-4l3 1l-3-5l6 2l2-3l2-5l-4 1l2 4l3 5l1 4l-4 0l-5-3M338 532l4 7l2 7l5 1l1-6l-6 5l2 4l3-3l4-1l-3-5l-8-2l4-8l-2-9l9-6l-1-14l-8 11l0 9l-8-6l8-3l9 3l10 6l0 10l4 7l-5 7l5 0l5 0l5 2l5 4l3-6l-5 0l-3 2l-1-5l-4 3l-5-7l0 7M338 532l6-10l-10 2l2-8l-10 3l8 5l-6 6l1 9l-4 7l-5 0l-2-7l-10-10l2 12l6 4l-1 3l5-2l-4-1l2-6l11 0l2 7l-6 0l-7-7l-8 2l-1 5l-4 4l3 6l-3 5l0 5l0 6l-1 0l-2 5l6 0l3 4l-1 5l5-2l-4-3l-5 2l-4-6l3-5l3 5l-2 6l-7-2l3-4M338 532l-9 7l8 5l7 2l-4 6l-4-4l-5-2l6-2l5-5M338 532l8-1l4 10l3-9l-7-1l7-6l-9-3M338 532l-10-2l-10 9l1-10l-11 0l-1-11l-7-8l-3-10l-7 6l-7 11l8 6l-5 6l-3-12l-6 8l9 4l-2 8l-9 7l-1 4l5-2l5 0l0-9l6 6l-6 3l5 0l5 2l-4-5l-1 3M338 532l-4-8M338 532l-1 12l-1 4l3-1l1 5l6-2l-3 6l-3-4M362 669l-5-2l-3 7l-4 4l-2 5l-3 0l1 5l0 5l0-5l-1-5l1-5l2 5l-2 5l0 5M362 669l-3 2l-2-4l-5-3l-3-5l-6 0l2-5l1-5l-1-5l2 0l-1 5l1 5l-2 0M362 669l2 1l-5 1l-5 3l-2-6l0-4l-5 0l5 4l5-1M362 669l5 1l-3 0M137 664l3-1l-2 5l6 2l5 1l-3-4l-2 3l3 4l2-3l0-4l-3 0l-1-3l-5-1l2-4l3 5l4 3l5 2l-2 2l-3 0M137 664l1 4l-3-1l-4 3l-2-3l4-3l2 3l2-3l-1-5l4 4l2 3l2 4l-3 4l-1 5l-3 4l2 5l0 5l0-5l-2-5l4 0l2-5l-2-4l6 0l-4 4l-3 1l1 4l-2 5l0 0M137 664l-4 0l3-5l2-5l1-5l-1-5l-2-5l2-2l-5-3l-4-3l2-2l2 2l-4 0l-5-2l-3-1l-3 0l-5 1l-5 2l-4 3l-4 0l-2 2l2 3l4-5l-1-3l5 0l-1-3l-1-4l-2 4l-2-3l-4-1l4-4M140 663l-1-5l-1-4l2 0l2 5l-3-1l-3 1M-9 525l-3 10l9 3l6 5l6 0l1 6l3-3l-4-3l7 1l-3 2l3 3l-6 0l-1 3l-5-4l4 0l2 1l2 2l-3 1l3 4l0-5l4-2l0-5l0-11l-7 10l-4-12l-8 7l-3 8l-5 0l0-4l8-4l2 8l-5 0l-5-4l-1-7l8-5l1 8M-9 525l1-8l4-14l11-1l11 5l1 8l-14-3l13-5l2-10l-13 5l-2 10l-9-9l-10-3l0-33l0-36l5-11l9 11l-13 12l-1-12l0 80l2 24M-9 525l5 5l9 1l-2 12l-4 3l5 2l-1-5l5 5l1-5M-9 525l11-1l3 7l11 2l10 5l-10 6l4 3l-2 5l-2-3l4-2l5-2l5 1l5 0l9-4l-3 4l-6 0l-2-7l-3 7l-5 2l0-3l-9-1M-9 525l-5-14l0-44l1 10l5 7l6-5l-11-2l1 14l11 3l-7-10l-4 7l-2 9l1-23l12-7l-1 9l2 7l-8-2M-4 530l6-6l-10-7l13-5l4 8l10-5l10 1l7-5l-9-3l-8 7l3 12l-6 6l-7-13l-4 11M510 683l2 5l0 5M510 683l3-8l0 8l-1 5l0 0l0 5l0-5M510 683l-2-5l5-3l3 3l4-4l0-4l2-3l5 2l-2 2l-5-1l-4 2l-3 3l0-3l-3-3l2-6l6 1l4 3l3 4l-5 3l-4-2l0 6l-3 5l-3 0M513 683l-1 5M668 455l-15-16l-12-12l15-8l15 5l26-1l5-13l3-25l-13 10l4-27l27-17l2 26l-20 8l12 18l12 22l-17-4l-15 2l-22-13l-8-14l8-15l3-27l21-9l-3 23l9 17M653 439l3-20l10 18l5-13l8 17M653 439l13-2M653 439l-16 1l-11-9l-9 10l-5 21l-7 11l-4-19l-8 15l-11-6l-20-9l-4-18l-4-23l-16 13l0-21l14-9l16-3l11-17l-17-5M653 439l-4 16l-12-15l-20 1l-5-14l-13-23l-1 15l1 17l-13 4l12-21l-23 13l-21-19M149 376l12 8l12-13l-1 22l-1 16l-10 19l-5 19l-8-18l7-21l16 1l5 14l6 18l6-13l7 17l-6 11l16-1l9-11l-19 1l14-18l5 17l12-12l0 11l-3 10l-10 8l16 3l-6 7l-6 9l-2 9l14-3l6-14l-12-1M149 376l24-5l15-13l-17-16l-10 16l-7-20M149 376l12-18l-15-6M161 358l27 0M161 358l12 13l12 24l-14 14l16 2l18-12l-8 19l12 9l17 5l-3-18l-18-15M742 502l8-14l-19-6l-16-2l-11-10l-1 10l6 14l-13 12l15-2M742 502l-10 4l2-11l16-7l12-4l19-3l3-11l-15-3l-19-7l17-6l-15-10l15-9l0 19l11-8l-11-11l7-17l14 17l-3 23l-1 12M742 502l9-4l9-4l15 7l4 9l9 6l-1 13l11-6l8-9l-7-15l-6-15l-12-3l-4 10l-17 3l-10-6l1 10M608 589l2-3l3 1l-5 2l-3-5l-5 3l1-6l4 3l5 2l5 1l-2 0M608 589l-5 2l-3-4l8 2M236 737l-2-2l2-3l0 5l1 5l3-3l2 4l-5-1l-4 3l0 5l0 7l3 8l7-4l6-3l8-3l4-1l0 5l-4-4l-2-6l6 5l-2-7l-4 2l-1-4l5 2l5-1l6 0l-5 4l-4 4l8-1l1-7l2-6l3 4l-1 4l-4-2M236 737l-2 3l0-5l-3 4l2 6l-3 7l3-2l6 4l4 2l6 2l-3-7l-3 5l0 5l-5-3l-2 7l9 3l-2-7l9 5l-3-8l5 3l3-6l-6-4l-2 7M234 740l-1 5l-5-3l3-3l0-4l-3 3l3 1l3 1l3 2l0 6l-4 2M716 639l2 5l1 5l-1 5l4 5l-6 0l-3 5l3 7l-7-4l4-3l4 1l8-1l4 3l5 2l-2 2l-5 3l-6-4l2 8l4-4l-1-5l3-2l3 4l5-1l-3-1l6 1l-3 0M716 639l3-5l3 5l-2 5l-2 0l1 5l0 0M716 639l-3-5l3-4l3 4l6 0l4-3l3-4l-5-3l2 7l5-2l6-1l5 1l5 2l2-7l4-4l9 0l-3-4l-3 0l2-6l1 6M716 639l6 0l3-5l-1-4l3-6l-4-4l-6-4l2-6l0 0l-2 6l-2 4l8 0l-2-4l-4 0M719 634l-6 0l-4-3l-5-2l-6-1l-5 1l-5 2l-4 3l0-6l6-1l6 1l-3 1l-3-2l-4-3l-2 4l4 3l2-4M719 634l5-4l5 1M165 546l-1-5l-10 0l0 5l6 0l4-5l3-7l12-6l-2 11l2 6l7-5M165 546l7-4l-2 6l-5-2l-5 0l-6-5l-6-4l2-8l6-10l12-5l-2-13l-5-7l-7 8l-12-3l-8 8l-9-3l-11 8l11 5l9-10l-1 8l-3 11l-1 7l-6 7l-1-11l8-3l8 8l10 3l-6 3l-4-6l5-9l7 4l6 6l-2 6l-6 3l1 4l5-2l-6-2l0-7l8-2l7-10l-7-6l-9-5l-14 1l9-8l-8 0l-1-8l-6-12l-9 12l-2-12l-8-1l-12 0l-7 8l-10-1l5-12l2-9l10-12l9-3l3 16l-12 13l-1-12l-9-2l-8-5l8-10l-10 1l1-13l9 12l10 3l6-16l6-9l14 12l15 0l10 4l1-22l-19 8l-7 10l-20-3l-7-18M170 548l4 4l4 4l2 5l0 5l0 0l0 6l3 5l0 5l3 4l-4-1l-3 3l1 3l-4 4l-4-4l0-4l-4 2l-6-2l3-1l5-2l-2 5l4 2l4 1l4-1l1 5l-5-1l3 5l2-4l1 4l-3 0l1 5l0 5l-1 6l2 3l-5 1l0 5l-4 3l0-4l4-4l3-4l3 0l3 4l-4-1l1-3l-1-6l-1-5l1 0l0 5l-1 0M170 548l5-1l-1 5l5-1l-1 5l3 5l2-5l-5 0M30 497l6 14l4 12l0 9l4 10l2 6l-5-2M30 497l-7-12l-13 2l7-9l-7-5l7-5l8 2l3-14l11 9l-8 11l-6-6M30 497l1-12l0-9l-8 9l-3 12l-12-3l-1 8l-8-8l-3 9l-10 8l3 35M30 497l12-5l8 3l-2-14l7 4l8-9l5 10l5-12l-10-11l-11 5l3 8M30 497l-10 0l-10-10l-10-1l8 8l2-7l-4-7l-8-1M30 497l-3 11l-9-1M30 497l10 3l-4 11l10 9l7 3l2 7l-8 0l4 6l-7 6l8 2l-6 4l5 0l-1 4l-4-4M31 485l9-1l8-3l-6-5l-11 0l-14 2l0-10l-10-5l-2-16l12 3l-6-11l16 6l-9-13l-9-10l8-16l-12-16l-13-6l8-14l-11-17l16 5l-7-23l14-13l13 12l-27 1l24 14l25 12l-1 20l18-4l20 3l19-5M227 780l9 2l3 6l4-4l-5-8l-2 6l-4-7l6 1l6-1l7-3l8 0l-1 8l-3-5l-6 8l9-3l-3 7l-4 3l-2 7l-4 7l4 5l5-8l-9 3l-5 2l-6-6l-5 6l-3-8l8 2l-2 11l8-5l9 3l-17 2l-3-5l-9 5l-23-3l10 0l-2-8l10 2l-8-7l-5-1l3 6l-7-1l-7 4l-6 0l3-6M227 780l5-5l-1-6l5-4l-5-2l2-6l-7-3l-6 0l-4 5l-4-3l8-2l2-4l-3-4l-5 3l2-7l0-5l-3-3l-4 1l1-4l3 3l-4 4l7-1l-5 4l5 1l3 4l1-6l-4 2l-4 2l2 5l-5-1l-3 6l-3 7l-4 4l-4 5l6 0l6-1l-8-4l-8-3l-3-3l-8 1l5 3M227 780l1 7l8-5l7 2l1-9l-7-4l1 5M227 780l-4 8l-8-4l-5-1l1 7l6 0l-2-6l5-2l-2-8l4 3l-2 5l-8-5l-10-2l-1-5l-5 5l6 0l-4 5l8 0l4 3l2-6l4-9l6-3l-6-6l8 0l-4-5l-2-4l-4-1l-3 3l-5 2l-7-2l-4-1l-3 3l5 6l6 1l6 0l-2 8l7-6l2-4M227 780l-5-3l4-4l6 2l5-4l-1-6M227 780l-7 2l3 6l5-1l6 3l5-2l6 4l4 5l5 4l9-1l11-1l3 9l7 1l5-7l-2-9l-8 2l-6-8l4-5l6 6l-4 7l-5 4l-3-6l2-6l-8 6l-4-4l8-6l8-1M227 780l-1-7l-8 1l4-9l9 4l0-6l-7-4l9-2l-3-5l-4 2l-4-4l0-6l-3 2l-1 4l4 0l4-4l7-1l4 3l5-5l6 4l-1-4l-5 0l4-4l3-5l1 6l3-5l1 5l-4 0l-3 3l7 2l-6 2l-2 4l-5-2l2 7l-5 2l-5-1l6-3l-1 4M228 787l1 6l5 7l0-10l2-8M16 791l0-7l1-6l5-6l1 5M16 791l-1 8l4-3M16 791l-6 6l-3 4l-8 0l1-6l-5-1l1-7l-1-7l-5-1l0 5l6 3l-4 2l-6-3M16 791l-6 0l-4 3l4 3l5 2l0 5l-8-3l4 6l4-3l5-2M10 797l0-6M388 744l2-4l4 0l6 6l5 0l0-5l-5 5l-7 0l-3-6l-5-1l-5-3l-4 2l-3 3l-5 0l3-7l-4 1l-4 2l-1-5l2-21l2 21l1 3l-5-3l-2 3l-2-4l6-20M388 744l4 6l2 8l-7 4l-9 4l-1-9l-4 4l5 5l6-9l3 5l-1 6l5 6l5 8l-11-3l6-5l-8-1l-5-7l-5 3l0-8l-5-6l0 11l5-5l1-9l3 5l2-8l7 0l6 1l1-4l1-6l1-4l1-4l4 4l5 5l-6-1l1 6l-1 4l-7 0l7 6l2 5l-7-3l5-2l8 4l7 2l0-8l7-2l-3-7l4-2l5-1l3-4l2 6l-5-2l-3-3l6-1l-3-3l-2-3l-4 0l-2 2l-5 1l-4-3l-5 4l-5 0l-5 0l-2-3l-2 3l-1 4l-3-5l-7 1l-1-5l-3 7l-5-4l-1-2l-3 3M388 744l-2 5l-2 8l-7 0M388 744l5 2l6 4l6-4l8 1l5-2l0-4l4 2l2-4l-6 2l2-4l-6-2l0 4l4 6l6 3l3-6l2 5l3-3l4 4l3 6l7 5l0 7l-6-1l-5 5l-4 6l-7-10l-1 6l8 4l-4 9l-8-3l-7 4l-4-7l5-4l-1 11l-1 6l12 4l8 2l8-9l3 11l-1 7l-6 5l-8 0l56-1l-13-2l3-6l7 3M388 744l-3-5l-3 5l-3 5l5 8l6-2l-3 7l7 4l-3 8l6-2l4-11l4 5l6 2l3-6l5 1l5 3l1-9l-4-5l-8-5l1 7l-7 6l-6 1l-7 5l0-8l-4-3l2-5M388 744l-6 0l4 5l4 6M717 403l8-26l17-22l14-19l31 14l17-20l26-2l-14-20l19-13l-26-24l-30 2l-4 30l21-12l-17-18l-27-22l45-1l42-3l0-31l-28-26l10-36l-49 29l14 44l25-37l36-9l33 36l7-31l27 11l-3-30l-2-77l-58-1l47 48M717 403l-5 18l1 17M717 403l-15 7l-10-15l-25 1l-14-19l-3 17l-7 17l13 8l19-9l17-15l-17-14l21-13l-18-14l-25 23l-30-8M377 584l5 1l1 4l4 2l3-3l-7 1l4-5l-5 1l4-5l8 1l0 6l4-3l-4-3l-4-4l-5 0l1 3l-4 1l0 4l-3 6l4-2l0 6l4-4l5 4l-3 5l-1 5l0 5l-1 0l-1 6l3 0l-2-6l0-5l1 5l1 6l3 4l4 4l-4 3l0-7l-5 2l-3 3l0 7l1 3l4 0l1 4l4-5l-5 1l-2-5l-3 2l-2 2l3 1l2-5l-3-5l-1-5l4 2l2-6M377 584l5-3l3-4l2-5l1 0l0-6l-1-5l1 0l-3-5l-3-4l-2-6l6-4l-1 4l5 1l-3 3l-2-4M377 584l-5 2l-2 1l5 2l2-5l2 7l-4-2l-3-3l-5 1l-3 0l-5 2l-5-2l-3-2l-2 5l-3 5l-4 0l2-5l-6 1l2-3l-7 1l-5-2l3-1l2 3l5 2l4 4l3 5l1-5l2 5l-3 0l1 5l0 5l-1 6l-3 4l-4 4l-5 3l6 3l4-4l5 2l-5 3l1 3l5 1l0 4l3-5l-3 1l1-4l-2-3l1-4l5 0l5 3l-2 4l-5 3l-2-3l-7 0l-4-1l-1-6l5 2l0 5l-3 3l4 0l6-3l2-3l-4 0M458 739l-5 6l8-2l7 3l-2-4l4 0l8 0l7-1l-4-3l-3-3l-4 3l-5-1l4-3l5 1l0 7l-4-4M458 739l-4 0l-3-2l-1 4M458 739l-1-4l-6 2l-5 3l-2-3l-4 1l-4-4l-2-3l-4 1l-5 0l-4-25l9 25l-3 3l5 0l-2 3l4 0l6 0l0-5l-4 1l-4 1l-2-3l7-25l-3 24l8-21l-2 23l-6-2l-2 4l2 3l2-4M458 739l3 4l0-7l4-1l-1-3l4 1l1 4l-3 5l-1-7M458 739l3-3l-4-1l-3 4M461 736l-1-4l-3 3l-5-1l-1 3l-4-2l-1 5l-4 6l5-1l-3 5l7 3l-5 6l4 3l7 1l-8 8l9 2l-2 8l7 7l2-8l5 4l1 12l2 7M461 736l3-4l-2-25l8 24l3 3l2-3l8-21l-2 22l7-21l-1 21l7-21l6 21l7-1l-3-24l9 24l5 0l-1 6l5-2l2-3l1-22M461 736l5 6l-5 1l-2 4l9-1l3 4l6-2l2 6l-6 2l-7-3l5-3l2 6l4-8l-4-3l5-3l3-4l4-1l6 1l6 0l3-2l4-3l3-2l-8-21l1 22l0 4l4 2l5-4l-5-1l0 5l-4 3l0-5l-4-2l1 4l3 3l-3 3l0-6l-7 3l1-3l0-4l3-23M112 127l-17 39l-6-26l5-34l-47-10l12 42l35-32l35-23l17 27l-4 47l4 24l40-19l34-13l5 26l33 2l28 21l-41 7l20 21l-30 15l10-36l-20-30l-14 23l34 7l13-28l11-24l-49-4l-24-12l35-13l7-30l-11-61l-60-33l16 48M112 127l34-17l18 24l-22 23l-25 31l-24 1l2-23l47-9l-30-30l-23 13M112 127l17-44l-21-37l18-26l17 30l24-50l24-24l-77-6l-59 16l-35 10l16 25M112 127l-18-21l-24-30l-26-22l3 42l-43 1M22 811l15 0M22 811l-24 0l-3-6l4-4M22 811l-7 0l-17 0l60 0l6-2l-3-5l-3 7l-3-5l-4 3M22 811l-7-7l0 7l-4-4l-6 2l2-8M739 194l-21-22l3-52l15-31l-58 24l43 7l54-14l21-39l-51-37l-56-12l-24-36l41-10l39 58l-9 59l39 17l28 19l48-36l-33-60l47 16l47-56M739 194l33-11l-13 30M718 172l41-31l16-35M718 172l-47 8l-24 30M461 508l11 7l12-5l7-7l9 4l5-7l-2-11l1-12l-15 8l2 18l12-14l10-3l9 9l0 11l-2 10l7 5l2-9l-9 4l-7-11l-13 2l-5 8l11-2l14 3l-8 4l-1 8l-11 4l1 12l1 4l7-2l4 4l-4 6l2 5l1 5l-1 6l-2 5l6 0l3 4l0 6l-5 2l0-8l-5 5l5 3l-1 4l-4 2l2 5l2 5l0 5l-2 6l6 4l0 6l2 5l-4 4l1 4l-4 5l1 5l-1 5l4 5l-3 4l-3-4l2-5l2 0l2 5l3 5l-2 4l4 2M461 508l15-3l8 5l-3 14l6-4l8-5l-11-5l3 10M461 508l-11-2l-1 9l5 11M461 508l-12 7l-10 4l-2-10l-14 5l-9-6l-1 9l-11 5l8 9l-12 2l-7 2l2-10l-9 5l1-11l-6 5l-6-11l-9-11l-12 0l-15-1l-7-9l-10 1l-15-6l4-16l-1-10l11-2l15-11l16 5l-10 5l-7 9l1-19l-7-11l17 3l6 13l13 0l-10 10l10 7l-11 5l-7 13l-3-16l-7 7l-2-12l-13 2l-1-10M461 508l-2-12l-9 10l2-16l7 6M198 512l6-5l5-11l-6-8l-11-12l-13-9l-10-3l-4 9l-14 0l-10-4l3 11l-10-1l-2-9l-15 5l-9 11l-7 7l-12 1l6 5l12-1l9-11M622 793l-12-5M622 793l-1 9l9-10l1-11l-7-5l6-6l-12-1M622 793l8-1l8-8l-2 12M622 793l-10 6l-8 2l-7 4M622 793l0-10l9-2l-1-11l-8-7l7-1l8 2l-7 6l-1-8l1-9l-9-2l-7 1l0-9l3-7l-5-4l1-21l6 21l5 5l-4 1l-3-2l2-4l-1-21l7 20l4 0l4 2l11-26l-4 26l-7 0l-4 3l-5 1M745 546l-5 0M745 546l8-6l-3 8l5-2l5 3l3 7l-5 0l2-7l-6 3l1-6M745 546l5 2l4 4l4 4l2 5l0 5M745 546l-2-6M561 591l5-2l3-3l2 1l-5 2l-2-5l-5-3l-6 3l-2 7l5-3l2 7l-7-4l-2-6l4-1l3 4l5 3l-3 4l-3 5l-2 5l0 5l0 0l-1 6l1 6l-3 3l1 6l4 2l1 6l3-5l5-3l2-4l-5-3l3 7l5-2l5-1l5 1l3-2l5-3l3-4l3-4l2-6l0 0l-2 6l3 0l3 4l4 4l2 7l-4 3l-3-2l-3 3l-5-4l0-4l0-7l6-4l-1-6l0-5l0 5l0-5l0 0l1-5l-3 0l2 5M561 591l-1-5l-4 2M560 586l4-2l5 2l5 1l-3 0M560 586l6 3M560 586l-7-2l-2-7l5 0l-3-5l0-6l0 0l0 6l1 0l2 5l3 4l1 5M765 629l6 2M765 629l0-9l-7 4l-2-4l3-4M765 629l-4 2l6 3l-6 1l0-4l-4-2l-5-5l-4 3l2 4l7-2l-3 5l7-3l-3-7l-6 0M765 629l-7-5l-1 5M84 740l-4-2l-3 1l-3-4l-1-2M84 740l-5 2l-2-3l-5-1l-2 3l4 4l1 5l-2 4l-5-1l-3-3l-1-4l4-3l2 2M84 740l0 5l3-1l4 3l-1-6M84 740l-1-3l4 2l-1-5l2-3l2 1l2 2l-3 1l-2 4M80 738l-1 4l5 3M80 738l1-3l1-3l4 2l-2-2l-2 0l-5 0l3-21l4 21l4-1l-3-21l5 22l-1-25l7 26l9-1l3 0l6-1l3 1l5 1l1 2l-4-1l-2-2l4-21l1 22l7-2l2 2l4-1l2 2l1 3l-2 5l-3 2l3 6l-1 6l-7 1l-1-7l2-3l3 2M80 738l3-1l3-3l-5 1l2 2M80 738l-1-3l-2-3l7 0M719 610l2 6M719 610l0-5l0 5l0-5l0 0l2-5l-2-8l-4-6l-2-5l3-4l2-5l2 0l2 5l-2 6l5-2l-3-4l-4-5l1-6l-1-5l2 0l-4-5l-3-4l5-3l-2 7l2 5M719 605l-2-5l4 0l2-5l4-4l2-7l5 2l6 1l2 0M506 664l1 4l3 1l-1 4l4 2M506 664l6-1l-5 5l-4 2l-1-3l4-3l3-5l6 0M507 668l-5-1l-5 2l2 2l4-1l1 4l5-1l-6-3M507 668l2 5l-1 5l-4-4l-5-3l3-4M245 441l12-13l-16-1l-18-13l9-9l17-6l14-6l-3 23l18-16l-1 19l-8 12l17 6l-8 15l0 13l11-10l14-10l12 1l-7 15l-14 4l0 16l15-10l11-2l-12-8l-19-6l-11-3l-6-10l-4 19l10-9M245 441l2 18l10 15l10 8l5 8l9-5l3-9M245 441l-8 16l-11-14M237 457l-8 7l6 8l9 16l2 15l10-3l0 13l10 3l9 2l8-1l9-3l-1 9l4 11l-9-5l-9 5l0-9l-2-7l-10 9l0 10l4 5l6 2l4 2l5-9l-7-3l-8 8l0 4l5 2l-5 4l-4-6l0-9l-6 8l-8-2l-3 3l5 2l4 4l8-1l1 5l-5 0l4-5l4 1M237 457l-2 15l12-13l21 2M237 457l-14-4l-9-9M237 457l10 2l13-15l-3-16l12 3l-9 13l12-2l-3-11l-9-15l17 3l9 18l3 18l5 10l15 6l8 13l-12 3l8 13l-16 0l-5-9l13-4M426 375l16-33l0-33l-21 30l-2-27M426 375l-12-13l-10 15l18 15l13 9l6-17l28-11l30 1l16 16l7 18l16-3l5-24l9 15M442 342l-21-3l-16-12M442 342l19-13l17 21l21 24l16-11M442 342l-28 20l-25 3M64 736l-3 3l-3 1l0-4l1-2l-4-1l-3-2l-2 2l-4 1l-1 4l-2 2l-3 1l-3 4l-4-2l4-3l3 1M64 736l1 4l-5 2l-3 1l-4 3l-5 2l-3-3l-2-2l-3 4l-1 6l-3-2l0 5M64 736l3 1l2-5M64 736l-3 0l2-4l6-22l-11 21l6-24M828 669l3 2l4 3l-2-7l4-3l6 0l6 0l5 3l5 2l-3 2l-5 3l-4-1l1 5l3-4l3-7l2 4l5-1l-2-1l5 1l-3 0M828 669l-3 1l6 1l2-4l-5 2l-5 1l-6-1l-5-2l-4-3l-6-1l3-4l3 5l1 6l-3 3l-5 1l5 4l-6 5l2 5l0 5M823 670l-3 0l-3-1l-2 2l-5 3l-4 4l0-5l4 1l-1-4l3-3l3 4l5-1M823 670l2 0M35 734l-4 1l-3 2l-3-1l-4-1l-2 1l-1-3l-2 2l-3 0l-1 2l4-2l2 4l4 2l0-3l-1-3l0-2l-3 0l5-2l-13 0l13-24l0 24l5-21l1 21l4-20l2 21l3 0l-1 3l0 5l-5-1l-4-2l1-3l-4 2l-3 2l-4 1l1-3l-3-1l-1 4l3 0l0 3l4-1l1 4l1 4l3 2l4 4l5-4l-5-2l0 6l-5-1l-8 2l-1-6l-3 3l-3-2l2-3l1 5l-5 3l5 2l-4 3l-2 3l-6 1l-2-4l-4-3l0 6l-4-5l-4 1l-2 4l3 3l-4 1l0-37l6-20l-1 20l4 2l3-1l2 3l3-2l4 2l-3 3l-1 2l2 4l-3 3l6-1l-1-5l0-3l-4 2l-2-2l1 4l-3 4l3 1l4 3l6 1l-2 5l1 5l4 1l3 7l2-4l-5-3l-3 4l6 3l5 3l5-4l3 3l1-5l2-5l5-2M35 734l3-2l3 1l4-2l-7-20l0 21M35 734l0-2l-6-1l0 3l2 1l1 4l1 4l-5 3l-1 5l4-2l-3-3l-5-1l-5-3l-2 5l-5-2l2 3l3-1l3-1l4-1l6-3l-1 4l-4 3l-5-3l-1-4l-3-3l-3-2l-1 3l4-1l-1 3l2 5l1 3l-4-2l-6-2l4 5l-5 3l-5-3l-2 4l1 6l3-5l3 3l-6 2l-4 3l-5-1l-3-3l-2-4l6 3l-1-7l-2-4l4-3l1 3l-5 0l-3 5l0-5M35 734l-4-2l0 3l3 2l3-2l-2-1l-1 3l3 3M575 432l11 8M575 432l-17 4l11 8l13 19l5-10l14 1l16-13l9 21l8-8l3-14l4-13l-13-21l-26-18M598 419l14 8l16-21l-29-2M358 486l-6 16l-7-14l-10-9l-5 13l-4 8l-6-7l-7 7l13 0l11 1l8-13l-15 4l-13-8l3 9M358 486l-6-11M358 486l5-16l0-17l18 0l12-9l17 7l11-18l-14 7l3 11M358 486l11-6l7 17l-12 5l-2 10l-9 4l0 9l10 7l-10 0l3 11l6 3l-5 2l-1-5l7-11l8-4l2-15l-10 9l-10 3l0 7M358 486l-13 2M358 486l7 8l-13 8l10 10l11 1l10-9l-7-7l11-3l9-9l13 2l13 15l-17-5l4-10l-11-13l11 1l7-12l11-1l-2 14l-9-13l12-15l17-6l2 13l-7 9l11 10l-4-19l20-2l16 2l6 16l-14 11l14 3l-9 8M363 470l12 1l9 14l3 9l-4 10l13 0l9-7l-1 12l10-1M363 470l8-8l10-9l2-16l18-15l20 11l24 9l3-12l-11-10l-2-19l-18 16l-16 5l6 18l-14 4l-10-7l-19 1l-1 15l8 9l4 9l-6 9l15 5l1-14l7-15M363 470l6 10l-4 14l11 3M266 556l-3 5l1 0l-1 5l0 0M724 630l-8 0l4-4l7-2M724 630l-4-4l3-6M155 733l-4 0M155 733l-3 3l1 5l-4 2l1-4M155 733l2 2l-1 4l-4-3M155 733l2-22l-9 21l-2 2l0 5l3 4l5 1l3-2l2 3l-6 3l6 4l0 8l-3 6l-6-3l3-5l-2-3l4-1l4 6l-6-2l-9 0l-5-4l4-2l6-2l0-7l4 5l1-4M155 733l4 0l-2 2l3 0l2-3l-3 1l-2-22M159 733l1 2l0 4l-4 0l-3 2l4 1l3-3l3-1l1 4l5 1l1-5l4-3M843 572l3 5l-4 5l-1-5l2-5l0-6l0 0l0-5l1 0l-3-5l-4-4l9-4l-5 8l2 5l0 5M843 572l1 0l2 5l3 4l-2 5l7-2l-5-3l-7 1l5 4l-4 3l-5-2l-3 4l-4-2l-3-3l-3 1l6 2l2-5l2 7l4 4l3 5l3 0l-6-5l4-6l-8 2M843 572l0-6l1 6M843 566l1-5l2-5l0-8l0-10l-6 6l6 4l3 4l-3 4l-5 0M740 779l-1-12M740 779l6-6l4 9l4-7l-8-2M740 779l10 3l4 8l-8 7l-7-4l0 9l7-5M740 779l-10 8l9 6M463 788l7-4l9 7l5-4l9-8l9-6l-7-1l5-7l-8-3l-4-4l6-1l6 1l-8 4l-6 4l-5-6l-10 4l-8 0l2 9l0 7l10 0l4 11l4-11l1 7l7 9l12-1l3 8l-4 7l-9 2l-10-1l5-7l3-8l6-8l-4-9l7 3M463 788l-11 0l4-7l-7-3l0-7l-7 1l-11 4l10 2l6 6l-11 0l-5-8M463 788l-5 4l4 7M426 659l5 4l-4 1l-1 3l2 4l6 2l3-3l2-3l5 2l-2 2l-5-1l-2-6l-4-1l1-4l3 5l4 3l3 4l-5 3l-4 4l-4 0l-4 0l2 5l2 5l0 5l0-5l-2-5l4 0l-2-5l-2 5M426 659l1 5l-4 0l1 7l-3 3l-5-3l-5-1l3-1l2 2l4 0l1 3l4 4l2-4l-6 0M426 659l2-5l4 5l-6 0l-3 5l3 3l-2 4l4 0l2 3l4-1l-1 5l-2 5l-2 5l0 0M423 664l-4 3l-3 4M691 740l-7 7l2-8l0-5l-7-3l-10-24l5 24l5 0l3 3l4 0l4-2l1 4l-5-2M691 740l2 8l3 5l-6 5l-5 7l6 9l-6 10l7 8l1 7l-8-2l0 9l-10-1l10-8l-4-7l11 2l4-8l11-4l-3 7M691 740l-5-1l-4-5l-7 2l-3-2l2-3l-9-21l0 21l-5-20l-6 21l2 3l-6 2l-4 2l-2 7l-4 5l-6-2l-9-3l5 7l4-4l-3-7l5-5l-3-4M691 740l4 0l-2 8l5-3l-2 8l9 0l-5 4l-10 1l4 5l7 2l11 8l9-5M691 740l0-4l-5 3l-6-1l-6 2M684 747l-7 4l7 7M684 747l-3-4l5-4M257 474l-11-1l5 9l-7 6l12 12l3-12l8-6l1-9l13 12l13-4l-2 10l-9 9l-2-15l-14-3M247 459l-1 14l-2 15l-14 9l-1-11M51 671l0 4l-3-1l0-3l-2-4l4-3l3-5l2-5l1-5l-1-5l1-3l3-2l-2 5l-1 5l0 0l-1 5l2 0l2 5l3 5l5 3l5 2l-3 2l-5 3l-4 4l-3 1l-5-1l-1-3l3-2l-3-2l-3 0l-5 0l3-4l-5 2l-3 1l5 1l-2-2l-6 1l-5-1l-5 1l-4-2l-1 3l-2-3l-4-2l-1 4l-2 3l4-1l2 4l1-3l-3-1l-2-2l4 0l1-2l-2-5l-1-4l0-5l3 5l-2 4l5 1l4 3l0 3l3 1l2-2l-5-2M51 671l-3 3l-5-3M51 671l4-1l3 1l2-3l3-1l4 0l2 4l5-1l-2-1l5 1l-3 0M51 671l2-3l2 2l-1 3l1 4l5 1l1-5l3 1l0-4l-4-2l-3-1l-2-4l-2-4l3-2l-1-3M51 671l-2-3l1-4l5-1l1-3l-3-1M53 668l-4 0l-3-1M53 668l4-1l1 4l3 2l3-3l5 1M53 668l0-3l-3-1M462 674l5-2l4-3l-1 5l-3-2l0-4l4 1l1-4l-5 3l-3-4l4-5l2-5l0-5l0-5l0 5l0 0M462 674l2-5l3 3l-1 6l3 5l1 5l0 5M462 674l-4-3l2-4l4 2l3-1l1-4l4 1l5-1l4 3l5 2l-3 2l-4 3l-4 4l-5-4l1 4l-2 5l2 5l-1 0l1 5l0-5l1-5l3-5l-4 0l1 5l-3 0M462 674l4 4l4-4l5-2l-4-3l4-2l-3-2l1-6l4 5l-2 3l6 0l2 4l5-1l-2-1l5 1l-3 0M466 678l5 0M467 632l3-7l6 2l3-3l2 7l-4 3l-4-3l-6 1l-3 2l-4-3l-2-4l-3 2l-3-1l-2 0l-6 1l-5 2l-2-7l-4-4l-2-4l-4 0l2-6l0 0l-2 6l-2 4l-4 4l6 0l3 3l-3 2l4 2l-1-4l1-4l-4-7M467 632l1 7l-4-5l0-4l6-5l0-4l5-1l-5 5l-4-5l3-4l1-6l0-5l1 0l-2-5l-3-5l1-5l-1-5l-2-4l4-4l3-5l-1 0l0-6l0 0l1 6l2 5l-1 6l5-2l4 3l2 5l-4 2l-3-3l-1 7l-5 1l-3-6l-5 1l-2-7l4-3l8 2l-4-6M467 632l-3-2l-4 1l-5-2l-5-1l-3 0l-3 1l-2-2l-5-3l-2 7l4 0l-4 3l-3 1l0 4l3-5l0-3l-4 0l4 3M467 632l5 3l-4 4l2 5l1 0l-1 5l0 5l1 0l-3 5l5 0l-2-5l-1-5M467 632l4-3l-1-4l-8-1l4-4l4 1l-1-5l3 0l-2 5M471 629l2 2l3-4l-1-7l4 4l4 3l-2 4l-5-4l1 7l-4 5l-1-4l5-1M471 629l5-2M-14 753l-1-22l1-21M-14 753l5-1l3-4l1 5l1 5M-14 753l0 11l5-1l3 5l-5-1l3 6l4 2l-2-7l7 1l-5-5l6 1l4-6l4 2l1 5l-1 4l-2 7l6-4l8-1l-3-7l5-2l3 5M-14 753l-1 15l0 8l5 3l-2-6l-3-5l1-4l0-8l5-4l4 1l-3 6M-14 753l0 3M-15 731l2 3M-15 731l5 0l7 1l0-21l-7 20l-1 2l3 0l2 0l0 2l-3 0l2 4l2 2l3 5l-5-1l-3-4l5 0l1-4l-2-4M849 552l5-4l-2-5l-2-13l-4 8l-5-9l-6-4l-5-6l1-9l-10-7l-9 4l3-11l6-9l-7-18l-10 6l-6-8l-13-9l-18-4l2 13l-7 17l-2-10l-10-14l-9 13l-14-11M26 246l-25-11l-2 27l18 18l14-13l9 31l14 8M26 246l-13-35l14-18M26 246l21-12l-3-20l21-7l29 14l-1-32l-34-17M61 258l6-27l-23-17M61 258l-14-24l20-3l17 10l18 21l-22 21l0-19l22-2l-4 30l20 22l18 2M394 581l-4 7l4-1l6 2l3-3l3 1l-6 2l-2-5l5 2l5 1l-2 0M394 581l-7 3l-1-4l4-3l-2-5l-3 5M343 556l2 5l2 0l-4-5l6 0l-3-6l6 2l-3-5M347 561l-1 5l-1 6l4 5l-1 4l-5-4l0 7l1 6l2 5l4 0l-1-5l5-3l0 4l5-2l3-3l2 1M347 561l-1 5l-1 6l-2 5l6 0l-2-5l-2 0M347 561l2-5l3-4l1-6l3-3l-6-2M299 736l-4-1l-5-1l-2 4l-4-5l4 0l2 1l2-2l4 0l4 1l-1 3l4-1l3-1l1 5l2-3l2 5l4-4l3 3l5 0l2 3l5 0l-5 5l0-5l2-4l-4 1l0-4l-3 0l0-3l-5 0l-2 2l-2 6l4 1l1 5M299 736l-6 3l-3-5M299 736l0 3l-4 4l1 7l-5 3l7 2l-2-5M299 736l3 4l4 3M303 735l2-4l-5 2M303 735l-1 5l-3-1M382 230l-19-18l-28 31l-28 14l-5 25l-32 13l-26-26l17-15l27-12l-7 26l-37 1M64 624l-1 7l-1 3l-3 5l-2-4l-4-3l3-1l1 4l-4 1l0-4l-1-4l4 3l4 1l3-1l4 0l2-4l-5-3l-4-4l-2-4l-2-6l0 0l-1 6l-3 4l1 5l-1 3l4-2l-3-1l-5-1l4-4l3 2l-2 3l-5 3l0-4l-5 3l-5 1l-3 0l-5 1l-2-2M64 624l3 7l-5 3l-2 1l0-3l-3 3l3 0l-1 4l-6 0l0-3l-3-2l3-2l-4 0l3-4l-4 0l-5-1l-2 2l-3-1M64 624l-3 4l2 3M64 624l-3 1l-1-5l-2 3l-2 3l-1-4l3 1l3 2l0 3l-1 4l2 2M61 625l-5 1l2 3l-2 2M61 625l-3 4l3-1M723 321l33 15l-2-25l-4-31l29-7l18-23l12 21l30-24l35 22l43-18M723 321l11-22l-14-20l3 42M202 750l4 4l-7 3l0-5l3-2l7-2l-2-4l5 0l-3 4l-6-2l-5-3M202 750l-3-3l0 5M202 750l1-4l-4 1M675 736l5 2l2-4M675 736l-1-5l-9 0l-3 4l-6 0l-3 5l-3-3l-6-2l-3 4l-3 5l2 7l6 0l-2 10l-5-4l1-6M672 734l-5 0l2 7l-3-3l-3 5l-2 5l6 9l3-5l-2-5M763 556l-3 5l0 5M14 654l1 0l0-5l0-5l-1 2l1 3l0 0l0 5M14 654l1 5l-2 4l1 3l3 4l-2 2l-1 4l-3-3l-2 3l-2-2l4-1l0-2l2-1l-2-4l3 0l2-3l-3 0l-2-1l0 4l0 5l-4 3l-5-3l-5-1l-3 0l-5-1l-3 2l5-1l3 0l5-1l-2 1M773 811l26-1l25 2l16-2l-8-4l1-10l5-9l-11-2l6 11l-8-3l-8 5l-8-3l2 9l-10-10l-5 6l15 4l13 8l55 0l29-4l-3-13l-7-9l14-4l2-7l-12 0l6-6l-11-7l8-3l-1-7l-7-1l-11 2l-7-3l1 13l9-1l-3-9M773 811l6-8M773 811l-14 1l65 0l8-6l-8-3l9-7l12-4l-7-5l1-14l8-6l9 9l8 3l8 2l-7 6l-1-8l-8 9l9-1l6 7l1-13l-5-11l-3 9M773 811l-9-10M773 811l51 1l40-1l15 1l14-6l12-11l10 0l-3-13l-10-7l-5-13l0-11l8-5l4-5l7-4l-8 0l-2-5l7 0l0-22l6 23l-6-1l-5-21l-2 21l-4 0l-7 1l-12-1l5 4l6 5l1-8l3-23l-15 22l10-25M287 793l9-3l5 8l8 5l10 1l1 8l11-4l18 3l14 1l64 0l-44-2l-6-2l3-7l10-6l13-2l-5 7l-7 1l-1-6l-4-7l-1-9l-7 2l8 7l-5 4l-5-5l2-6l-8 1l-7-4l6-4l-1-8l-6-8l-5-2l-9 4l2-5l-1-5l-5 6l-3-4l-5 6l-5-2l6-5l4 1l-1-8l-3 7l-5 0l2-5l6-2l4-3l4-3l-4-2l-4 4l4 1l2 4l4-5l4 3l3 3l-6 0l3-3M287 793l7 3l7 2l-7 9l-10 2l-22 0l15-1l6-8l-9-1l-7 6l10 3M287 793l-4 7l1 9l36 3l43 0l20-2l-13 0M283 800l6 2l5 5l0-11l-5 6M283 800l-4-5l-8-2l-8 7l-1 9l-13 0l7-2l-2-6l1-7l-6 3l-10-1l6 8M396 485l-11-14l-4-18M598 639l3-5l-1-6l5 3l5-2l5-1l6 1l-3-1l-3 0l-2 0l-3 1l-2-2l-5-3l-3 4l-2 4l-4-2l1 5l-6-1l1-3l-6 0l3-7l3 3l-6 4l-2-4l-5 1l-3 0l-3 0l-2 1l-3-2l5 1M598 639l0-7M598 639l-3-4l-3 4l-3-5l-5-3l-5-2l-2-1M598 639l-6 0l2 5l1 5l-1 5l-2 5l3 6l1 4l3 3l3-3l6 2l5-1l-3-1l-5-2l3 4l2-2l5 1l-2 0M598 639l-3 5l-3-5M698 436l14-15l-10-11l-27 0l-4 14M85 544l0-11l-6 5l-2 8l-5 0l-2-3l-3 5l-6-2l-5 0l-5 2l5 3l-6 1l3 4l6 0l-4 5l-2-5l3-5l0-5l-4-2l-1 4M85 544l7 2l5 2l-3 2l5 1l5 1l-4 4l-3-3l2-2l2-3l-4 0l-1-4l7 1l7-4l-2 7l-4 4l-3-4l7 0l5-2l5 0l6 0l3-2l2-11l5 7l-2 6l6 3l1 3l3 4l-2 5l-1 5l1 6l-2 0l-2 5l6 0l3 4l0 4l3 3l4 1l5-2l3 0l2 0M85 544l-3 2l-5 0l-7-3l-6-1l10-9l-7-9l-4 7l1 11l-3 4l-3 2l-2-2l2-8l-7-2l1 8l6-6l3 8l1 6l-6-1l2-3l4 4l-3 4l-3-5M85 544l2 4l-5-2l-3-8M91 538l1 8l2 4l3 3l-6-1l3-2M91 538l0-9l1-10l-2-9l5-11l-13 2l-3-8M91 538l-6-5l-5-6l-6 6l0-11l-7 2l-4-6l3-10M87 776l-2-7l2-4l4-2l6-5l-4-3l3-6l-2-3l5 0l3-2M87 776l6-2l-2-4l0-7l7 1l-1-6l1-5l6-1l-3 4l-3-3l-2-4l-5 2l0-4l3-6l3-1l-1-4l0-3l-6-1l-1 3l-1-4l-8-20M87 776l4-6l-6-1l-5 0l-6 4l-4 3l-1 7l-3-7l-5-2l6-4l-5-1M87 776l-5-2l2 6l-3 4l7 0l-4-4M91 770l5 0l7-5l5 3l-1 10l7-6l1 6l4-3l7 1l7-6l-7-1l-1-6l6 0l6 0M91 770l-4-5l-4-6l-1 6l-7 1l4-5l-3-4l3-4l6 2l-2 4l-4 2M653 377l22 4M155 754l-2-6l-2 7l-2-5l-2 4l4 1l-7 3l6 5l-5 0l-3 3l-3 4l-5 7l-1-7l-2-7l-3-6l-5-7l-4-2l3-2l7-3l-6-1l-3-2M15 644l1-3l-1-3l3 1M266 738l-3-1l-4 0l4 6l3-5l2-4l2 3l-4 1l1 5l5-3l-2-3l3-3l-5 0l-4-2l-1 5M266 738l6 2l4-1l2-5l1 3l5 2l-2-4l-1-4l6-20M266 738l-2-6l-3-1l0 3l-2 3M267 743l-3 3l-3 8l5 7l5 6l0-9l4 4M264 594l1 6l-2 5l0 5l-1 6l-3 4l2 6l-6-2l4-4l5 1l4-1l3 4l-5 0l2-4l-3-4l-3 0l1-6l0 0l0-5l0 0l0 5l2 6l-1 5l-2-5M264 594l4 1l-1-5l4 1l-3 4l-3 5l-3 0l1 5M264 594l-4-2l-4-6l-3-2l-5 2l-3 1M264 594l3-4l1-4l3 5l3-7l-5-3l-3 0l-5-4l5 0l0 4l2 5l-8-2l-4 2l-1 5l-4-2l2-5l4-3l3 3l1-7l3-5M264 594l-5 1l-4-4l5 1l-1 3l3 5l2-6l0-6l4-2M267 590l-3-2l-4 4l0-8l4 4M145 664l-3 2l-4 2l1 3l5-1M698 628l3 0l3 1l2-2l5-3l4-4l5 6l-8 2l3-8M698 628l-2 0M13 211l-12 24l-13-17l11 44l-3 26l17 17l17 13l10-20l8-22M13 211l-27-20l2 27l25-7M-6 587l-3 0l-5 2l3-3l2 1M-6 587l3 0M-6 587l5-1l5-2l5 0l5-2l1-4l3-1l-1 5l-3 0M-6 587l-5-1M82 732l-3 3l-2 4l-2 2l-1 4l-3 3l-4-1l1 6l0 5l4 0l-4-5l-5 5l5 0l-1 5l-4 2l4 5l4-2l4-2l-1 7l-7-3l3 6l-4 0l-5 5l-5 3l5 7l-9-2l-6 1M81 735l-2 0l-5 0l-2 1l-5 1l-1-5l3-22l2 21l3-20l3 21l-2 0l-1-21M290 744l-2 5l-6 2l-2-6l-2 5l-4-2l6-3l4 2l2-4l-6-2l-5 3l1-5l3-2l3-2l2-2l-3-2l0-20l-10 20l-3 3M290 744l-6 3l-2 4l5 2l4 0M290 744l5-1l7 1M295 743l-2-4M11 673l-1 5l-1-2M14 676l3 0l2 2l-3 5l-1 5l-2-5l3 0l0-4l1-3l3-1l-2-2l2-2l3 0l-2-3M14 676l2 3l3-1l4-4l2-4l-2 1l0 3l5-3l5-1l-3-1M14 676l-1 4l3 3M14 676l-4 2l3 2l3-1M839 734l-2 8l-6 5l-8 3l-1 7l7-3l2-7l2-9l4 4l6 5l-1-5l6 0l-5-6l-6 6l5 0l1-6l3-4l5-25M839 734l-8-24M839 734l7-2l-11-25M839 734l4 2l6 1l-1 5l5-2l-2 7l-6 6l5 8l4 7l7-4l-7-11l4-6l5 9l-9-3l-9 0l-2-6l-6 4l-6-4l-3-5l-5 8l6 4l7 9l-4 7l-8-5l-2-8l-7-7l8 0l-3-9l6-5l7 2l6-4l-6-1l0 5l-5 4l-8-1l-7 0l-5 2l1 5l-9-4l8-1l1-5l4 3l3 4l7 5M846 732l5 0l-2 5l7-1l-3 4l-4-3l-3-5M437 624l-3 2l-4 1M439 631l3-4l5 1M325 401l23 4M325 401l16 21l12 9l-9 9l-3-18l24-1l-5-24l-12-9l8-27M325 401l0-19l23 6l-12-17M325 401l-11 8l-6 14l7 23l19 2l6 10M325 401l-25-1l5-16l20-2l-25-15l12-11l-15-12l-5-38l-22-11l-22 13l4 23l-23-7M325 401l23-13l23-16M325 401l-3 24l5 12M325 401l-20-17l-23-1M594 644l1 0l0 5l0 5l3 5l-3 6l-6 4l-7 2l-5-1l2-1l-5 1l-5-1l-5-2l-3 7l-3 4l-3 5l-3 0l1-7l5 2l-2-4l5 0l5-3l3-2l2 1l-5 1l-2-4l-5-3l1 4l4-1M595 644l0 5l0 0M232 532l-16 1l0 8l-6 4M232 532l-6-12l8 0l-6-9l-7-5l-5 7l3 12l-9 3l-6 4l-7 6l-4 5M553 605l0 5l2 6l-3 0l-3 4l-4 4l2 4l4 3l-4 3l0-6l3-3l-1-5l4 2l2-6l3 4l3 4l-6 2l-4 5l0 8l3 5l-1 5l0 5l-2 5l5 0l3 5l-3 2l0-7l-2-5l-1-5l0 0l1 5l-1 0M553 605l0 5l2 6M553 605l0 0l-1-5l3 0M553 605l-1-5l6-5l-9 0l2-4l-6 0l4-6l-2-4l6 3l3-7M635 654l1-5l-1-5l-2-5l3-4l-6-1l2-3l-6 0l-5-2l2-2l5-3l-2 7l4 3l3 5l6 0l-4 5l1 5l0 0M635 654l4 5l3 5l-4 4l3 2l-1 8l-5 5l1 5l0 5M635 654l2 0l2 5l-6 0l3 5l2 4l-1 4l-4 1l0-5l5 0M635 654l1-5l1 5M635 654l-2 5l-3 5l6 0l6 0l-1 6l6-3l5 2l-3 2l-2-4l-3 7l-4 4l-2 5l-2 5l-1-5l3 0M636 649l1-5l-2 0M20 675l-1 3M20 675l3-1M20 675l0-4l-3-1l1 3M20 675l3-4M294 548l5 4l1-6l5 4l6 2l4-4l-6-2l7-1M294 548l6-2l4 0l1 4l-6 2l3 4l3-6M294 548l3-6l7 4l5 0l2 6l-3 4l-6 0l3 5l-1 0l-2-5M-14 500l13-6l1-8l6-6l11-2M-14 500l0 11l6 6M-14 467l4-15l15-5l-18-4l-1 24l13 3l11 3l-3-10l-8 7l7 10l4-7M-14 467l11-5l8-15l10 12l2-9l11 6l16 1l-5-9l8-14l9-11l2 11l10-14l12 2M36 765l-5 1l4 4l-6 5l8 0l2-7l2-5l4 0l4-2l7 0l7-3l-1-5l6 0l3-5l2 6l6-1l4 6l5 1M36 765l3 3l-4 2l-5 1l-1 4l-7-3M197 418l-10-7l-11 12l12 5l-1-17l-2-16l10-10l13-20l-4-16l2-16l-2-22M197 418l26-4l-2-18l13-5l-17-9l-9-17l15-11l-19-5M197 418l-9 10l21-1l14-13l24 1l-15-10M665 803l-5 7l-7-8l-16 2M665 803l-9-8l-11-1l0-13l-7 3l-7-3l10-8l4 8M665 803l3 7l7-5l-1-13l7-2M665 803l9-11l11 5l7-5l8 1l1 13l-16 0M665 803l-12-1l3-7l9-1l0-7l-4-10l-7-10l11-1l10-3l-5-11l6-7l-7-4M665 803l0-9l9-2M665 803l10 2M9 756l-3 3l2 5l3 2M9 756l-3-2l-3 2M367 670l3 0l5 1l2-4l5-3l3-5l2-5l1-5l0 5l-1 0M367 670l5-1l5-2l4 2l5 1l1 4l5 4l4-4l-4 0l0 4l-5 1l0-5l-3 0l2-4l0-4l-4-2l6-2l-3-3l5 0l4 5l4 3l5 2l-3 2l-4 3l-2-4l0-6l-4 5l-4 1M479 754l7-5l2 9M479 754l2-7l4-6l5 0l7 3l-5 2l-7-5l1 8l7 2l-1-5l-2-5l-5-4l0 4M473 756l-2 8l8 4l-4 5l-10 0l-7 0l-9 5l-8 0l1-6l4-6M550 543l-6-10l11 0l11-5l-9-5l-1-11l10-5l-9-13l-3 10l-6 6l8 2l-11 11l10 10M550 543l-10-1l-7 4l-4-9l-5-6l3-10l9 1l-7-10l-7-6l-9-1l-7 8l6 7l7 5l8-4l6 8l-4 8l8-1l-4 10M556 548l-7-1l-2 5l-4-4l-3-6l-2 4M556 548l-4 2l-5 2l4 4l2 5l1 0l-3-5l5 0l-4-6l-1 6M556 548l3-4l5-4l5 6l-5 2l-8 0M-6 768l2-4M-6 768l-2 5l-4 0M100 659l-1 4M100 659l4 5l-2 3M100 659l-5 0M100 659l-2-5l0-5l0 0l0-5l0 5l-1 5M75 509l7-8l-8-1M561 733l6 6l-5 4l-7 4l2-5l3-4l-6 1l2-5l5-27l3 24l2-21M564 731l6 1l6-1l6-21l6 24l4 3l-2 5l-2-3l4-2l1-4l4 5l0-7l11-21l-4 22l9-21M25 548l-5-1l1 5l-3 0l-4 2l-2-3M25 548l-4 4l-3 4l-3 2l-3-2l2 5l1 5M25 545l1-7l5-6l9 0l7-2l6-7l10 8l11 2M25 545l8-6l11 3M-7 739l1-4l-2-2l-1 2l-1 3l-3-1M-7 739l-3 2l-4 0M-7 739l-3-1l0 3M-7 739l3-2l3-2l2 0l5 0l2 0l-1-2l3-2l-3-24M844 605l0 5l-1-5l-1-5M844 605l1-5l-2 5l0 5l-1 6l6 4l3 4l-7 1l2 7l-5-2l-6-6l4-4l9 0l-3-4l-3 0l2-6l-1 0M844 605l-1 0M845 600l3-5l-9 0M801 668l1-5l-6 1l3-5l3 4M801 668l0 6l-3-3l-2-7l-4 3l6 4l3-3l5 5M801 668l7-4M801 668l8 2l6 1M801 668l-5-4M798 671l-4 3l7 0l-3 4l8 0l-3 5l-3 0l2 5l0 0l0 5l0-5l1-5M308 461l-5-16l5-22l14 2l-7 21M292 514l8-4l-10-4l-7-6l-3 8l3 9M292 514l-2-8l-10 2l-5 10M292 514l7 6l9 9l7-13l-8 2l-8 2l-8 3l7 4l10 2l-7 7l9 5l-6 5l-3-10l-6-2l-5 9l7-1l-2-8l-11 3M745 30l59-45l-56-9l-3 54M689 18l-49-3l-50-43l-31 34l-63 11l-33-39l-77 16M689 18l17-46l42 4M10 678l-3-4l-2-3l6 0l-3-2l3-3l-3 0l-4 1l5-3l2-2l1-3l-3 5l2 2l2-3l-1-4M10 678l3 5l0-3M13 683l2 5l0 5M379 749l-3-3l4-5l0-5l3-5l4 1l9 0l-3 1l-6-1l4 4l3 4l5 0l1-4l5-4l5 0l-1 6l5-3l0-3l7 0l-5-22l-2 22l-4 0l1-21l3 21l5 2l1 3l4 2l3-4l-5 0l-1-3M379 749l-5 3l-6 3l0-5l-6 3l1-7l-5-3l1-4l-4 0M374 752l2-6l6-2l-2-3l5-2l2-4l0-3l13-22l1 21l-5 1l4-22M374 752l-3-6l-3-5l-5 5l1-6l-5-1l1-4M374 752l-6-2l3-4l5 0l-3-5l-2-7l3-2l-4 0l-4 0l-4 0l-4-1l1-21l-5 22l0-25M186 547l-4 3l-3-5l7 2l1 5l-5-2l1 6l4-4l4-4l-5-1M-15 768l0 22l7-1l-2-5M475 536l-6-4l-7-3l6-5l13 0M475 536l5 7l1 5l5-2l-6-3l2-11l-13 0l0 8l6-4l7-4l5 8l4 6l4-6l-5-8M475 536l-1 9l-4 2l-6 5l9-1l4 1l-3-7l7 3l-4 4l-4 4l-5 0l5-5l1-6l6-2l7-3l8 0l6 4l7-2l-8-10l11 4l6 8l-8 2l-1-4l9 2l1 8l4-4l-5-4M394 552l-4-5l-4-5l5-7l-7-5l-8 4l-9 5l-11 4M394 552l-4 4l-2 5l0 5l-1 6M394 552l-7-2l-5 2M394 552l4-4l5-2l5 0l6 0l1-4l-5-11l14-5l-3 10l-11-5l-8 8l-7 4l3-10l4 6l1 7l-8-3l-5 4l8 1l-3-5l-9-1l-10-8l3-10l-8 4l-8-6l-1-10M305 688l-2-5l2 5l0 0l0 5l0-5l0 5M305 688l1-5l3-5l-5-3l5-2l0 5l-5 1l-1 4l3 0l-2-4l0-4l2-4l3 2l4 1l-4 4M512 739l5-2l-2 6l5 3l8 2l5-1l-1-8l-5-5l-3-2l6-1l7 1l0 6l-5 1l7 2l1 7l-3 4l4 6l9 0l-1-6l0-5l2-5l-1-4l-3-5l-2-26l11 27M512 739l-4 0l1-5l4 0l0-3l7-24M511 743l-3-4l-4-1M304 679l-4-1l3 5M226 798l-5-4l-6 8l-1 6l6 3l-55 0M226 798l3-5l-6-5l-6 2l4 4l2-6M226 798l-4 6l7 2M222 804l-7-2l-2-7l-2-5l-7-2l3 7l6 0l4-5M222 804l-8 4l-7 0l8-6M222 804l-1-10l8-1l5-3l5 6l0-8M222 804l-2 7l-33-1l-2-7l-6-1l3 6l-7 0M78 467l-15-4M78 467l-2-9M78 467l-5 7l-10 2l-11-8l-8-11l12-12l2-11M269 753l7 3l7 1M269 753l-4-3l-1-4l-1-3M269 753l-3 8l-5-2l-7 2l-2 5l7 6l-4 3l-4-3l-6-4l-1 7l5 8l2-11l1-6l9 0l0-7M269 753l5-5l2 8l6-5M269 753l2 5l-5 3l-1 9l-6 2l2-6l4 4l3 5l1 8l-4 10l-2 7l-8-6l6-5l-6-2l8-4l-5-3l5-3l-4-5M271 758l5-2l4 7l3 5l7 6l6-1l-1 7l-5-6l-9 1l-5 2M742 355l1 19l-8 20l-10-17l18-3l10 19l-18 1M756 336l21-10l10 24M493 779l-10 1l-8-7l0 7l-5 4M493 779l2-7l-9-6l1 8l-8-6M493 779l-6-5l-12-1l-4-9l-4-5M183 628l4 2l3-3l1 4l-4-1l-4 3l4 1l0-4l2-6l1 3l3 0l5 1l-2 1l-5 2l2-4l-4-3l-4-4l-4 3l-5 2l2 3l3-5l0-4M183 628l0 5l-3-2l-2 4l3 1l0 5l-1 3l0 5l0 5l-2 5l2 2l3-2l4 5l-4 4l-3 2l3 3l0-5l2 4l0 6l-3 5l-1 5l-1 0l-1-5l0-6l4-4l2 5l4-4l-4-2l-2 1l-4 1l1-4l-3 1l-2-4l-1-3l3 0l3-3l1-3l-1-4l1 0l2 5l-2-1l-3 1l-4 5l-4 3l5 0l-3 2l-2-2l-5 2l-5 1l-6-1l3 1l-5 1l-5 3M183 628l-5 0l-3 3l1-6l-4-1l-4 3l4 1l3 3l3 4l-4-1l-4-3l2-3M183 628l6-4l-5 0l1-4M183 628l-2-5l-5-3M183 628l-3 3l-2-3M183 628l1-4l-3-1M15 688l0 0l0 5l0-5M99 738l2 3l3 0l1-4l1 2l4 2l4 1l-1 4l-5-2l2 4l3 3l6-3l-6-2l5-2l4 2l5 4M99 738l3-1l3 0l-2-3M99 738l1-5l-4 3l3 2l-2 2l-1 3l5-2l-4-1l-3-3l-2-3M590 678l5 1l-2 4l2 5l0 5M590 678l-3-4l4-2l-1 6l3 5l3 0l-1-4l0-4l4-3l0 6l-4 1M590 678l5-3l1-6l6 0l3-2l-4-3l1 5l1 5l-4 4l-4-3l-4-3l5-3l5-5l-6 1l-4 7l-2-3l-2 5l-5-3l2-4l5 2l0-5l-5 3l-5 2l3 2M479 413l14 6l11-11l11-18M479 413l-22-17l-16-12l-19 8l-5 25l-13-12l-26 6l-18-14M479 413l25-5l12 14l0 21l9 15l-9 10l-3 18l11-7l13-17l-4-20l-8 16l-1 21l-2 16l11 8l-4 9l11 2l8-4l-3-9l9 3M479 413l-14 12l16 11l12-17M479 413l2 23l2 19l13-3l-7 19l13-7l14 4l8 11l19-7l17 1l-9 6l6 15l-8-5l-4 12l12-7l16 2l-7 11l9 1l-8 11M469 532l-1-8M902 465l11-4l-1-13l6-15l-23 2l-15 8l16 10l6 12l-10 15l-7 17l17-9l5-14l5 10l5 9l-3 20l-5 9l8 1l-3 11M902 465l-17-8l3 13l4 10l10 8l-1 14l11 2l5-11l-15-5l10-4l7-11l-7-25l-16 5l17 8M742 628l6-1l-3 2l-3-1l-2 0l-3 0l-3 1l-2-2l5 1M110 671l3-2l-5-2l-4-3M110 671l-2-4l-3 1M110 671l6-1l-3-1l5 1l-2 0M535 766l10 0M535 766l-8-3l3 5l7 8l-8-1M535 766l6-8l-7 1l-7 4M535 766l6 5l-4 5l9 5l12 0l-5 6l9 3l3 12l9-1M535 766l-5 2M535 766l2 10l-9 6l4 5l-6 5l2-10l-6-4l0-9l-5 2l1-6l-5-6l-6-5l0 8l-7 3l8 8l-1-11l6-3M535 766l-1-7l-5-2l-5-4l-4 3M210 783l-6 5l2-8l-8 5l-4 5M204 788l-2 6l-4 5M204 788l-6-3l4 9M364 628l-2 1l-5 2l-3-7l-4-4l-2-4l-3 0l1-6l0-5l0 0l0 5l0 0M364 628l3 0l-5 1l-3-2l5 1M183 639l4-5l4-3M183 639l-2 5l-1 0l-2-5l3 2l0 3l-1 5l0 0l0 5M183 639l-2 2M183 639l-2-3l2-3M181 636l6-2M181 636l-1-5l-5 0l-5 0l-2-4l-6 1l-2 0l-6 1l-5 2l-3-3l6-1l5 1l-3 1l-2-2l-5-3l-4-4l-3 5l-4-1l3-5l1 6l2 3l4 0l-2-4l-4 1l-3 3l-1-4l-1-4l2-4l2 3l4 1l1 4l-2 4l3 3l1-3l1-4l-3 0M181 636l-3 3l0-4M52 620l3-1l5 1M55 622l0-3l3-3l-3 0l1-6l0-5l2-5l-3 0l1 5l0 0l0 5M252 766l-7 2l-8 3l-6-2l-5 4l-4-8l2-6l2-5l0-8l2-4l0-4l-1-3l-3-1l-5 3l-3 0M515 577l-2 4l5 6l2 4l5-2l-7-2l4-3l-4-3l-5 0l-4-4l-3 4l2 5l4 7l-2 7l2 5l0 0M515 577l-4-5l2 0l2 5M513 572l-1-6l-1-5l2 0l-1 5l0 0M570 756l6 0l5 6l-5 4l-5-3l-6 6M570 756l1 7l10-1M570 756l-6-2l0 7l-9 0l-2 6l3 6l-9 0l-6-2M576 756l9-4l0-7l5-3l7-4l-5-1M576 756l-6-6l7-3l8-2l3-6l-6-6l6 1l0 5l-6 1l-8 4M576 756l1-9l5-7l-5-4M576 756l-5 7l-7-2l-5-4l-9 1l5 3l4-4l0-6l3-8l7 1l5-4l-3-4l-1-4l-3 2M553 767l-6 6M111 397l6-12l-4-24M901 502l-8 11l-2-8M917 493l0 30l2-50M148 588l-6 2l-3-2l-1-5l-2-6l-3 4l1 6l5 1l-5 2l-3 1l-5-2l3-5l4-3l5 2l4 0l3-2l-5-2l2-2l-2-5l-4 5l4 2l-2 4l-4 4l-5-3l-5 2l2 3l-5-2l3-1l-6 1l3 0M148 588l1-4l-4-3M148 588l-6-1l-3 1l-1 5l2 3l1 4l2-5l-3 1l-5-1l-4-4l-1-3l-1-4M148 588l-1 3l5-2l2-3l3 1M142 587l3-2l-3-2l-2-4M142 587l-4-4M142 587l0-4M142 587l0 3l-2 6l-3 4l-2-5l-1-5l0-3l-4 1l-4 1M98 764l-2 6l4 3l3-8l-5-1l4-4l-5-2l4-2l1 4l1 5l5-5l0 8l-4 3l3 7l8 0l1 5l0 5l-1 6l-6-4l-8 2l-7-1l-1-7l5 2l1-5M181 742l3 5l5-2l2-4l5-1l4-1l1-4l1-3l-4 2l3 1l5 3l3-3l0 3l2 3l-4 3l2-6l-3 0l-6 1M181 742l-1-4l-3-2M181 742l-4 1l2 3M383 620l3-4l1 6l1 4l4-6M383 620l-4 4l2 6l3 2M384 625l-5-1l-4 3l-5 1l-3 0l5 1l-2-1M384 625l4 1l4 1l4 1l4-1l6 1l-3 1l-5 2l2-4l-4-3l0 4l2 3l-4 3l0-3l4 0M384 625l-3 5l-6-3l-3 2l5 2l4-1l1 4l-5-3l-2-4M672 581l3-4l4 4l-2 7l1 5l-5 2l-4-4l-4-2l-5-2l2-1l-5 1l-3 0l-5 2l-2-5l-5-3l-6 2l3-6l3 4l-1 7l-5 4l-4-2l4-7l-6-2l3-4l2-5l2 0l2 5l-6 0l4-5l-1-6l1-5l-4-5l6 0l-3-6l6 2l-2-5l7 1l-5 4l-3 4l-2 5l-2 0l1 5l0 0l-1 6M672 581l-5 3l-2 5l-3-3l5-2l2 7l8-3l-4 7l3 5l1 5l0 5l-1 6l6 4l4 4l-9 2l7 2l-6 4l-6-3l-3-5l4-4l9 0l-3-4l-3 0l2-6l-1-5l1 0l0 5l-1 0M672 581l7 0l4 5l5-2l-4-3l-1 5l-6 2l9 3l-8 2l-2 7l3 0l-1-7l4 2l-3 5l-2 5M672 581l0 5l-3 5M667 584l5 2l5 2M185 672l5-2l1-3l5 2l-3 2l-2-4l-4-3l-5-1l1 5l-4-1l1 3M185 672l2-4l-4 0M365 421l-1 17l-20 2l-10 8M365 421l13-10l11-17M365 421l17 3l1 13M690 671l3-2l-5-2l-2 7l-4 4l-5-3l2 8l-1 5l-1 0l0 5M690 671l-2-4l-4-3l-4 2l0-7l4 5l-2 7l0 7l-3 5l-3 0l1 5l1 5l0-5M690 671l6-1l-3-1l5 1l-2 0M690 671l-4 3l-4-3l-5 4l-3-3l-2-4l0-4l3-5l2-5l1-5l-1-5l1 0l0 5l0 5l-1 0M522 506l11-3l12-2l-5-18l3-11l8 7l-2 10l-9-6l11-4l16 7l-7-13l9-6l-7-13M82 512l0-11l7-7l-5-13l-11-7M82 512l8-2l8-2l2 12l11 0l-11 9l-9 0l9-9l6-7l8-1l4-13l7 5l0 13l5 9l13-1l-10-10l-8 2l-3 12l-11-9l3-8l-7-14l-6-5M152 489l-12 1l2 9l0 8l12-5l-7 12l-5-7M152 489l10-4M152 489l9 5M152 489l2 13l12-1l-6 8l8 5M152 489l-1-16l-7 7l-4 10l-7 9l-8 5M152 489l-10 10l-9 0l-15 0l-11-1l-9 10l8 5l5 7l-3 13l8 4l7 3l-5 6l-2-9l-6 4l3 5l3-9l6-8M152 489l-8-9M462 624l-4 3l6 3l-2-6M796 773l-11 0l-10 2l-7 2l-10-9l-1-10l5-9l-6-6l9 1l-2-6l7 3l6-2l1 10l-5-2l-7-3l-3 5l5 8l6 10l-6-4M796 773l12 3l10 5l-10 3l8 6l-7 5l-8-1l-9-2l-1-8l5-11M801 784l0 10l7-10l1 11M801 784l-10 0l-10 8l-2-8l12 0l-6-11l2-10l-14 4l2 8l4 9l-11 4l0-11l-14-2l4-7M801 784l7-8l12-4l-4-12l6-3M801 784l7 0l0-8l2-11l-1-8l-7 0l2-5l5-4l0 9l-7 8l6 11M887 536l3 10l1 6l-6 0l-3 4l2 5l1 0l0 5l-1-5l1 5l-1 6l4 5l-5 7l8-3l-4 8l-4-5l-4 3l8 2l8-5l5 2l5 1l6-1l2 3l5 2l-2-7l-5 2l-3 1l-3 0l-2 0l-3-1l-2 3l-3-5l-4-3l-3-4l-3-5l-1 0l1-6l0 6M887 536l8-6l0 12l5 4l-5 2l-5-2l-5 6l3 4l-6 0M139 658l1-4l-1-5l-1-5l2 0l-1-4l-1-3l-1-5l-4 2l3 5l3 1l-1 4M90 799l6 2l1-5l9 2l-5 6l-8 2l6 4l5-3M90 799l-7-2l2 9l8 0l-3-7l4-8l4-5l6-2l8 2l-3 4M90 799l-3-5M90 799l7-3l-3-5l-6-7l5 0M90 799l-5 7l-5-5l-3 10l-6-5l-1-9l4-4l6 8M408 773l0 6l-7 6l11 1l8 3l-1-7l4-10l4 13l9-1l3 5l-10 3l-6 4l-3-7l7-4l2 7l2 6l-9 8l-8 3l-31 1l-3-9l1-9M408 773l3-5l-4-8l-2 6l3 7l5 2l6 7M408 773l-7 3l-5 6l5 3l2 8l6 7l5 9l-17-2l1-7l10 7l1-7l2-8l6 10M411 768l2 7l10-3l-6-2l-3-8l5-5l-5-3l-7-1l-2-7l4-4l-4-1l4-3l5 1l4 2M411 768l6 2l7-4l11 4l-5-7l-6 3M248 629l-5-1l-6 1l-5 2l3-4l5 1l-3 1l-2-2l-5-3l-4 4l-1-4l-6 1l0 6l5 2l1 6l-2 5l-1 5l-1-5l1-4l1 4l-1 5l0 0l-1 5l1 4l3 1l-3 3l0-4l1-4l-2 0l-2 5l3-1M248 629l3-2l4-3l1 6l-5-3l-6 1l-2 0l-3 0M248 629l5 2l-2-4M248 629l-3-1M253 631l4 3l4 0l-5-4l-3 1M623 589l-2-3l-3 1l5 2l3-5l4-3l1 5l-5-2l-5 2l-6 1l3 0M623 589l5 2l-2-7M628 591l4-1l0 5l4-3l0-9l-3-6M628 591l4 4l3 5l1-8l2 8l-3 0l1 5l0 5l-1 6l5 4l1 9l1 5l-4-3l3-2l3-5l5 3l-2 4l-5 3l-6 1l2-4l-6 0l4 4l3 4l-2 5M628 591l3-5l1 4M697 488l12 6M697 488l-7 7l-14-3l0 9l14-6l-5-12l-9 9M697 488l-12-5l8-10l10 7l-6 8l-1 18l-2 8l10-3l-8-5l-6-11l-3 10l-11-4l5 13l-14-9l-2 9l-7 5l11 3l0 12l7-8l1 8l-4 5l9 0l-5-5M697 488l-4-15M703 480l12 0l6 9M91 737l-2-2l-3-1M91 737l3 0l0 4M427 674l1-3l3-3l6 2l0 4l-3-1l-3-5l0-5M427 674l-3-3l-4 0l-1-4l5 4M427 674l2 4l1-4l3 4M427 674l3 0M341 735l3 1M341 735l-5 1l-6 2l4-4l-4-2M341 735l1-4l-4-24M341 735l4-3l-3-1l-7 0l-7-20M341 735l-1 5l0 4l6 1l5 1l-1-6l4-5l4-4l-4 1l0 3l-6 3l2 2M341 735l-3-2l4-2M544 533l-4 9l9 5l3 3l7 2l-3 4l-2 5l-1 5l0-5M544 533l-8-11l-3 7l-9 2l-1 10l-12-5l13-5l-5-6l1-9M544 533l-11-4l4 7l7-3l1-10l12 0M537 536l3 6M0 370l5 20l16 4l9-8l16-5l11 9l-5 13l-10 17l-10-18l-15 4l4-12l11 8l20 1l16 3l-11-16l-16 3l-11-7l-16-13l-9 17M0 370l5-12l9 15l-14-3M455 669l5-2l4-3l4 0l0-5M455 669l-3 1l6 1l-3-2l-5 1l-6-1l3 1l-5 1M452 670l-2 0l-3 0M302 774l-5-7M302 774l-6-1M302 774l-7 6l7 2l6 4l3 6l-10 6l2 12l-19-1M302 774l0 8l-6 8l-1-10l-6 7l7 3l-2 6M302 774l4-5l6 2l-4 8l8 1l5 5l-3 4l5 5l7-1l4-4l-7-4l3 8l9-1l12-2l-10 8l-2-6l-5-3l-2-8l-2-6l-5 4l-2-9l-1-6l-2-5l-7-1l-5 4l-2 7l2 10l0 7l-5 3l-2 9M302 774l6 5l-6 3l1 7l8 3l7-3l-2 8l3 7l-6 4l7 4l-58-3l-30 2l-12 0l-13-3M156 447l10 5l3 12l10-11l10 3l8 10l16-5l-9 14l-1 13l12 1l-6 7l4 8l7-8l-5-7l-11-14l13 5M156 447l-9 4M379 731l4 0l4 4l4 1l4 0l4 4M379 731l-5 1l2 6l4 3l-7 0l-2 5l-8 0l-6 0l-1 4l-6 5M379 731l-4-21l8 21l-4-24l8 25l9-25M379 731l-9-20l0 21M509 556l6 0l-2-6l5 2l-3 4l-4 5M509 556l-3-4l-4-4l-5-2l-2-6l5-8l2-12l-8 5M515 556l-2 5M491 738l5-4l4-2l4 1M433 620l1 6l-3-3l-6-3l2 4l0 5l-4 0l-2-5l-5 3l-5 1l-3 0l-5 1l-3-2M433 620l-2 3l0-7l-2-6l0-5l2-5l2-5l4-4l5-2l5-2l3 0l2 0l6 2l2-5l-5 2l3 3l4 2l4-6l-6-1M434 626l1 5M434 626l-3 5l1 4l-6 4l-3-5l0-5l-7-2l-2 2l-3-1M6 759l0-5l-1-4l-4 1l-3-2l3-2M793 742l-5 2l-7-4l-5-1l3-4l-4-3l-3 3l-2 6l-5-7l8-24l-14 22l10-25M793 742l-2 6l-8-1l5-3M793 742l4-5l6 0l5 6l8 2l-7 3l6 2l-6 7l-5-5l-4-8l-7-2l-3-8l-6 1l3-4l-3-20l-2 20l-7 1l-2-22M793 742l-6-3l-6 1l-4 9l-3 5l7 3l2-10l-6 2l4 8l6-5l4-4l3 5l8 4M123 540l1 6l5 2l-2-4l-4-4M872 243l2 26l24 17l-2 37l-19-13l21-24l-38 6l-25 3l17 19l-22 14M872 243l8-26l36 7l-2-27l-34 20l-41-1M552 663l-1-4l3-5M552 663l-5 1l4-5M552 663l4-4M552 663l4 3l-4 5l1 5l-4 2l3 5l1 5l0 5l0-5l-1-5M552 663l-2 5l-3-4l-4 3l3 3l1-6M550 668l-4 2l6 1l-3 3l4 2l3-2l-4-3l-2-3l6-2l4 2l1 6l-4-4l-5 1M133 552l6 0l6 0l-3 4l-6 0l3-4l3-2l3 2l4-4l-4-2l0 6M133 552l5-3l4 1l3-4l-3-6l6 4l-3 2l-4 0l1 4M133 552l-4-4l3-2l1 6l3 4l2 5l1 5l0 0l-1 6M380 801l-4-5l0-9l10 1l6-1l-2 8M380 801l-10-1l-6-7l0 9l-9 6l8 4M380 801l11 0l6 6l-14 3l8-9M135 732l-1 3l0 5l-3-1l2 5l1-4l2 2l3 3l3-3l4 3l0-6l-4-3l-2-3M135 732l-6-1l-3-21l12 21l14-21M135 732l3-1l9-24M134 735l4 2l-4 3l-3-5l0 4M134 735l-3 0l-2-1l2-1M87 631l2-3l-4-1l4-3l5 2l-1-6l5 0l1-4M87 631l-2-4l-5 1l2 1l-5-1l-5 1l-5 2M87 631l5-1l2-4l-5 2M87 631l-5-2l3-2M87 631l4 3l3 2l1 3M370 711l4 21M370 711l-4 21M760 561l1 0M665 731l-4 0l-5 4l2 6l5 2l-1-8l4 3l1-4l-5 1l-4 6l-5-1l-7-1l-5 0l-5-2l4-4l1 6l3 7l2 5l4 4l11 5l-4-6l-2-9l-4 4l-5 2l-7 6l-2 7l4 9l11 2l9 2l-7 11l-9 6l-7-10l3-11l6-4M665 731l2 3l7-3M815 589l5-2l3 0l2 0M815 589l-3-5l-4-3l-5 6l9-3l5 2l-2 3l-5 2l-7-4l-2 4l-7 0l-2-7l-5 2l-3 1M820 587l-3-1l6 1l5-1l5-2l5 3l4-5l1 7l5 6l3-4l3-7l5 2l-3 3l5-2l3 0l3 0l5 2l2-5l5-3l3-4l2-5M58 623l-3-4l0-3M695 740l8-3l5-5l3 5l-1 7l-5 9l-7-8l-3-5l-4-4l3-4l4 4l-3 4M703 737l-5 8l7-1l-2-7l1-5l4 0l-1 7l4-2l1-6l3 4l6 1l5-1l7-1l-5-2l-5 0l9-22l-4 22l-2 3l4 3l-6 3l-3-5l-2-3l4-1l4-25l-8 26l-4 2M703 737l4 2l3 5l5 3M703 737l-5-1l-7 0M703 737l-4-5l-3-21M602 791l2 10l0 8M592 795l12 6l7 7M630 664l3 4l4 4l4-2l3 4l5-3l5-1l-2-1l5 1l-3 0M630 664l-4 3l-5 2l-6 1l3 0l5 1l-2-2l-3 1M636 664l3-5M636 664l-3 4l-7-1l-3 4l5 3l5-1l-1 5l3 5M263 800l4 5l-5 4l-6-2l7-7M156 739l1 3l7 0M389 600l-3 0l-3-5l9 0l4-4l4-2M389 600l-2 5l1 0M392 595l-2-7l6 3l-2-4M392 595l-6 5l1 5M299 634l1-4l-6 1l-5-2l-5-1l-5 1l-5 2l-5 3l-4-1l-4 1l0-4l-5 0l1 4l4 5l0-5M299 634l3-1l3 3l-3 3l-3-5l-5-3l2-3l5-3l-1 5l-4-2l1-4l3-4l5 3l-4 2l-1-5l3-4l2-6l0-5l0 0l0 5l1 6l-1 7l4 3l2 3l4 2l-4 3l0-5l2-5l-4-4l-4 3l-2-7l3 0l3 4l0 6l4-2l5 3l-7 2l-4 4l-2 3l3 3l-6 0l2 5l1 5l-1 5l-2 5l0 5l-2 3l3 2l-1-5l4 2l-3 3l3 2l0-5l0-3l-4 1l-3 0l1 3l-3 2l2-5l3-5l4 4l5 1l-5 2l5 3l-2 4M300 630l2 3l0 6M300 630l4-1l7 0M481 667l-2 3l0 4l-4-2l0 6M261 639l2 5l0 5l0 5l3 5l0 6l-4-3l4-3l3 5l5 3l-1 3l3 1l-5 3l2-4l-3-1l-4-4l3-1l1 5l4-2l2 4l3-2l-5-2M261 639l4-6l3-2l1 3l-3 5l-5 0M266 639l-3 5l0 5l0 0M266 639l-1-6l-4-3l0-4l5-2l2 3l3-3l1 4l2 3l-6 0l0-4l-4 2l2-5l-2-3l-3 5l-5 4M266 639l-2 5l-1 0M860 292l17 18l-4 26l23-13l21 17l-22 2l-5 20l-13 11l-22 9l-27-1l-15-31l-9-20l-29-27l2 23l-23-15l-20-12l16-19l2-29M860 292l14-23l-38 3l-27-1l-13 20l8 39l12-22l-20-17M860 292l-24-20M860 292l-8 22l0 26l-17 22l-7 19l-11 17M620 738l4 3l5-5l-4-5l-2-21l6 21l15-24M620 738l-1-6M620 738l-1 6l2 7l4 5l-3 7M101 792l-3-6M101 792l-4 4l4 8l-2 6l9 1l4-4l-6-9M305 649l0 0l-1-5l1 0l0 5l-1 5l1 0l3 5l-2 4M304 644l4-5l-3 5M81 12l45 8l-12-50l-33 42l-11 64l38-30M172 776l-3 4l1 6l5 2l6-6l7 6M169 780l-5 2l-10 3l0-6M169 780l-7-2l7-6l-10 0l-3-6l-5 2l-5 3M169 780l0-8M169 780l6 3l6-1l-3-8l-2-6l6 1l-4 5l-3 9l0 5l6 2l5 2M123 750l-1-4l7 1l4-3l6 1l-3 5l6-3l4-2l3-2M123 750l1 8l-7-4l2 6l6 3l-1-5l4-1M124 758l-5 2l0 7l7 2l-7 6M102 444l-10 3l4 13l-1 14l-11 7M92 447l-15-2l-9 4l-12-4l15-8M553 566l1 6M553 566l1-5M224 633l-1-4l-4 2l2 4l3-2l4 1l-1-3l-3 2M227 631l-1-3l-3 1l-4-4l-1-5l2-4l2-6l1 6l3 4l4 4l-5 0l-2 5l4 2l5 0l-4 3l-3 5l-3 1l-1-5l4 4M227 631l3-2l-4-1M137 683l-2-5l5 1l-1-3l-5-1l1-3l3-4M148 790l1-5l5 0l6 2l-4 5l4 3l5 5l-1 6l8-5l-7-1M148 790l8 2l-2-7l-6 5l-5-5l6-7l5-5l2-7l8-4l2-5l-4-2l-3-3l5-2l-5-5M143 785l6 0M143 785l0 7M143 785l-4-3l-5-5l-8-1l0-7l5-6l4-7l4 2l5 0l3-4l-4-2l-1-5l-3-2M642 664l5 3M93 620l5 4l-4 2l2 3l-4 1l4 3l0-4l3-2l3-2M717 665l5-6l-2-5l-2 0l1-5l1 5M717 665l-1 6l3 6l4 1l-2 5l-2-6l-4 1l2 5l2 5l0 5l0-5l0 0l2-5l-4 0l2-6l2-7l4-6l-3-5M717 665l-1-6l2-5M717 665l4 5l-5 1l-5 3l-5-3l-5-1l3-1l5-2l-3 4l-2-2l-6 1l3 0M678 113l-53-5l21-53l-52-29l46-11M646 55l-46 11l-34 16l28-56l-35-20M28 456l-11 12l-2-9l-8 4l-10-1l-7-10l-3-9M28 456l-13 3M28 456l-1-11l-10 5M28 456l11-8l-8-16l11-12l14 3l-4-20l-11-10l-9 9M510 633l-5-3l4-1l-5-5l1 6l-6-3l5-3l4-4l8 0l4 4l-2 7l0 3l-4 1l-4-2l-1-4l4 1l5 1l4 0l3-4l-5-3l-4 2l-3 4l1 5l-5 4l2 5l1 5l0 0M510 633l3-3l-3-5l-1 4M510 633l-4 1l-1-4l-3 1l-5-2l-6-1l-5 1l-5 2M510 633l-1 6l6 0l-2 5l-2 0M23 745l3-5l-4 1M29 742l4 1l-2 6l4-3l2-1l3 2l3 4l2-6l4-1l4 2l5 0l-1-3M29 742l3-3l-3 1l-1-3l-2 3l-1-4l-1-3l-3 2M29 742l-3-2l-4-2l-3-2l2-3l2-2l-9 2l-1 2l-3-1l0-3l-8-21l2 22l6-1l4 2l4 0M29 742l0-2l-3 0M17 750l7-1l2 5l0 4l-2 5M17 750l2-4M17 750l5 2l-4 4M503 747l-3-6l8-2l-1 7l-4 1l-1 5l-4-4l-5 3l1 6l8-5M503 747l-6-3l1 4l-6-2l-6 3l-5-2l-4 1l1-6l3 5M503 747l5-8M503 747l-5 1M172 732l5-1l-2 1M52 628l6 1l2 3M50 733l-1 4l3 3l-5 1l-4-1l0-3l2 1l4-1l-2 4l-2 4l-5 2l-4 4l-1-5l-2-3M675 577l3-5l0-6l-1-5l1 0l-3-5l-3-4l4-1l-3-5l-9-6l3 8l-5-2l-5 0l-1-7l-4 7M675 577l2-5l1 0l2 5l4 4l-5 0l-7 5M675 577l5 0l-1 4M57 572l-2 0l1-6l0 0l-1-5l1 5M57 572l2 5l-1 4l4 0l1 6l1 4l5-2l3-3l2 1M57 572l-1-6l-1 6l-2 5l5 4l2 6l-1 4l5 0l-4 4l-2 5l-2-5l3-4M56 566l1-5l2-5M508 773l10-8M508 773l9-2l5 7l-9 2l-5-7M343 787l8 3l0-8l-6-7l0-8l6 6l5-2l2 10l-7-8l-6 2l-8-4l-7-7l-8 0l4-7l5-1l-1 8M343 787l1-6l7 1l7 6l-1 9l7-4l-6-5l6-4l-1-6l0-7l-7 0l3-5l3-8l-4 3l-1-5l-1-6l6 3M343 787l-4 5l-1-8l6-3M343 787l8-5l0-9l2-8l-5-5l-4-4l0-7l-3 3M343 787l-5-3l-4 5M339 792l-8 8l0 8l8 0l2-10l9 2l1-10M129 83l-59-7l-23 20l-36-25M29 734l2-2l4 0l3-21M29 734l-5-1l-1-2l3 0l2-21M29 734l-3-3l3 0l2 1M574 740l-7-1M574 740l8 0l0-7l0-23l15 21l-10-24M421 752l-2 5l6 0l-6 6l0-6M421 752l3-4l-2-5M421 752l5 0l-1 5l5 6l10 2l6-6l-2-9l-5 4l-7-2l4-4l6-2l2 4l-8-2l-7-1l3 5l-7 5l10 2l4-5M-8 773l-2 6M-1 669l3 2l2-4l-5 2M171 735l-1 3l-3 1l-4-1l2-2l-3-4M212 584l4-3l6-1l-3-3l-3 4l-1 6l3 4l-4 0l-5-2l3-5l-5 2l-3 1l5 2l-2-3l-6 1l-3 0l-5 2l-2-5l-5 2l3 5l-4 4l-5-4l4-1l2-4l1-5l-4-4l-4 4l3 4l1-3l-4-1l-3 5l0 6l0 3M212 584l3 3l-6 2M111 520l14-3M773 767l1-13M773 767l8-10l6 6l0-11l8 10l-1-9l6-9l3-7l6 1l-1-4l-7-2l9-25M773 767l12 6l-6 11l-11-7l5-10M302 282l17 36l-27-12M302 282l-21-14l-11 27l4 27l-22 9l21 10M283 788l5-7l7-1M288 781l1 6M288 781l-7-6l2-7l-7-1M725 664l1 5l6 2M444 586l-2 3l-3-5l5 2l3 1M444 586l6 1l5-1l-3 1M110 741l-1-3l-2-3l5 0l3-1l2-2l-1-21l-2 20l-4-21l-5 22l1-25l-10 26l-2 4l2-1M110 741l-2 3M110 741l3 5l0 5l-1 6l-5-5l-1 4l-2-4M110 741l3-3l1 4M113 738l-4 0M113 738l-1-3l4 2l5 0l-2-3l3-1l3 0l4 1l-1 4l-3 0l4 5M113 738l3 2M113 738l3-1l3-3l-4 0l-1-3M628 674l-2-7M628 674l5-6M628 674l4 4l8 0l-3-6l-5 6M139 688l0 5M376 787l-6-5l-1-8l4-5l-5-3l-9 0l-6-1l5-4l1 5l4 5l5-5M376 787l-6 1l6 8M433 588l0 7l-4 0l2 5l-4 0l2 5l0 0l0 5M433 588l6-4l-2 7l-4-3l2-7l-4 2l-2 4l-3-3l0-7l2-5l1-6l0 0l-1 6l4 5l3 4l4 3M433 588l-4-1l-5 1l2-4l-3-3l3-4l6 0l-2-5l-2 0M433 588l-5 3l5 4M433 588l-2-5l-5-6M429 587l-1 4l-4-3l-5-4l4-3M416 627l3 4l4 3l4-1l0-4M419 631l4-2l4-5l4-1M419 631l-5-2l-6-1l-2 0M595 501l-1-10l4-10l9 16l-12 4l-10-4l-4-20l13 14l-9 6l-12-1l8-19l1-14l-13 4l12 10l-14 9l-10 8M595 501l5 7l7 8M595 501l-8 7l-2-11l-10 11l-2-12l-6-10l2-19M607 497l12 9l12-13l-3-11l11 5l14-2l-7 12l-9 6l-6-10l-15-5l4-14l-8-12l-11-8l-2-18l13-9l14 4l15-4l2-16l-15-5l-2 25M607 497l9-9M607 497l-13-6M607 497l-7 11l-8 8M-4 737l1-5l3 0l-1 3l1 3l3 0l-2-3l1-2l2-1l2 3l1-2l-3-1l-7-21l3 21l4 0M-4 737l2 4l2-3l1-3M-4 737l-2-2M-4 737l4 1M547 733l-6-23l-4 22l-2-21l-5 20l-3 3l-2 4l2 5l-5-2l0-6l3 3l7 1M552 734l-2 4l-6 2l-5 1l-6 6l4 5l-9-4l-4 5l-6-2M552 734l-7-27M552 734l2 5l-3 3l6 0l5 1M319 318l-22 26l3 23l5 17M319 318l34 9l16 18M274 584l2 5l-5 2M182 769l8-2l1-5l6-2l2-3M182 769l-2-9l-4 8M178 774l8 5l6 3l4-7l-1-5l-5-3l9-2l2 5M844 610l1 6M447 735l-3 2l0-4l-4 0l4 4l-5 5l1-4M447 735l5-1l-5-2l5-21l4 21l1 3M447 735l-3-2l3-1l0-21M447 735l0-3l-5-22M446 740l-7 2l-7 2l2-6l5 4l-3 6M556 666l1 4l3-2M810 765l6-5l-7-3M65 750l-4-2l3-2l3 1l1-4l2-2l-3-2l-2 1l2-3l0 2l1 4l-3-3l-1 6l-4-4l-2-2l-5-3l-1 3M65 750l-6 0l-1 4l-5 4l-4 3l7 5l-6 6l7 0l-1-6l0-5l-3-3l1-5l-4 2l-3-4M61 748l-2 2l3 3M61 748l-3-2l2-4l1 6M805 639l3-5l4-3l-3-3l-6-2l-6 3l-5 2l-5-2l2-2l3 4l4 3l1-5l1-9l5 6l7-2l-4-4l-3-4l-3 0l2-6l0 0l0-5l0 5M805 639l-3-7l7-4l-1 6l-6-2l1-6l3-6l-6-4l-2 4l-4 4l3 5l5 3l-6 2l3 5l2 5l1 5l-1 5l4 5l-6 0l2-5l2 0l-1-5l0 0l1 5l2 5M805 639l-2 5l-4-5l6 0M12 639l3-1l2-4l1-4l3 4l1-2l2-4M12 639l4 2M12 639l-3-5l2-2l1-4l-3 1M530 628l-3 1l-5 2l-4 3l-3 5M530 628l3 0l-6 1l-2-2l5 1M533 628l5 1l-3-1l-2 0M138 731l-1 3M138 731l-7-24M138 731l-9 0l-8-20M491 587l6-1l5-2l6 2M491 587l-5-1l-3 3M488 587l-2-1l-5-2l-5 4l-4-5l-6 2l6 4l-5 1M318 740l-3 2l0-5l-2-2l-4-3l4-25l-8 24l-8-24M268 775l-5 2l6 6l-6 0l-2 6M181 596l4-1l-3 5l-2 5M387 630l5-3l2 4l-5 4l-4 4l3 5l0 5l0 0l0 5l-3 5M387 630l1-4M387 630l7 1l2-3M458 792l-3 9l-8 2l1 8M458 792l-8 4l-3-12l2-6l-7-6l-2-7l-5-6l11 0M458 792l-6-4l-2 8l-8 4l-11 6l0-8l11 2l5 3l-6 4M-11 799l-4-9l4 3l3-4l3 5l-6-1M767 634l-4 5l-2-4l-7-1l-4-3M761 635l-3 4l-4-5M711 591l4-5l-6-2l4-3l7 2l-4-6l6 0M711 591l8 1l-4 3l-4-4l-2-7l-5 2l-3 1l5 2l5 2M719 592l-2 8l-2-5M280 741l0 4M280 741l4-2M280 741l-1-4M280 741l-4-2l-1-6l3 1M262 600l1 5M58 811l24 0l-13 0M129 667l-5 2l-3 1l5 1l5-1l1-3l3 0l0 5l-4-2l0 4l3 1l1 3l4-2l2-2l-2-3l0 5l-4-4l4-1M129 667l3 0l1-3M129 667l-3 4l-2-2l-6 1l3 0M126 671l5 3l4 4M296 790l7-1M316 797l-7 6l2-11l5 5l7-3l4-9l5-4l7-4l-1 7l-6-3l-7-2l-6-6M316 797l9 5l6 6M119 407l12-9l-14-13M644 624l3 7l-6-2l-5-3l2 5M644 624l-4-4l-2-4l-2-6l0 0l0-5l0 5l-1 6l-3 4l8 0l-4 6l-4 5l-4-7l8 2l-4-6l-4 4M647 631l5-2l5-1l5 1l3-2l7 2l-5 2l-2-4l4-3l8 2l-5 3l0 5l3 5l2 5M787 752l7 1l10-1M787 752l-4-5l-2-7l3-5l-2-4l-3 4l-7 0M740 752l-1-8l0-5l3-4l3-3l3-22l4 23M740 752l10 2l6-4M748 746l0-5l2-4M748 746l-9-2l-6 7M748 746l2 8l-3 11M558 231l28 7l26-18l-30-25l-24 36l-27 6l-28 15l8-33l20 18l13 23l27 10l15-32l-4-43l15-24l43-13l31 22M558 231l-7-29l-20 35M582 195l-31 7l-40 17M804 475l-11 9l-16 7l-2 10M804 475l1 15l-6 9l-4 10l-6-8M804 475l17 12l9-5l-1 15l-8 6M271 674l-3 4l-4-4l-6 0l-2-5l-1 5M271 674l-1-5l-3 4l-3 1l-5 4l3 5l1 5l0 5M271 674l-4-1l1 5l-3 5l-3 0l1-3l-4-2M267 673l-1-4l0-4l-4 1l0-4l-1-3l2-5l1 0l2 5l-5 0l-4 5l5-2M150 763l1 5l-6-5l-6-5M16 593l-2 3l2 4l3-5l-5 1l-3-4l1-5l-4 1l-1 3l-2-4l-3 2M16 593l4-2l-6-1l2 3l3 2l1-4l3 0l1-3l1-4l3 5l-4-1l-3-3l-4-3l4-1l-3-4l-3-5l0-6l-1-5l1-3l-1-4l-2 2M16 593l-5-1l-4-1M14 590l-3 2l-1 3l3 5l2 5M14 590l5-2l-4-2M734 527l3 8M800 583l-4-2l1 6l-5-3M800 583l5-6M800 583l3 4l-6 0l-3 4l-5-2l-2-3l-6 1l-5-1l2 1M800 583l-3 4l4 4l-3 4l-4-4M856 788l0-12l5-12l2-8l9-5l-2 6l9-7l10-3l-3-4l-6-8l0 9l9 3M856 788l-1 9l-11 3l-11-4M856 788l-11-6l2-15l7 1l2 8l11-6l5-7l9 10l5 10l-14-2M856 788l-11 4l10 5l10-10l-1 13l7-6l11-4l-4 10l1 12l38-2l1-23l0-46l-2-4l3-4l-1-26M845 792l0-10l-7 5M845 792l-1 8l-12 6M272 442l14-5M549 674l-3-4l-5 1l2-4l-5 2l-3 1l6 1l-3-2l-5 1l-6-1l3 1l-5 1M549 674l-4 0l1-4M549 674l0 4l-4-4l-4-3M709 667l2 7l4 4l1-7M231 735l-4 0l-4 2l-4 0l2-5M230 732l5-22l-12 22l7-25M601 664l-3-5l-6 0l-3 5l6 1M1 769l3 4l6-3M357 548l-5 4M357 548l-4-2M512 566l-1 6M571 792l12 1l5-11l-4-7l5-9l-6 3l-10 4l2 13M571 792l-6 10l-6 6l0-9l-6-12l-12 4l-3-8l-6 4M799 810l-3-10l-6 7M824 812l0-9l-13 1M516 422l6-14l16 18l-22-4l17 20l-17 1M538 426l9 17l2 14M538 426l20 10l-11 7l-14-1l5-16M210 731l-3 1l2 3l-4 0l2-3l-3-1l-6-20l-5 20l0-21M210 731l3 0l3 0l-3 3l0-3l-4-21l7 21l2 2l-5 1M210 731l-6 0l-2 1l3 3l-4 0M210 731l-1-21M210 731l-6-20l0 20l1 4l1 3l1 6l-4 2l0-5l4 3M170 667l-2 4l-3-2l-3 1l6 1l4-2l0 5l5-3l-5-2M325 802l-6 2M325 802l-5 10l29-1l1-11l7-3l-2 11l-6 3l-10-3l11-8l5 8M325 802l-2-8l-2-9l6 0l-2-6l-9 1M325 802l6-2l-1-7M716 630l-4-2l-1-4M481 436l15 16l6 12M481 436l-14 17l8 17l8-15M74 735l3-3M74 735l1-3M74 735l-2 3l-5 1M72 738l0-2M72 738l-5-1M72 738l3 3l4 1M601 552l-4-6l8 2l5-2l-1-9l-4-7l-1 11l1 7l-4 4l-3 4l-3 5l0 5l0 0l-1 6l-2 5l6 0l-4-5l1 0l3 5l3 4l-8 5l7 1l-2 4l1 4l-4-1l1 6l3-5l4-4l-5 0l-6 0l3 3l-5 1l2-4l-3-5l-5-2l5-3l3-4l1 4l8 0M601 552l-8-1l5 5l-6 0l3 5l-1 0l1 5l-1 6M48 674l4 4l3 5l2-4l-2-2l-4-2M48 671l1-3l4-3l2-2l4 2l1 3M577 517l-4 7l-7 4l7 6l9-1l4 10l-7 3l-5 0l4-7l4-6l9 1l14-4l13 0l-2-11l13-11l-3 13l-8 9l-9 7l-5 4l6 5l5 0l-6-9l7 0l-1 9l6 0l-5-9l10-7l-8 0l-2 7l9 6l8 4l-3 5l-4-4l-1-5l11 0l6-7M577 517l6 5l-1 11l10-6l-1 7M577 517l-2-9l12 0l13 0l19-2M50 495l5-10M50 495l-10 5l8 3l6 7l-1 13l10-5l11 4l6 5l11 2l-8-8M307 257l7-27l-28-32M307 257l-26 11l-20-14l4-28M315 516l11 3l2 11l-9-1l-4-13l8-8l3-8l6 8l12 5l-7-12l-5 7l4 8M315 516l-6-6l-12-10M323 508l-10-8l-4 10l-2 8M323 508l3 11l6-11l-9 0l-14 2l-9 0l-1 10l-1 7l-3 7M413 747l1-8l6-2l2-2l3-3l-9-22M413 747l-4-5l0-4l-4-2l0 5M413 747l-6 6l0 7M50 581l3-4l1 5l-4-1l-4 3l-5 2l-3 1l5 2l3-5l6 1l2 4l2 6l-4 0l3 5l1-5M50 581l2 4l2-3M52 585l4 1l4 1l3 0l4-3l-5-3l-3-4l-6 0M52 585l-4 2l-2-3M641 773l-11-3M50 634l-4-3l-3-4M50 634l3 5l4-4M50 634l-1-2l-1-4l-2 3l-5-2l-6-1l-2 0M49 632l-3-1M657 587l3 0M657 587l-5-1l-3 3l-5 2l-3-3l-5-5l-5 3M652 586l2 1M652 586l-5-2l-6 4l-1 7l-4-3M281 628l-2 1l-3-2l-5-3M281 628l3 0l3 0l5-1l-3 2l-2-1M281 628l-5-1l-2 4M276 627l-4 1l-4 3l-4-2l-3-3M159 760l3-5l6-2l5 0l0 6l-7-2M159 760l5 2l5-1l5 3l6-4l2-5l-5 1l3 4l-7-1l1 5M164 762l-2-7l2-5l2-4l3-3l4 1l4 4l5 2M719 566l1 6l-1-6l1-5l-1 5l0 0M720 561l2-5l-4-7l-5-7l6-7l-8-4l0-11M617 760l-3-8l-5-3l5-6l-6 1l-2-5l2-6l4-1l-3 5l-3 2l-4-3l2-4l4 1l-6 3l-5 2l4 6l5-5M617 760l-10-3l7-5l5-8l6 2l6-4l-7-1l-5 3l-2-8l-8 1l5 6l5 1M617 760l8-4l5-3l9 4l-5-8l4-5l6 2l5-1l2 4M833 631l8-1l3-5l4-5M833 631l2-7l-4 3l2 4l-5-2l-5-1l-6 1l-5 2l3-4l-6 1l1-4l5 3l5 1l-3 1l-2-2M833 631l4 3l4-4l0 9l2 5l0 5l0 5l-2 5l2 5l4 4l0 5l-4-2l0-7l3-5l3 5l-2 4l4 6M837 634l4 5l5-7l0 7l-3 5l0 5l0 0M726 669l-5 1M342 672l-2-3l3-4l4-1l-4-5l4-5l2 5l-2 5l-1 4l6 0l-2 5l0 5l-4-5l4 0l4 1M342 672l4-4l-3-3l-3-1l0 5l-4-2l-3 4l7-2l6-1l0 5l0 5l4 0M342 672l4 1l-4 5l4 0M342 672l-4 2l2-5M342 672l0 6l-4-4l-5-3l-2-2l-3 1l5 1M584 356l12-31M584 356l-5 20l25-6M64 670l3-3M64 670l-6 1l0 3l2 4l-2 5l-3 0l1 5l0 5M64 670l-1-3l-1-3l-3 1l0-6l-3-2l1-3l-1-5l1-5l-1-3l-3-2l2 5l2 0M810 591l-9 0l5 4l-8 0l2 5l2 5l0 0l0 5l-2 6M810 591l-4 4l-6 5l2 5l1-5l3-5M810 591l2-7M256 513l12-12l4-11M268 501l15-1M268 501l-2 15l14-8l-12-7l-12-1M268 501l-9-13M390 588l-3-4M352 634l1-3l4 0l-5-3l-3-4l1-4l-4 3l3 1l-6 2l-1-6l4 3l-1-7M879 552l-5-4l6-1l-1 5M880 547l5 5M206 738l-3 3M694 763l-3 11l-9-1l-10-2l-7-5l2-9l-6 3l-7 7M879 581l0 6l-5-3l-5 2l3 3l5 2l2-4l1 8l9 0l-3 5l-1 5l0 5l1 6l3 4l-8 6l-1-6l9 0l4 4l5 3l5 1l-3 1l-2-2l-3 4l-4 3l-1-5l3-5l2 7l5-2l5-1l6 1l5 2l2-7l-5 3l3 4M879 581l4 3l-1-7l6 0M874 584l3 7l3 4l7-6l6 2l2-7M166 793l-6 2M468 639l3 5l2-5l-5 0M472 635l1-4M733 734l6-1l6-1l-3-21l-3 22l0 6l-5 2l-1-7M118 744l5-2l-2-5l4 1l-2-3l6-1l0-3l-4 2l-2 2M894 741l-8 2l2-7M894 741l4 4l-1 6l-8 11l8 0l-6 13l-2-13l-8 11l10 2l7 11l-5 7l0 13l15 2l7-13l3-8l1-54l-1 8M216 581l3 4l5 3l-1-4l-1-4l-3 5l-1 6l0 4l3-2l2 3l0 4l-1 5l0 5l0 0l0-5l0 5l1 6l-3 0l3 6l-4 3l-5-1l4-4l5 2l2 2l1-4l-3 2l0-6M219 585l-4 2l-1 4l4 4l5 1l3-1l-3 5l-3 0l3-4M219 585l4-1l5-3M470 566l0-5l0 5M344 756l-3 5l-5-3M241 512l-4-10l9 1M473 659l-5 5M103 631l-3 3l-4-1l-5 1M103 631l4-3l-3 0l-5-1l-5-1M103 631l1-3l-4 3l-4-2M103 631l-3 0l0 3l0 5l-2 1M107 628l3-1l-4-3M428 644l-2-5l1-6l-4-4M428 644l1 5l-1 5l2 0l2 5M428 644l1 5l0 0M428 644l2 0l-1 5l-1 5M428 644l4-5l-6 0M432 639l-2 5M859 540l4-7l-5-6l6-9l-2-15l-11 8l-10-8l1 16M859 540l-9-10l-9-1M50 755l-1 6M50 755l1-5l4-1l3 5M50 755l3 3M204 628l5-1l5-3l-2 7l-3-4l-2 2l-6-1l-5 1l-3-2M204 628l-3 0l-3 0M204 628l3 1l5 2l4 3l3-3l-3-2l3-4M305 623l-1 6l-3-4l-4-1l-5 3l2 4M662 735l-1-4l-1-20M231 763l-9 2l-8-2l2 5M475 667l0 5l4-2l4 1M475 667l4 3M104 581l-4 3l-2-5M100 584l-2 3l5 2l-3 1M100 584l-4-2M100 584l5 2l-2 3l-1 6l-3 5l-3 0l-3-5l-4-4l-1-4l-3 2M100 584l3 5l3 2l-4 4M265 633l-1-4l-3 1M909 522l-12-1l-4-8l11 2l10-2l-2-9l-8 11l-7 6l9 9l3-8M914 513l3 10l-1 18M263 654l0-5l1 5M63 786l-2 5l7 1l2 5M63 786l6-3M63 786l-2-5l-4-4l0-5l-3 7l-5 2M63 786l-7-2l-4 5l3 7l6-1M63 786l8 2l3 5l-6-1l3-4M63 786l5 6M646 497l-15-4l8-6l7 10M126 782l0-6M126 782l2 6l-6 0l4-6M211 741l1 3M385 779l-2-6l3-5l-8-2l-1 9l8 4l7 8l4-5l1-10l8-6l-4 10l7 3M392 787l11 6l8-1l9-3l9 3l7-8l5-6M392 787l9-2l10 7M548 118l-38 14l13-36M428 448l-7-15l16-13l-20-3l4 16M428 448l19 7M428 448l-1 14l13 2l-15 12l18 5l-9 6l3 9l-10-1l10 14M427 600l2-5l-4 0l-1-7l-3 3l-5-2l-5-2l3-1l2 3l3-5l7 0l5-1l1-6M427 600l-2-5l-4-4l-2-7l-5 2l-6 1l3 0M427 600l2 5l0 5M337 544l2 3l5-1M865 740l-7 2l-7 5M865 740l1-7l10-1l-4-22l11 22l-6-25M866 733l-4 2l-1-4l0-20M866 733l4 1M866 733l-5-2l-5-21M866 733l1-22l9 21M383 773l-6 2l1 6M719 778l-12 2l-3-6l8-1l7 5l4 9l-5 12l-4-13l5-8M18 577l-3-2l0 3M15 575l0-3l-1 0M806 620l-8 0M107 498l1-12l0-13l9 2l-2-14l-10-4M107 498l-1 15M25 334l5-16l11 22l6 21M25 334l16 6l8-19l-9-23l-27 7l4-25l23 18l26-5M25 334l-3 15l9 20l15 12l-5 12M775 540l6 6l6 0l5 2l4 4l5-2l4 6l-2 5l-1 5l-1-5l2 0l-4-5l6 0l3-4l-5-7l9 3l5-2l4-11l6-4l-6-7l-8-5l-3 11M775 540l2-13l4 10l6 9l5-2l8-4l-4 6l7-1l-3-5l6-2l-3 7l9-3l9-7M775 540l6-3l6-8l7 7l-2 8l4 2l-4 2l0-4l-11-7M458 773l-1-10l-2-6l0-7l-2-5l6 2l2 4l-6-1l-4 3M179 683l3 0l-2 5l0 5l1-5l0 5M179 683l-3-5l3-1l-3-2l1-4l2-4l-4 0l2-3l1-5M179 683l3-4l-3-2l0-3l-3 1l-4-1l-4-3M182 679l0 4M182 679l3-1M182 679l1-6M571 270l-30 15l13 20l-25 3l19 20l-20 1l-23 7l-19-23l18-12l24 28l1-21l-25-7l1 35M835 674l4-4l4-6M835 674l4 4l3 5l1 5l0 5l1-5l-1 0l2-5l-1 5l0 5M839 670l-2-6l4-5l5 0l-2-5l-3 5M839 670l-6-3M839 670l0 8l4-7l4-3l7-1M839 670l4 1l1 5l3-3M739 744l-5-3l-4 5M483 627l3 2l2-1l3 0l3 0l3 1l2-2l-5 1M483 627l5 1M196 586l-3 3l-4 2l2-7l5 2l2 1M196 586l5 1l3 0M191 584l-4-3l-4 1M729 548l-4 4l-7-3l3-4l-2-10M729 548l-8-3l10-6l3 7M895 530l-7-9l5-8l-10 2M895 530l6 8l5-8l-11 0l-14 1l-8 2l3-12l-12-3M895 530l2-9l-9 0l-7 10l-5-10l-8-12l-6-6l10-7l13 1M768 521l12-1l8-4l7-7l3 14l15-4l8-6l-9-6l-6 7l-11-5M780 520l-3 7l10 2l-7-9l-1-10M382 634l3 5l5 0l-2 5l0 5M385 639l0-4M385 639l2 5l1 5M213 504l-9 3l12 6l-3-9l8 2l-1-10l10 1l-9 9M481 732l0 6M481 732l-3 3l-3-4l4-24l-9 24l-2 2M481 732l6 0l-2 5l6-3l9-2M481 732l4 5M481 732l-6-1l-5 0l-6 1l-6-22l-2 22l-4 2M625 756l4 6l10-5M414 362l-14-16l21-7l-7 23M737 457l-13-8M737 457l4 16l9 15l10-14l9-7l12 14M70 351l17 15l-23 11M87 366l-3 14l-2 15M883 616l2-6l0 0l0-5l-2-5l3 0M883 616l-3 4l6-4l-3 0M880 620l-3 4l4 2l5 2l7-4M432 752l3 7l-5 4M432 752l-6 0l3-5l-5 1l2 4M821 487l4-16l7-16M821 487l-16 3M821 487l8 10l2 13l10-7l9-12M882 671l7 2l-5 2l-4 3l3 5l1-8l-2-4l-3-7l3-5l3-5l0-5l0 0l0 5l-1 0l1-5l0-5l0 5M882 671l-8-4l5-3l5 2l-2-7l2-5M882 671l-5 3l-5-3l-5-1l2-1l5-2l-2 4l-3-2l-5 1l3 0M882 671l-2 7l-3-4l-3-7M882 671l2-5l5 2l0 5l0 5l-5-3l2 8l-3 0l2 5l0 5l0-5l0 0l0 5M882 671l7-3l6-1l-2 7l-4-1M889 668l4 6l-4 4l-3 5l-1 5M889 668l2-4l4 3l5 2l3 1l2 0l3 0l3-1l2 2l-5-1M277 534l-12-7l12-2M265 527l-11 11l5 7l-2 3l4 0l4-2l4 0M24 787l-2-5M24 787l-5 0M24 787l3 4l6 4M513 581l-7 0l-4 3M513 589l3 6l-3 5l-3 0M513 589l7 2l-4 4l-4-2l1 7l-1 5l0 5l1 6l3 4l-6 5l6 1M39 448l-12-3l4-13l-13 0M39 448l17-3M762 683l-1 5M84 380l12 17M456 732l4 0l-2-22M456 732l-9 0l-7 1M386 542l-2-12l-5-6M386 542l-10 1l4 3M422 735l-3-1M422 735l2 4M439 742l3 4M166 452l13 1l0 14l18-1l8-11M103 748l-4-2l-3 3M626 521l10-2l3-7M43 589l-2-3l-6 1l-2 0l-5 2l2-3l3 1M43 589l5-2l0 4l-5-2M-2 741l0 5l-4 2l4 1l1 6l-4-2l3-4l0-3M138 534l-4 6l8 0l-4 5l0 4l3-3l1-6M143 525l13-6l4-10l-6-7M143 525l4-11l13-5M451 186l14 36l-17 22M451 186l-31-6l-42 2l29-33l-37 3l-4-31M259 545l6 1l4-4M259 545l2 3l4 3l0-5M296 628l-4-1M18 742l-4 0l-3-2l-2-3l3 0l-2-3l-2 1l1 2l1-3l-3-1M191 531l6 7M191 531l-7 2l2-8l-7 3l-10-6M408 546l7-4l8 1l-4 5l-4-6l6-6l2 7l6-3l3 6l-2 4l2 6l-2 5l-1 5l1 6M408 546l-6-7l13 3M472 589l4-1M472 589l0-6M472 589l-2 7l-4-1l-4-4M472 589l3 6l-3 5l-2-4l-1 4l1 5M95 592l-4-4l2-4M370 788l0 12M370 788l-6 5l0-9l-6-3l-7 1M370 788l-6-4l6-2l0 6M658 741l3 7l9 4l7-1l-1-6l4-7l1 5l-5 2M658 741l-3 4l-2-5l-4 5l-3-6l-2-4l5-3l1 5l4-5l0-21l-5 21l0-22l-9 23l4 2M825 628l-2 0l-3 0M825 628l3 1l3-2l-6 1M595 654l-1 0M595 654l-3 5M595 654l0-5M403 669l3 1l-6 1l-2-4l-4 3l6 1M403 669l5 1l-2 0M105 671l1 3l-3 0M105 671l3-4M401 776l0 9M401 776l-4-4l-3-6l-8 2M143 595l-1-5l-4 3l-3 2M143 595l4-4l-5-1M839 773l-3-10l9-10l-8-2l0-9M839 773l-12 12l-11 5l9 3l2-8M839 773l6 9l11-6M816 745l4-4l-1-7l7 2l-1-5l-9 0l3 3l6-3l8 2l-7 3l2 6M816 745l-1 5l1 10l8 5l5-11l8-3l-1 12l-12 2M154 773l5-1l3 6M154 773l-3-5M417 770l2-7M417 770l-4 5M559 799l6 3l5 8l-11-2M559 799l-10-4l-8-4M750 667l-5 2l-5 1l2 0M339 630l-3 1l-3-4l-5 1l-3 0l-5 1l-5 2l3-4l5 1l-3 1l-2-2M339 630l1 4l-4-3l-5-2l-6-1l-2 0M-1 494l9 0M105 732l2 3l1-3l2-22M626 320l-17-11M626 320l2 22M495 772l-3-10l2-5M495 772l-8 2l-4 6l-8 0l-10-7l6-9M56 784l-2-5l-4-7l0-5l6-1M353 631l-1-3l2-4M353 631l-3 0M347 587l4-2l-3-4l-5 3l-3 4l-4-4l-3 5M347 587l-4-3l-3-3l3-4M347 587l2 3l-5 0l-4-2M347 587l1-6l4 0l-3-4M347 587l-3 3M624 776l-2 7l8 9M427 664l4 4l-5-1M431 668l4-4M375 471l10 0l13 3M375 671l-3-2l-2 1M375 671l4 3l2-5l1-5M375 671l6-2l5-3l4 3l4 1l-2 4l-5 0l-4 4l4 1l-1 4l-3-5l1-4l-5 0l4 4M864 811l-13-4l13-7l0 11l-24-1l11-3l4-10l9 3l14 0l15-7l-7-10l-4 7M864 811l14-11l-7-6M489 471l0 14l14 4M40 532l-7 7l-7-1l-4-11l-13-7l-7 4l3-12M40 532l11 4l4-6l3 8l5-7l-8-1M31 532l-1-8l-8 3l7-11l1 8l10-1l-11-7l-2-8l-7-11M31 532l2 7M31 532l-9-5M31 532l9-9l7 7l-1-10l8-10l-9 1l-9 0M300 546l-3-4l4-6l-3-9M737 711l2 22l3 2M737 711l-9 21l11 1M301 672l-1-5M301 672l3 3l-4 3l-3-4l0-5l-3-2l5-3M301 672l2-3M301 672l-4-3l-5 2l2-4l-5 2l-2 1l5 1l-3-2l-5 1l-5-1l2 1l-5 1M301 672l5-1l5-2l4-2l5 2l-2 2l-3-4l-4-3l-3-5l-6 0l3-5l0-5M301 672l-4 2l-5-3M301 672l-1 6M324 73l-16 30l-39-22l-42-48l54 16l43 24l-55 8l10 38l-41-25l-58 10l-13-26l42-9l-29 35l-16 30l32 3l-16-33M315 584l3 5l5-2l2 0l3 0M315 584l5 2l-2 3l-5 2l-3-5l-4-3l0 4l-6 2l-6-5l5-3l2 4l-1 4l-3 2l-3-7l-5 2l-5 1l-5-1l2 1M315 584l-2 7l-4-1l1-4l-4 1l3 3l-4 2l-5-3l0 6l5-3l-2 8l3 0l-1-8l1-5l-5-2l-7-1l-2 5l5 2l3 4l3 5l2 5l1-5l-1 5l0 5l0 0M281 485l11 6M227 585l4 3l-1 3l-4 4M227 585l-4-1M886 783l12 3l4-11l-11 0l-5 8M844 625l-5-5l3-4M844 625l-9-1M844 625l6 3l-4 4l3 2l5-3l5-2l5-1l5 1l-2-1l-3 0l-3 0l-2 1l-3-2l5 1M276 739l-3-5l-1 6M58 538l6 4l3 6l-5 4M254 538l-8-8l-2-10M14 742l-3 3l-4 1l-3-2M14 742l-5 0l-3-1M538 586l5-2l6 1M538 586l-3 1l6 2l2-5l4-3l4-4l2-5M538 586l3 3l4 2l-2-7M538 586l-5 1l-3 0l-5 2l2-3l3 1M533 587l2 0M533 587l-6-1l-5-2l3 5M98 666l-3 2l-4 3l-3 0M653 802l-8-8M696 784l-5-10l13 0M337 771l8-4l3-7l10 1M368 750l-5-4M547 628l-6-1l4-3l5 1l5 1l3-6l-5 2l2 4l0 7l4 1l0-4l2-6M547 628l-4 3l-5-2l3-2l-6 1M232 631l-2-2l5-2M98 566l-1-5l1 0l0 5M60 742l1-3l4 1M76 757l-2 4l1 5l5 3l2 5M76 757l-4 1l2 3l-7 2l4 5M76 757l-3-3l-1 4l-5 5l-4-5M76 757l7 2M672 634l-5-3l-5-2l-2-1l5-1M672 634l6-2l-1-6l5-6M722 556l3-4l-4-7l-8-3l-2-11l-11 4l-10-4l-8 8l-4 7l-5-7l-9 1l-1-11l-7 10l-6-2l4-7l9-1l6-7l12-8l7 6l2 11l-14-5l-7-4l-4-8l-9-3l2 8M722 556l-6 0M893 806l-15-6M592 527l8-4l5 7M592 527l-9-5l4-14M325 587l6-1l5-2l7 0M325 587l-5-1l3 1M139 649l0 0M139 649l-1 5M139 649l1-5l2-5l-4-2l4-4l-5-1l-4-1l0 3M554 739l-4-1M554 739l3 3M777 326l27 4M346 566l0 0l1 6M346 566l-1-5M247 743l-1-4l4 1l4 5l-3 6l4-2M242 743l-1 6l7-2l3 4l-5 0M678 566l-1 6M678 566l0 0l0 6M678 566l0-5l0 5M5 358l17-9l19-9l15 2M730 738l4 3M287 753l1-4l-4-2M898 589l-5 2l-4 4l-2-6M898 589l5-2M284 670l-3 0M284 670l3 0M52 678l3-1l3-3l3-1M346 623l2-7l-2-6M346 623l-3 3M113 746l-3 2M261 766l5-5M261 766l-7-5M376 534l-5-6l-4 11l9 4l0-9M858 742l6 3l8 6l2-6l-4-5M858 742l-2-6l5-5l-10 1M858 742l0 5M858 742l4-7M858 742l-5-2M545 523l3-13M545 523l-9-1l4-8l5-13l-14-13l-9 7M545 523l-5-9l-7-11l-2-15l9-5l-16-4l7 9M839 678l5-2l1 7l3-5l-4-2l-2 7l3 0M52 468l-10 8l-2 8l2 8l-2 8l5 11l3-8M5 671l-3 0M5 671l-1-4l4 2l0-3l1-2M5 671l3-2M192 476l12-1l-7-9l-5 10l-9 11l10 4l-16 7l-6-10M156 535l11-1M156 535l8 6l8 1l3 5l4-2l-7-3M191 775l-5-3M191 775l4-5M191 775l5 0l2 5l-6 2l6 3l0-5M191 775l-5 4l-5 3l0 8l2 8l2 5l-3 5M191 775l-1-8M191 775l1 7M877 310l-25 4l21 22l-21 4M-8 733l-2-2M91 588l-4-4l1 3l3 1l-2 3M91 588l4-1M292 710l13 21l-9 1M-14 511l3 31M256 732l1 3M256 732l5-1l10-24l0 24l10 0l-6 2l-4-2l5-21M256 732l5 2l3-2l7-25M256 732l-8-1l-3 2l-2 3l6-2M256 732l-3 3M256 732l-6 0l-2-1l3-21l5 22M248 731l-3-20M248 731l-8-20l2 22l1 3l-4-2M664 540l-8-1l-2-9M664 540l-2 6M564 548l-5-4M273 734l-2-3l-7 1M273 734l2-1M541 627l2 4l4 3l4 5l5 0l-2 5l-1 5M77 587l3 0M77 587l-5-1l-5-2l2 5M182 585l2 5l-5-2l-3 4l-4-5l4-1l3 2l0-7l-1-4l2-5l1 0l2 5l-5 0l-4 4l2 5l-6-2l2 3M264 378l-17 6l-13 7l15 8l-2-15l1-18l-7-21l-18 9l-17-21l-20-14l-12-22l-8-33l1-20l-1-31M672 771l-11 6l12 3M68 420l0-14l-12 17l12-3M227 735l0-3l8-22l1 22l4-21M227 735l-2 5l-2-3M55 600l1 5l0 5M163 738l-3-3l5 1l2 3l2 4M402 463l7 12l0 12l13 0l0 15l1 12l1 12l8-1l7 3l6-4l4-9M402 463l-17 8l-14-9M15 605l0 5M15 605l1-5l-3 0M15 605l0 5M53 737l-4 0M53 737l2-4l3 3l3 3l0-3l-2-2M53 737l5-1l3 0M711 707l8 26l-7-2l-4 1M711 707l1 24l-8 1l2-22l6 21M7 746l-2 4M7 746l2-4l0-5l-3 1l0-3M636 605l0 0l2-5l-2 5M255 794l0-7l-6-4l-6 1l2 8l6-2l4 4l10-1l6 0M133 631l4-3l0 4l3-1l2-3l-5 0l3 3l2 2l3-2l0 3l-3 5l0-6l3 1l4-3l3-4M133 631l1-4l-3 2l0-5l5 0l-2 3l-3-3l4-4l4-1l2-3l-4 0l2-6l0 0l-2 6M646 543l-10 0l4 4l-7 0l3 3l-6 2l3 4l2 5l1 5l1 6M646 543l-6 4l-4 3l-3 6M682 595l4-4l-3-5M723 787l-9-1l-7-6l5-7l2-8M723 787l7 0M221 572l2 0l2 5M195 385l22-3l4 14M195 385l-22-14M725 377l-29-9M340 634l3 5l2 5M723 588l2-7l4 3M228 511l2-14l7 5l7-14M228 511l9-9M228 511l-2 9l-7 5l-3 8l-6-5M867 770l-6-6l11-1M867 770l14 3M386 683l1 5l0 5l1-5l-2-5l3 0l3-5M387 688l1 0l0 5M388 566l0 0l0 6M67 763l0 7l-1 6M855 382l21 11l1-20l15 23l-16-3l14 24l-12 12M142 736l4-2M142 736l-4 1M499 374l-15 19l20 15l18 0M108 548l-5-3l-2 3M847 586l4 5l-8-2M842 582l-5-1l4-4l5 0M388 561l0 5M390 556l-5 0l2 5M390 556l-3-6l-2 6M165 586l3 3M165 586l-5 1l-6-1l-5-2l3 5M16 44l-31 8M16 44l4-48l-31 10M52 731l-4-24l10 24M309 803l4 5l-10 2l6-7M10 734l4-1l2 2M8 735l-2 3l-3 0M169 761l4-2l4-3M173 759l-5-6l3-4l6-1l0 4M80 628l-3 0l-3 0l-2 1l-3-2l5 1M142 666l4 1M223 732l-9-25l2 24M131 674l4-2M665 514l16 0l13 0l-7-9l9 1M799 556l-3-4l0-6l5 4l7 2l4-4l0-6l-6-4M799 556l2 5l1 5l-1 6M799 556l2-6l2-5M196 731l-3 0l0 3M101 741l-2 5l-1 7M220 265l15-24l26 13M220 265l-33-2l18-19M98 620l0 4l1 3l1 4l-4 2M46 520l-6 3M46 520l-1-9M408 670l3 0M408 670l6-1l5-2M794 674l-2-7l-5 2l2 2l-5-1l3-1l-6 1l3 0M794 674l-5-3l3-4M794 674l4 4l2 5M391 535l4 8M313 758l2-4l7-2M388 662l2-3l-2-5M388 662l-2 4l4-1l4-1M388 662l2 3l0-6M576 766l7 3M576 766l-3 7l-7 3M573 773l11 2l9-2l-4-7l9-1l-5 8l-5 9l-8-1l-7-8l-2-10M341 422l-19 3l-8-16M636 519l-10 11l-1 13M636 519l6 9l8 9M636 519l-7-11l8-5M629 508l2-15M99 810l-9 1l-5-5l-8 5l5 0l26 0M851 89l14-44l44 45M608 671l-5 3l-4-2M47 96l-20 31l9 34M216 629l-2-5M216 629l-4 2M216 629l0 5l5 1l-2 4l2 5l2 0M475 620l-3-4l-2-6l1 0l1 6M502 810l8-1l10-3M106 756l-5 0M106 756l6 1l-4 3l7 5l4-5l-7-3M106 756l-4 4l6 0l-2-4M473 556l-3 5l1 0M91 664l-4 3M193 731l-5 1l-5 1l-2-2l-2 2l-2-2l4 0M16 549l-2 5l4 2l0-4M537 752l-3 7M636 737l-7-1l0-5l-1-24M636 737l2 7l-7-2l-2-6M218 750l-7 2l-2-4M218 750l-6 6l-6-2l3 7l5 2l-2-7l-3 5M211 752l1 4M-4 288l21-8M-4 288l-8-70M447 784l5 4M698 736l1-4l-5 0M62 581l-2 6M59 577l-4-5M59 659l-3 1l0-3M56 660l3 5l4 2M184 590l1 5M184 590l5 1M94 221l-27 10l-2-24l28-18M263 649l1-5M885 649l-1-5l1 0l3-5l3-5l-8-2l-2-6l-7 5l3-7l-5 3l2 4l-5-2l3-2l-5 1M884 644l-2-5l3 5M221 676l5 2l-5 1l-3-1l-4-4l2-3l-1-3l1-4l3-5l3 3l6 2l-3-5l-2-5l-1-5l-1 5M221 676l0-7l-3 0l-3-1l-3-1l4-3l3 2l-4 2l-6 3l7 0l2 2l3-4l3-3l4-2l-3 5l-4 0l4 5l5-5l-5 0l-1-3l-2-4l-3 4l0-7M221 676l4-2l0-5M221 676l-3 2l2 5l2 5l0 5M221 676l-3-3l-4 1l-5-3l3-4l-5 2l-3 1l5 1l-2-2l-6 1l-5-1l2 1l-5 1l-4 3l1-4l3 1M221 676l0 3l-1 4l3 0l3-5M221 679l2 4l-1 5l0 5l0-5l0 0M504 624l6 1l-2-5l2-4l3 0l-1-6l0 0M594 26l6 40l-13 46l38-4l-14 32M661 760l4 6l-4 11M495 515l7 5l10 0M222 605l0 0M222 605l1-5M222 605l-2-5l-2-5M647 584l-3 7l-4 4l-2 5M912 448l-17-13l1 18l-11 4l-16 1l-12-7M257 548l0 4l4-4M11 592l-3-4l1-4l-4 3l-1-3M152 671l-3-4M512 605l0 5M600 628l-4-2l7-2M600 628l-6 2l-4-3l6-1l3-6l-9 0l6 6l-2 4l-4 1M262 10l46 5l-27 34l-12 32l-31 13l-29-25M262 10l19 39M262 10l-18-33l-17 56M464 732l-4 0M67 548l5-2M595 688l0 5l0-5l0 0l1-5l-1 5M-9 670l-2-1l-4-1l1 3M655 745l6 3M655 745l-6 0l-3 6M593 581l5-4M593 581l-4 0l0 5l4 0l-1 5l-5 0l-3-7l-5 2l3 3l-5-2l2-1l-5 1l3 0M593 581l0 5l-4-5M553 688l0 0l0 5M553 688l2-5l-2-7M370 587l-3 0l-5-1l-5-2l-3 3M260 584l6-3M760 654l0-5l0-5l0 5l0 0M760 654l1 0l2 5M760 654l0-5l1 5M181 572l-1-6l0 6M475 482l0-12M341 798l-10 2l-8-6M339 808l-8-8M381 669l3 5M868 509l4-13l-8-6M333 467l-8 12l10 0M802 632l-3 7M370 152l8 30l-15 30M183 556l-4-5l-4-4M373 769l4 6l-8-1l-6-3M168 753l-4-3M2 733l-2-1M426 556l4-6l5 2l-3 4l-6 0l-3-4l7-2l-4-2l6-2l3 6l4-4l5-2l-5-4l-7 4l7 2l0-6l-10-2l-8-4l10-4l-7-6l-11-9l-3 14M426 556l2 5l1 5M428 561l1 5M428 561l2 0M428 561l4-5M513 654l-1-5l-1 5M470 547l-4 1l-4-3l-6-3l-6 4l-2-7l-9 3l-8-10l1-7l-9-11l-10 3l-9-8l-8-5l-9-10M466 548l-6 0l4 4l4 4l2 5M466 548l-2 4M466 548l3-8l-7 5M222 566l-1-5l2 0l-4-5l6 0l3-4l4-4l3-6l2 4M222 566l1 6M661 731l-7 1l-5 0l-9 1M917 810l-2-15M917 810l-9-2M469 600l3 0l-1 5l-1 5M100 773l7 5l3 3l-6 3M100 773l4-2l-1-6M35 746l5 1M9 742l2-2M9 742l2 3M9 742l-3-4M448 430l17-5M455 750l4-3M802 566l0 0M522 741l-7 2M522 741l-2 5l4 7M522 741l-5-4l-4-3M522 741l3-3M96 544l-4 2l-5 2l4 4l1-6M442 772l-7-2M867 711l-6 20M328 734l-5-2l-3 1l3 3l5-2l6 0l4-1l-3-2l-1 3l2 2l4 4l-4 1l-6-3l-3 1l1-5M814 736l6 5M814 736l-5 2M814 736l-1 5M814 736l2-5l-4 1l3-22M814 736l-6-2l-5 3l-2-5l11 0l-4 2M814 736l5-2M814 736l-2-4M117 798l3-4M117 798l-2-4M117 798l-5 9M311 669l7 2l-5 3l-2-5l0-5M425 595l3-4l1 4M97 610l0-5l1 0M129 437l-13-9l-8 7M688 520l-12 6l5-12l6-9M344 634l-1 5l6-4M675 659l5 0l-2-5l-3 5l1 6l4 1l2 5l6-4M680 659l-4 6l-4-1l-5 3l5 1l4-3l2 5l2-4M513 780l-1 7l-1 11M513 780l4-9M429 540l2-8l8-4l0-9l-7 6M429 540l-3 8l-3-5M179 528l3-13M179 528l5 5M149 631l-4 0l-5 0M596 751l5-7l1-8l-2-3l-3 5l-4 8l-3-4M596 751l-3-5l-8 6M601 744l-8 2l-8-1l-3-5M601 744l7 0l1 5l-2 8l-4-9l6 1M601 744l2 4l5-4l1-7l-1-4M313 735l-4 1l-3-2l3-2l-4-1l1 3M139 605l-2-5l2 5l0 5l0-5l0 0M139 605l0 5l2 6l2 4M139 605l2-5l-4 0M108 473l-13 1M108 473l-12-13M108 473l7-12l7-14l-6-19M854 584l2 5l-5 2M309 626l-5 3l3 4l4 1l-6 2M491 670l3 0l5 1M491 670l6-1l-3 1M750 754l7 4M750 754l-10 6M511 536l0-8l8-3l-8 11l-3 6M15 811l-10-2l-4-3M898 710l4 22l1-21l3 21M167 244l-21 15M167 244l-34-3M167 244l20 19l-1-36M759 141l13 42l39 7M25 631l-3 1l-4-2l2-2l2 4M260 416l-3 12l-10-13l-6 12M260 416l-11-17l-2 16l13 1M758 639l2 5l1 0l-3-5l5 0l-2 5l-1 5M679 683l-2 5M677 675l-4 3l3 5l1-8l1-5l-6-2l-3 6l-2-7l-5 2l3 2l-5-1l2-1l-5 1l3 0M858 527l-8 3M653 485l-3-13l-11 15l0-14l-11 9M605 631l3-4l5 1M464 669l0-5M464 669l-6 2M139 566l1 6M139 566l-1-5l2 0M134 590l4 3M134 590l-4-2M559 757l-10-5l10-1l5 3l6-4M559 757l5-3l0-5M116 737l-1-3M4 773l1-4M4 773l-3 3l7 1l-6 4l5 3l-1 5M4 773l4 4l4 2l-5 5l1-7M383 595l-4-4M676 616l-3 4l4 6M679 616l-1-6M14 561l1 0l0 5M188 734l-5-1l-4 0M54 779l3-2M61 804l10 2M61 804l-6 2l-7-1M272 628l-4-1M594 561l-2-5l1-5l-4 1l-5-4l2-5M594 561l1 5M595 566l0 6M96 600l1 5M270 669l-4 0l-2 5l-1 6l2 3l-2 5l0 5l0-5l0 0M378 411l4 13M333 627l-2 2l-3-1M351 746l-2 4l-3-5l-2 4l-4-5l-4-3l-2 5M351 746l5 4l-7 0l-5-1M249 783l-4 9l-6 4l-5 4M249 783l2 7M414 809l-6-2l-11 0M722 639l-4 5M679 600l-1 5M427 495l-5 7M427 495l-5-8l-13-12l16 1l-3 11l12 0l-9-11M427 495l7-8M833 435l11-24M137 628l-3-1M304 629l-2 4l5 0M886 743l-6 1l-4-7l-2 8l-10 0M589 586l-2 5l-5-2l2-5M596 683l3-5M-1 470l-2-8M609 780l2-9M241 345l11-14l5 19M174 297l21-5l-8-29l-21 1M174 297l13-34M174 297l-8 29l5 16M483 811l-48 1M908 769l6-5l2-8M54 673l4 1l-3-4l2-3l2-2M45 738l2 3M874 631l5 3l2-8M720 279l30 1M323 732l0 4l4 3l3 4l6-2l0-5l2-3M908 628l3 1l2-2l-5 1l-3 0l-2 0M705 753l0-9l5 0M642 634l-3 5M717 514l15-8M25 584l5 2l5 1l3 0M25 584l-4-3l0 4l4-1M21 585l-2 3l5 0M431 631l-4 2l5 2M555 626l4 4l5 1M555 633l-4 6l2 5l0 5M555 633l4-3M439 542l4-8l10 0M180 561l1 0l-1 5M180 561l0 5M400 736l1-5l4 1l1-21l4 21M346 668l3 2l3-2M891 664l-7 2l4-7l-3-5M891 664l-3-5l-6 0M387 679l2 4l-1 5M573 524l0 10M573 524l9 9M701 711l3 21l-5 0l2-21M785 458l16-4l8-19l-21 0l-10 11l7 12l-16 9M892 396l-2 21l5 18M513 644l-1 5M598 591l-3 3l-2 6l-3-5l-3-4M598 591l-5-5M116 788l-4-2l4-3l-6-2l5-3M759 600l1 5l0 5M873 336l22 6M529 308l-21-29l-5-27l-18 26l19 23l4-22l36-19l-3 25l-12 23M-9 420l14-11l-13 0l-1 11l18 2M-9 420l-3-23l4 12M908 737l-5 4l6 0M765 744l5-3l2 6M688 584l5 2l-3 3l-4 2l2-7l2 5l6-2l2 0l3 0M228 742l-6 2l-2-4l-1-3l-1-4M228 742l-3-2l-5 0M225 740l3-2M225 740l-3 4l4 2l4 6M8 548l1 4M660 628l-3 0l-3 0l-2 1l-3-2l5 1M684 634l-4 5l-5 0l3 5l0 5l0 0M684 634l-6-2l2 7l-2 5M678 632l-3 7M509 673l4-1l3 0l0-4l-6 1M99 311l-1-19l21-16M33 670l2 0l3 0M469 540l5 5M346 649l0 0l1 5M167 0l-41 20M167 0l-53-30M325 748l2 4l4 4l1-5l-5 1M325 748l7 3l-2-8M165 629l-3-1M165 629l-5-1l-3 0M165 629l3-2M165 629l5 2M578 539l1 7l5 2l6-1l-1 5l3 4M218 673l0 5M218 673l0-4l-2 2M886 616l-1-6M226 520l-10-7M759 732l-7-25M759 732l-11-22M882 639l6 0l-5-7l3-4l3-8M882 639l1-7l7-3l5 2M882 639l-3-5l4-2M447 803l3-7M841 503l-12-6M301 585l5-2M513 731l-4 3M55 683l1 5l0 0l0 5l0-5l2-5l-1-4M57 561l-2 0M636 688l0 5l0-5l0 0M769 591l4-2l-2-5M225 175l-39-13l-6 24M28 589l-5 2l-4 4M429 688l0 5M20 591l-1-3l-2-6M840 810l4-10l7 7M77 670l3 0M77 670l5-1l3 2M549 595l3 5M549 595l-4-4M219 666l2 3M219 666l5 0M219 666l-1 3M340 581l-4 3M869 458l-12 13M54 753l1-4l4 1l-1-4l-3 3l-2-3M522 667l-6 1l-4-5M365 494l-1 8M239 796l1 10M82 501l8 9M673 678l-4-4l-4-3l2-4M673 678l1-6l-5 2M674 672l4-2l4 1M905 759l9 5l0 11M553 644l1 0M132 546l-5-2l7-4l4 5l-6 1M153 748l-4 2l-3-5l-3 7l1 6l1 5M343 659l-3 5l-4 3l-5 2l-6 1l-5-1l3 1l-5 1M343 659l0 6M849 634l1-6l6-1l-5-3l-1 4l4 3l2-4M849 634l-3 5l-2 5l-1 0M571 711l-1 21M335 243l-21-13M306 600l3-5l0-5M230 624l0 5M898 745l7 1M898 745l5-4M313 591l-4 4l-4-3M460 548l-4-6l-1 4M190 670l-3-2l4-1M600 508l0 15M181 605l1-5M537 776l1 7l8-2l7 6l-4 8M528 782l10 1M345 732l3 6l2-4l4-2l-9 0l5 2l4 1l5 4l4-2M475 595l4-4M222 688l1-5M122 746l1-4l2-4M142 157l44 5l-22-28M717 600l2 5M392 674l-2-5l-3 5M556 674l1-4M239 754l-2-6l4 1l-2 5M196 137l-10 25l25 36l4 24l20 19M215 222l30-17M95 556l3 5M95 556l5 0M95 556l2-3M95 556l-4-4M95 556l2 5M918 787l-4-23M895 667l3 4l5-1M893 674l5-3l2-2l5 1l6-1l5-2l2 7l-5-3l3-4M370 782l7-7M675 556l2 5M675 556l1-5l2-5l6 6l-8-1l4 5l-2 5M675 556l5 0l4-4M261 731l-10-21M261 731l-6-24M817 798l7 5l1-10M45 763l5 4M176 675l0 3l-4-4M827 531l8-6M348 760l-7 1l-4 3M341 761l4 6M246 739l-3-3l-3 3l6 0M19 588l4 3M-5 805l-2 4M506 803l4 6M90 811l-8 0l3-5M719 649l1-5M204 532l12 1M166 501l11-3l11 7M265 770l-2 7l0 6M160 670l-3 0M160 670l2 0M32 739l2-2M506 513l-6-6M506 513l-4 7l9 8M5 809l-7 2M458 627l-6 1M486 313l-21-8l20-27l23 1l33 6M486 313l-25 16l-19-20M407 753l-8 3l0-6l8 3M112 786l-2-5M346 605l2-5l-2 5M719 688l0 5M719 688l2-5M138 545l3 1M388 644l-1 0M419 548l-5-2M419 548l7 0l-3 4l-4-4M693 799l8 7l-33 4M246 473l-11-1M91 529l-6 4M177 743l0 5M177 743l-4 1M348 600l2-5l4-4l-5-1M533 670l-3 0M533 670l2 0M248 366l-25-12M179 551l3-1M179 551l0-6M265 683l-2 5M268 678l-5 2M243 546l-8-4M357 584l-6 1l1-4l5 3l2 5M604 732l-4 1l-3-2M880 595l3 5l6-5M640 158l-15-50l-25-42M253 667l1 4l2-2l1-5l5 2l-6 3l-3-2l4-3M235 589l-4-1M796 800l-4-8M306 616l-1-6M390 665l0 4M179 581l-5 0l-4 3M181 644l-1 5l1 5l0 4M813 519l-1-12l-13-8M813 519l-7-5M5 587l3 1M95 668l0-2M760 474l-19-1M443 534l-4-6M443 534l5 5l8 3M443 534l-12-2M443 534l2-10l-6-5l-16-5M638 616l-3 0M869 586l-2 1M869 586l-5 1l-5-1l2 1M317 484l3-15l5 10l5 13M317 484l8-5M885 566l0 0M789 627l5-3l-2 7M789 627l-5 1M294 807l9 3l17 2M350 673l-1-3l-3 3M760 605l1 5M760 605l1 0M760 605l2-5M187 664l0 4M583 793l-3-12M266 669l-4-3l-2 5l-2 3M266 669l-6 2l4 3M221 794l-8 1M105 737l2-2M181 610l-2 6M305 566l-1 6M305 566l0 6M305 566l0 0M305 566l0-5M305 566l-1-5M179 667l-2-3l5-1l-2-2M179 667l3-4l1-4M763 577l-3-5M626 462l-14 0M626 462l-6 12l19-1l-5-19M626 462l13 11l10-18M24 749l-2 3l4 2l1-3M713 634l-1-6l-6-1l-5 1M771 667l-8 2l6 5M-15 790l0-14M263 561l-2-5l-4-4M263 561l0 5M522 631l-2-7M197 760l2 5M99 746l-3-3M40 484l-9-8M593 600l2 5M639 473l11-1M704 586l2 3l3-5M704 586l-6 1l-5-1l3 1M174 634l1-3M174 634l4 5M131 624l-5 3l5 2M707 739l-2 5M175 509l2-11l6-11M487 732l4 2l5 0M142 639l-3 1M22 349l-8 24l17-4M80 283l18 9M26 731l-2 2l-3 0M325 779l-4 6M309 736l0-4M308 639l3-5M126 627l-2 2l-6-1l-2 0l-3 1l-3-2l-2 4M126 627l3 4M126 627l-5 1M539 741l2-4M539 741l-2-3M681 743l-4 8M243 587l5-1l3 3M243 587l-6-1l3 1M201 670l-3 0M201 670l3 0M574 670l-3 0M574 670l3 0M345 683l-3-5M405 736l0-4M406 711l-5 20M98 644l2-5M802 649l1-5l-2 0M54 510l9 8l0 13M145 585l4-1M179 674l-2-3M917 523l-1 25M110 627l6 1M713 542l-6-4l-7-3M712 628l-3 3l-3-4M816 308l-7-37M779 735l2 5M779 735l5 0l3 4M53 665l4 2M260 671l-4-2M833 584l4-3l1 6M430 654l-1-5M-9 628l-5-1M841 639l5 0M701 765l-10 9M788 435l-21 0M802 610l1 6M509 639l-3-5l-4-3l-3-4M471 750l2-5M4 631l3 1M4 631l-2-4M4 631l5 3M886 628l4 1M534 805l7 3M879 750l-7 1M879 750l-5-5l6-1l-1 6M223 453l6 11M471 605l0 5M461 329l4-24M343 639l4 5l-1 5M343 639l6 0l-2 5M216 634l3 5l3 1M246 530l-7-3M326 519l-7 10M14 373l7 21M15 561l0-3M15 561l3-5M843 654l1 0l-1-5l0 5M886 683l-1 5M913 589l-5-2M913 589l3-5M800 600l3 0M711 531l-4 7M328 670l-3 0l-2 0M346 688l0 0M576 731l1-20M623 627l-5 1M623 627l3 4M409 742l5-3M803 644l-1 5M142 556l-4 5M678 654l0-5M883 600l2 5l0 5M885 605l0 0M843 649l1-5M293 759l0 5M516 668l-3 4" stroke="#80c800" stroke-width="1" fill="none" shape-rendering="crispEdges" transform="translate(.5 .5)"/>
<rect x="0" y="690" width="904" height="29" fill="url(#spk)"/><rect x="0" y="719" width="904" height="13" fill="url(#spk2)"/><use href="#cC" x="-6" y="566"/><use href="#cC" x="35" y="566"/><use href="#cC" x="77" y="566"/><use href="#cA" x="118" y="566"/><use href="#cA" x="160" y="566"/><use href="#cA" x="201" y="566"/><use href="#cA" x="243" y="566"/><use href="#cA" x="284" y="566"/><use href="#cA" x="325" y="566"/><use href="#cA" x="367" y="566"/><use href="#cA" x="408" y="566"/><use href="#cA" x="450" y="566"/><use href="#cB" x="491" y="566"/><use href="#cB" x="533" y="566"/><use href="#cB" x="574" y="566"/><use href="#cB" x="615" y="566"/><use href="#cB" x="657" y="566"/><use href="#cB" x="698" y="566"/><use href="#cB" x="740" y="566"/><use href="#cB" x="781" y="566"/><use href="#cB" x="823" y="566"/><use href="#cB" x="864" y="566"/><use href="#cB" x="905" y="566"/><use href="#cE" x="-6" y="608"/><use href="#cE" x="35" y="608"/><use href="#cE" x="77" y="608"/><use href="#cB" x="118" y="608"/><use href="#cB" x="160" y="608"/><use href="#cB" x="201" y="608"/><use href="#cB" x="243" y="608"/><use href="#cB" x="284" y="608"/><use href="#cB" x="325" y="608"/><use href="#cB" x="367" y="608"/><use href="#cB" x="408" y="608"/><use href="#cB" x="450" y="608"/><use href="#cB" x="491" y="608"/><use href="#cB" x="533" y="608"/><use href="#cB" x="574" y="608"/><use href="#cB" x="615" y="608"/><use href="#cB" x="657" y="608"/><use href="#cB" x="698" y="608"/><use href="#cB" x="740" y="608"/><use href="#cB" x="781" y="608"/><use href="#cB" x="823" y="608"/><use href="#cB" x="864" y="608"/><use href="#cA" x="905" y="608"/><use href="#cE" x="-6" y="649"/><use href="#cE" x="35" y="649"/><use href="#cE" x="77" y="649"/><use href="#cE" x="118" y="649"/><use href="#cE" x="160" y="649"/><use href="#cE" x="201" y="649"/><use href="#cC" x="243" y="649"/><use href="#cC" x="284" y="649"/><use href="#cC" x="325" y="649"/><use href="#cC" x="367" y="649"/><use href="#cC" x="408" y="649"/><use href="#cC" x="450" y="649"/><use href="#cB" x="491" y="649"/><use href="#cB" x="533" y="649"/><use href="#cB" x="574" y="649"/><use href="#cB" x="615" y="649"/><use href="#cB" x="657" y="649"/><use href="#cB" x="698" y="649"/><use href="#cB" x="740" y="649"/><use href="#cB" x="781" y="649"/><use href="#cB" x="823" y="649"/><use href="#cB" x="864" y="649"/><use href="#cB" x="905" y="649"/><use href="#cD" x="-6" y="690"/><use href="#cD" x="35" y="690"/><use href="#cD" x="77" y="690"/><use href="#cD" x="118" y="690"/><use href="#cD" x="160" y="690"/><use href="#cD" x="201" y="690"/><use href="#cD" x="243" y="690"/><use href="#cD" x="284" y="690"/><use href="#cD" x="325" y="690"/><use href="#cD" x="367" y="690"/><use href="#cD" x="408" y="690"/><use href="#cD" x="450" y="690"/><use href="#cD" x="491" y="690"/><use href="#cD" x="533" y="690"/><use href="#cD" x="574" y="690"/><use href="#cD" x="615" y="690"/><use href="#cD" x="657" y="690"/><use href="#cD" x="698" y="690"/><use href="#cD" x="740" y="690"/><use href="#cD" x="781" y="690"/><use href="#cD" x="823" y="690"/><use href="#cD" x="864" y="690"/><use href="#cD" x="905" y="690"/><rect x="0" y="711" width="904" height="1" fill="#1e4a1e"/><use href="#ct" x="14.71" y="566.30"/><use href="#ct" x="-6.00" y="586.99"/><use href="#ct" x="56.14" y="566.30"/><use href="#ct" x="35.43" y="586.99"/><use href="#ct" x="97.57" y="566.30"/><use href="#ct" x="76.86" y="586.99"/><use href="#ct" x="139.00" y="566.30"/><use href="#ct" x="118.29" y="586.99"/><use href="#ct" x="180.44" y="566.30"/><use href="#ct" x="159.72" y="586.99"/><use href="#ct" x="221.86" y="566.30"/><use href="#ct" x="201.15" y="586.99"/><use href="#ct" x="263.29" y="566.30"/><use href="#ct" x="242.58" y="586.99"/><use href="#ct" x="304.73" y="566.30"/><use href="#ct" x="284.01" y="586.99"/><use href="#ct" x="346.16" y="566.30"/><use href="#ct" x="325.44" y="586.99"/><use href="#ct" x="387.59" y="566.30"/><use href="#ct" x="366.87" y="586.99"/><use href="#ct" x="429.01" y="566.30"/><use href="#ct" x="408.30" y="586.99"/><use href="#ct" x="470.45" y="566.30"/><use href="#ct" x="449.73" y="586.99"/><use href="#ct" x="511.88" y="566.30"/><use href="#ct" x="491.16" y="586.99"/><use href="#ct" x="553.31" y="566.30"/><use href="#ct" x="532.59" y="586.99"/><use href="#ct" x="594.74" y="566.30"/><use href="#ct" x="574.02" y="586.99"/><use href="#ct" x="636.17" y="566.30"/><use href="#ct" x="615.45" y="586.99"/><use href="#ct" x="677.60" y="566.30"/><use href="#ct" x="656.88" y="586.99"/><use href="#ct" x="719.02" y="566.30"/><use href="#ct" x="698.31" y="586.99"/><use href="#ct" x="760.45" y="566.30"/><use href="#ct" x="739.74" y="586.99"/><use href="#ct" x="801.88" y="566.30"/><use href="#ct" x="781.17" y="586.99"/><use href="#ct" x="843.31" y="566.30"/><use href="#ct" x="822.60" y="586.99"/><use href="#ct" x="884.74" y="566.30"/><use href="#ct" x="864.03" y="586.99"/><use href="#ct" x="14.71" y="607.68"/><use href="#ct" x="-6.00" y="628.37"/><use href="#ct" x="56.14" y="607.68"/><use href="#ct" x="35.43" y="628.37"/><use href="#ct" x="97.57" y="607.68"/><use href="#ct" x="76.86" y="628.37"/><use href="#ct" x="139.00" y="607.68"/><use href="#ct" x="118.29" y="628.37"/><use href="#ct" x="180.44" y="607.68"/><use href="#ct" x="159.72" y="628.37"/><use href="#ct" x="221.86" y="607.68"/><use href="#ct" x="201.15" y="628.37"/><use href="#ct" x="263.29" y="607.68"/><use href="#ct" x="242.58" y="628.37"/><use href="#ct" x="304.73" y="607.68"/><use href="#ct" x="284.01" y="628.37"/><use href="#ct" x="346.16" y="607.68"/><use href="#ct" x="325.44" y="628.37"/><use href="#ct" x="387.59" y="607.68"/><use href="#ct" x="366.87" y="628.37"/><use href="#ct" x="429.01" y="607.68"/><use href="#ct" x="408.30" y="628.37"/><use href="#ct" x="470.45" y="607.68"/><use href="#ct" x="449.73" y="628.37"/><use href="#ct" x="511.88" y="607.68"/><use href="#ct" x="491.16" y="628.37"/><use href="#ct" x="553.31" y="607.68"/><use href="#ct" x="532.59" y="628.37"/><use href="#ct" x="594.74" y="607.68"/><use href="#ct" x="574.02" y="628.37"/><use href="#ct" x="636.17" y="607.68"/><use href="#ct" x="615.45" y="628.37"/><use href="#ct" x="677.60" y="607.68"/><use href="#ct" x="656.88" y="628.37"/><use href="#ct" x="719.02" y="607.68"/><use href="#ct" x="698.31" y="628.37"/><use href="#ct" x="760.45" y="607.68"/><use href="#ct" x="739.74" y="628.37"/><use href="#ct" x="801.88" y="607.68"/><use href="#ct" x="781.17" y="628.37"/><use href="#ct" x="843.31" y="607.68"/><use href="#ct" x="822.60" y="628.37"/><use href="#ct" x="884.74" y="607.68"/><use href="#ct" x="864.03" y="628.37"/><use href="#ct" x="14.71" y="649.06"/><use href="#ct" x="-6.00" y="669.75"/><use href="#ct" x="56.14" y="649.06"/><use href="#ct" x="35.43" y="669.75"/><use href="#ct" x="97.57" y="649.06"/><use href="#ct" x="76.86" y="669.75"/><use href="#ct" x="139.00" y="649.06"/><use href="#ct" x="118.29" y="669.75"/><use href="#ct" x="180.44" y="649.06"/><use href="#ct" x="159.72" y="669.75"/><use href="#ct" x="221.86" y="649.06"/><use href="#ct" x="201.15" y="669.75"/><use href="#ct" x="263.29" y="649.06"/><use href="#ct" x="242.58" y="669.75"/><use href="#ct" x="304.73" y="649.06"/><use href="#ct" x="284.01" y="669.75"/><use href="#ct" x="346.16" y="649.06"/><use href="#ct" x="325.44" y="669.75"/><use href="#ct" x="387.59" y="649.06"/><use href="#ct" x="366.87" y="669.75"/><use href="#ct" x="429.01" y="649.06"/><use href="#ct" x="408.30" y="669.75"/><use href="#ct" x="470.45" y="649.06"/><use href="#ct" x="449.73" y="669.75"/><use href="#ct" x="511.88" y="649.06"/><use href="#ct" x="491.16" y="669.75"/><use href="#ct" x="553.31" y="649.06"/><use href="#ct" x="532.59" y="669.75"/><use href="#ct" x="594.74" y="649.06"/><use href="#ct" x="574.02" y="669.75"/><use href="#ct" x="636.17" y="649.06"/><use href="#ct" x="615.45" y="669.75"/><use href="#ct" x="677.60" y="649.06"/><use href="#ct" x="656.88" y="669.75"/><use href="#ct" x="719.02" y="649.06"/><use href="#ct" x="698.31" y="669.75"/><use href="#ct" x="760.45" y="649.06"/><use href="#ct" x="739.74" y="669.75"/><use href="#ct" x="801.88" y="649.06"/><use href="#ct" x="781.17" y="669.75"/><use href="#ct" x="843.31" y="649.06"/><use href="#ct" x="822.60" y="669.75"/><use href="#ct" x="884.74" y="649.06"/><use href="#ct" x="864.03" y="669.75"/><use href="#ct2" x="14.71" y="690.44"/><use href="#ct2" x="-6.00" y="711.13"/><use href="#ct2" x="56.14" y="690.44"/><use href="#ct2" x="35.43" y="711.13"/><use href="#ct2" x="97.57" y="690.44"/><use href="#ct2" x="76.86" y="711.13"/><use href="#ct2" x="139.00" y="690.44"/><use href="#ct2" x="118.29" y="711.13"/><use href="#ct2" x="180.44" y="690.44"/><use href="#ct2" x="159.72" y="711.13"/><use href="#ct2" x="221.86" y="690.44"/><use href="#ct2" x="201.15" y="711.13"/><use href="#ct2" x="263.29" y="690.44"/><use href="#ct2" x="242.58" y="711.13"/><use href="#ct2" x="304.73" y="690.44"/><use href="#ct2" x="284.01" y="711.13"/><use href="#ct2" x="346.16" y="690.44"/><use href="#ct2" x="325.44" y="711.13"/><use href="#ct2" x="387.59" y="690.44"/><use href="#ct2" x="366.87" y="711.13"/><use href="#ct2" x="429.01" y="690.44"/><use href="#ct2" x="408.30" y="711.13"/><use href="#ct2" x="470.45" y="690.44"/><use href="#ct2" x="449.73" y="711.13"/><use href="#ct2" x="511.88" y="690.44"/><use href="#ct2" x="491.16" y="711.13"/><use href="#ct2" x="553.31" y="690.44"/><use href="#ct2" x="532.59" y="711.13"/><use href="#ct2" x="594.74" y="690.44"/><use href="#ct2" x="574.02" y="711.13"/><use href="#ct2" x="636.17" y="690.44"/><use href="#ct2" x="615.45" y="711.13"/><use href="#ct2" x="677.60" y="690.44"/><use href="#ct2" x="656.88" y="711.13"/><use href="#ct2" x="719.02" y="690.44"/><use href="#ct2" x="698.31" y="711.13"/><use href="#ct2" x="760.45" y="690.44"/><use href="#ct2" x="739.74" y="711.13"/><use href="#ct2" x="801.88" y="690.44"/><use href="#ct2" x="781.17" y="711.13"/><use href="#ct2" x="843.31" y="690.44"/><use href="#ct2" x="822.60" y="711.13"/><use href="#ct2" x="884.74" y="690.44"/><use href="#ct2" x="864.03" y="711.13"/>
</svg>
<div class="a" style="left:286px;top:916px;width:912px;height:34px;background:#f0f0f0"></div>
<div class="a" style="left:286px;top:914px;width:366px;height:34px;background:#fff;border:1px solid #a0a0a0;border-top:none;border-radius:0 0 5px 5px"></div>
<div class="t" style="left:292.5px;top:926.3px;font-size:16.2px;color:#000;font-weight:bold;">Test_winding_ac_complet_1hz_accurate.mod</div>
<div class="t" style="left:659.5px;top:925.9px;font-size:16.6px;color:#707070;">Test_winding_tr_ex1.mod</div>
<svg style="left:1156px;top:925px" width="36" height="16"><path d="M11 1.5v12l-8-6z" fill="none" stroke="#555" stroke-width="1.3"/><path d="M25 1.5v12l8-6z" fill="none" stroke="#555" stroke-width="1.3"/></svg>
<div class="a" style="left:416px;top:8px;width:343px;height:613px;border-radius:8px;background:#f0f0f0;border:1px solid #9a9a9a;box-shadow:0 14px 44px rgba(0,0,0,0.34),0 0 10px rgba(0,0,0,0.16);overflow:hidden">
<div class="a" style="left:0;top:0;width:343px;height:44px;background:#fff"></div>
</div>
<div class="t" style="left:427.0px;top:21.8px;font-size:18px;color:#9a9a9a;">Insert Shape</div>
<svg style="left:645px;top:18px" width="90" height="24"><text x="4" y="18" font-family="Liberation Sans" font-size="18" fill="#8a8a8a">?</text><path d="M71.5 4.5L86 19M86 4.5L71.5 19" stroke="#666" stroke-width="1.4"/></svg>
<div class="t" style="left:431.0px;top:73.9px;font-size:15.5px;color:#000;">Shape:</div>
<div class="a" style="left:495px;top:70px;width:248px;height:26px;background:#fdfdfd;border:1px solid #d4d4d4;border-radius:3px"></div>
<div class="t" style="left:498.0px;top:75.4px;font-size:15.5px;color:#000;">Ellipse</div>
<svg style="left:723px;top:79px" width="14" height="8"><path d="M1 1.5l5.5 5 5.5-5" fill="none" stroke="#333" stroke-width="1.2"/></svg>
<div class="a" style="left:432px;top:117px;width:311px;height:205px;border:1px solid #d8d8d8"></div>
<div class="a" style="left:438px;top:110px;width:56px;height:14px;background:#f0f0f0"></div>
<div class="t" style="left:440.0px;top:110.4px;font-size:15.5px;color:#000;">Outline</div>
<div class="a" style="left:445px;top:133px;width:279px;height:176px;background:#fff;border:1px solid #000"></div>
<svg style="left:445px;top:133px" width="279" height="176">
<rect x="42.5" y="27.5" width="194" height="122" fill="none" stroke="#000" stroke-dasharray="3 2"/>
<ellipse cx="139.5" cy="88.5" rx="97" ry="61" fill="none" stroke="#000"/>
<g fill="#fff" stroke="#000">
<circle cx="42.5" cy="27.5" r="3.3"/><circle cx="139.5" cy="27.5" r="3.3"/><circle cx="236.5" cy="27.5" r="3.3"/>
<circle cx="42.5" cy="88.5" r="3.3"/><circle cx="236.5" cy="88.5" r="3.3"/>
<circle cx="42.5" cy="149.5" r="3.3"/><circle cx="139.5" cy="149.5" r="3.3"/><circle cx="236.5" cy="149.5" r="3.3"/>
</g>
<circle cx="139" cy="88" r="3.6" fill="#f8f060" stroke="#000" stroke-width="1"/>
</svg>
<div class="t" style="left:587.5px;top:200.1px;font-size:16.4px;color:#000;">(x,y)</div>
<div class="t" style="left:688.0px;top:219.4px;font-size:15.5px;color:#000;">h</div>
<div class="t" style="left:577.0px;top:288.4px;font-size:15.5px;color:#000;">w</div>
<div class="a" style="left:432px;top:337px;width:311px;height:102px;border:1px solid #d8d8d8"></div>
<div class="a" style="left:438px;top:330px;width:36px;height:14px;background:#f0f0f0"></div>
<div class="t" style="left:440.5px;top:330.9px;font-size:15.5px;color:#000;">Size</div>
<div class="t" style="left:447.5px;top:360.9px;font-size:15.5px;color:#000;">w =</div>
<div class="a" style="left:489px;top:352px;width:84px;height:30px;background:#fff;border-radius:3px;border:1px solid #e6e6e6;border-bottom:1px solid #8a8a8a"></div>
<div class="t" style="left:495.0px;top:356.9px;font-size:15.5px;color:#000;">0</div>
<div class="t" style="left:600.5px;top:360.9px;font-size:15.5px;color:#000;">h =</div>
<div class="a" style="left:641px;top:352px;width:84px;height:30px;background:#fff;border-radius:3px;border:1px solid #e6e6e6;border-bottom:1px solid #8a8a8a"></div>
<div class="t" style="left:647.0px;top:356.9px;font-size:15.5px;color:#000;">0</div>
<div class="t" style="left:447.5px;top:401.9px;font-size:15.5px;color:#000;">Precision:</div>
<div class="a" style="left:529px;top:394px;width:197px;height:27px;background:#fff;border:1px solid #7a7a7a;border-radius:3px"></div>
<div class="t" style="left:536.0px;top:400.4px;font-size:15.5px;color:#000;">Normal (36 arcs)</div>
<svg style="left:706px;top:403px" width="14" height="8"><path d="M1 1.5l5.5 5 5.5-5" fill="none" stroke="#333" stroke-width="1.2"/></svg>
<div class="a" style="left:432px;top:454px;width:311px;height:101px;border:1px solid #d8d8d8"></div>
<div class="a" style="left:438px;top:447px;width:62px;height:14px;background:#f0f0f0"></div>
<div class="t" style="left:440.5px;top:448.9px;font-size:15.5px;color:#000;">Position</div>
<div class="t" style="left:447.5px;top:477.9px;font-size:15.5px;color:#000;">x =</div>
<div class="a" style="left:489px;top:469px;width:84px;height:31px;background:#fff;border-radius:3px;border:1px solid #e6e6e6;border-bottom:1px solid #8a8a8a"></div>
<div class="t" style="left:495.0px;top:473.9px;font-size:15.5px;color:#000;">0</div>
<div class="t" style="left:600.5px;top:477.9px;font-size:15.5px;color:#000;">y =</div>
<div class="a" style="left:641px;top:469px;width:84px;height:31px;background:#fff;border-radius:3px;border:1px solid #e6e6e6;border-bottom:1px solid #8a8a8a"></div>
<div class="t" style="left:647.0px;top:473.9px;font-size:15.5px;color:#000;">0</div>
<div class="t" style="left:444.5px;top:517.9px;font-size:15.5px;color:#000;">alpha =</div>
<div class="a" style="left:513px;top:509px;width:60px;height:31px;background:#fff;border-radius:3px;border:1px solid #e6e6e6;border-bottom:1px solid #8a8a8a"></div>
<div class="t" style="left:519.0px;top:513.9px;font-size:15.5px;color:#000;">0</div>
<div class="a" style="left:507px;top:572px;width:111px;height:30px;background:#fdfdfd;border:1px solid #d0d0d0;border-bottom-color:#a8a8a8;border-radius:4px"></div>
<div class="t" style="left:541.0px;top:579.9px;font-size:15.5px;color:#000;">Insert</div>
<div class="a" style="left:631px;top:572px;width:111px;height:30px;background:#fdfdfd;border:1px solid #d0d0d0;border-bottom-color:#a8a8a8;border-radius:4px"></div>
<div class="t" style="left:666.0px;top:579.9px;font-size:15.5px;color:#000;">Close</div>
</body></html>
